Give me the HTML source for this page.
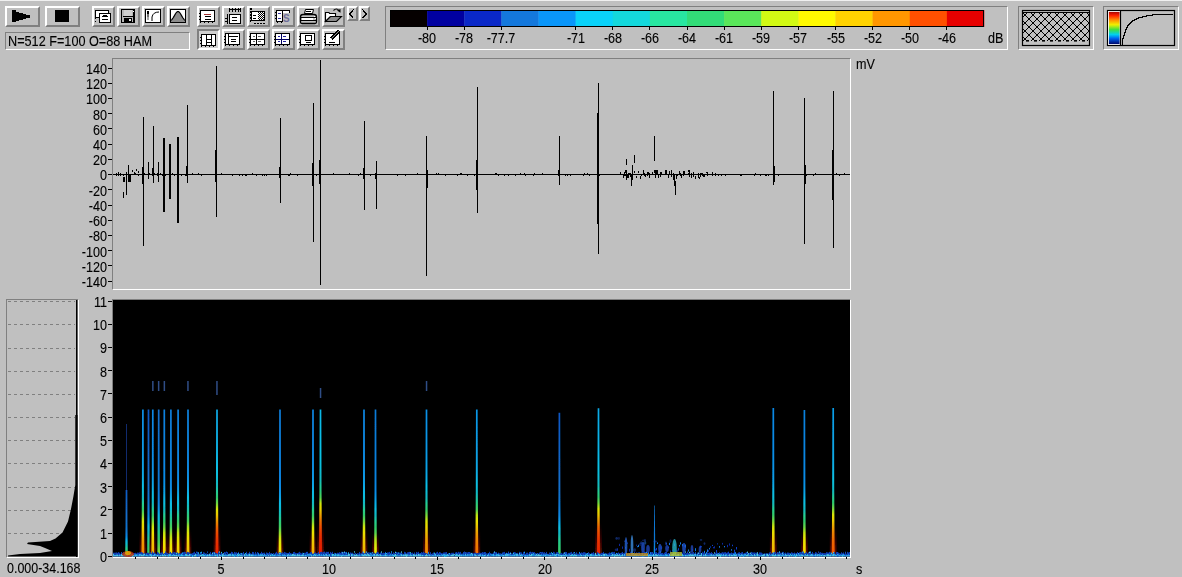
<!DOCTYPE html><html><head><meta charset="utf-8"><style>
*{margin:0;padding:0;box-sizing:border-box}
html,body{width:1182px;height:577px;overflow:hidden;background:#c0c0c0}
body{position:relative;font-family:"Liberation Sans",sans-serif;color:#000}
.a{position:absolute}
.btn{position:absolute;background:#c0c0c0;border-style:solid;border-width:2px;border-color:#fff #808080 #808080 #fff}
.sunk{position:absolute;border-style:solid;border-width:1px;border-color:#808080 #fff #fff #808080}
.t{position:absolute;font-size:14px;line-height:14px;white-space:nowrap;transform-origin:50% 50%;transform:scaleX(0.9);filter:grayscale(1);-webkit-text-stroke:0.12px #000}
svg{position:absolute;left:0;top:0}
</style></head><body>

<div class="a" style="left:0;top:0;width:1182px;height:1px;background:#f0f0f0"></div>
<div class="btn" style="left:5px;top:6px;width:35px;height:21px"></div>
<div class="btn" style="left:45px;top:6px;width:35px;height:21px"></div>
<div class="btn" style="left:92px;top:6px;width:23px;height:21px"></div>
<div class="btn" style="left:117px;top:6px;width:23px;height:21px"></div>
<div class="btn" style="left:142px;top:6px;width:23px;height:21px"></div>
<div class="btn" style="left:167px;top:6px;width:23px;height:21px"></div>
<div class="btn" style="left:197px;top:6px;width:23px;height:21px"></div>
<div class="btn" style="left:222px;top:6px;width:23px;height:21px"></div>
<div class="btn" style="left:247px;top:6px;width:23px;height:21px"></div>
<div class="btn" style="left:272px;top:6px;width:23px;height:21px"></div>
<div class="btn" style="left:297px;top:6px;width:23px;height:21px"></div>
<div class="btn" style="left:322px;top:6px;width:23px;height:21px"></div>
<div class="btn" style="left:347px;top:6px;width:11px;height:15px"></div>
<div class="btn" style="left:359px;top:6px;width:11px;height:15px"></div>
<div class="btn" style="left:197px;top:29px;width:23px;height:21px;border-color:#808080 #fff #fff #808080;background:#d0d0d0"></div>
<div class="btn" style="left:222px;top:29px;width:23px;height:21px"></div>
<div class="btn" style="left:247px;top:29px;width:23px;height:21px"></div>
<div class="btn" style="left:272px;top:29px;width:23px;height:21px"></div>
<div class="btn" style="left:297px;top:29px;width:23px;height:21px"></div>
<div class="btn" style="left:322px;top:29px;width:23px;height:21px"></div>
<svg width="400" height="55" shape-rendering="crispEdges"><polygon points="12,10 12,22 16,22 16,21 19,21 19,20 23,20 23,19 26,19 26,18 30,18 30,15 26,15 26,14 23,14 23,13 19,13 19,12 16,12 16,11 16,10" fill="#000"/><rect x="55" y="10" width="14" height="12" fill="#000"/><rect x="95" y="10" width="14" height="8" fill="#000"/><rect x="96" y="11" width="12" height="6" fill="#fff"/><rect x="99" y="13" width="12" height="10" fill="#000"/><rect x="100" y="14" width="10" height="8" fill="#fff"/><rect x="102" y="16" width="6" height="1" fill="#000"/><rect x="103" y="15" width="4" height="1" fill="#000"/><rect x="102" y="19" width="6" height="1" fill="#000"/><rect x="95" y="12" width="1" height="1" fill="#000"/><rect x="95" y="15" width="1" height="1" fill="#000"/><rect x="95" y="18" width="1" height="1" fill="#000"/><rect x="95" y="21" width="1" height="1" fill="#000"/><rect x="101" y="22" width="1" height="1" fill="#000"/><rect x="104" y="22" width="1" height="1" fill="#000"/><rect x="107" y="22" width="1" height="1" fill="#000"/><rect x="110" y="22" width="1" height="1" fill="#000"/><rect x="121" y="9" width="14" height="14" fill="#000"/><rect x="122" y="10" width="12" height="12" fill="#b8b8b8"/><rect x="124" y="10" width="8" height="6" fill="#d0d0d0"/><rect x="123" y="16" width="10" height="1" fill="#000"/><rect x="133" y="10" width="1" height="12" fill="#000"/><rect x="124" y="18" width="8" height="4" fill="#000"/><rect x="129" y="19" width="2" height="2" fill="#e8e8e8"/><rect x="133" y="11" width="1" height="1" fill="#fff"/><rect x="145" y="9" width="16" height="14" fill="#000"/><rect x="146" y="10" width="14" height="12" fill="#fff"/><rect x="147" y="11" width="2" height="3" fill="#000"/><rect x="147" y="14" width="2" height="3" fill="#707070"/><rect x="147" y="17" width="2" height="3" fill="#a8a8a8"/><path d="M152 21 L152 17 Q153 12 159 12" fill="none" stroke="#000" stroke-width="1" shape-rendering="auto"/><rect x="170" y="9" width="16" height="14" fill="#000"/><rect x="171" y="10" width="14" height="12" fill="#fff"/><polygon points="171.0,20.41 171.5,19.94 172.0,19.38 172.5,18.73 173.0,18.00 173.5,17.19 174.0,16.34 174.5,15.45 175.0,14.58 175.5,13.75 176.0,13.00 176.5,12.37 177.0,11.90 177.5,11.60 178.0,11.50 178.5,11.60 179.0,11.90 179.5,12.37 180.0,13.00 180.5,13.75 181.0,14.58 181.5,15.45 182.0,16.34 182.5,17.19 183.0,18.00 183.5,18.73 184.0,19.38 184.5,19.94 185.0,20.41 185,22 171,22" fill="#8c8c8c"/><polyline points="171.0,20.41 171.5,19.94 172.0,19.38 172.5,18.73 173.0,18.00 173.5,17.19 174.0,16.34 174.5,15.45 175.0,14.58 175.5,13.75 176.0,13.00 176.5,12.37 177.0,11.90 177.5,11.60 178.0,11.50 178.5,11.60 179.0,11.90 179.5,12.37 180.0,13.00 180.5,13.75 181.0,14.58 181.5,15.45 182.0,16.34 182.5,17.19 183.0,18.00 183.5,18.73 184.0,19.38 184.5,19.94 185.0,20.41" fill="none" stroke="#000" stroke-width="1.2" shape-rendering="auto"/><rect x="200" y="10" width="15" height="12" fill="#000"/><rect x="201" y="11" width="13" height="10" fill="#fff"/><path d="M204 14.5 L211 14.5" stroke="#a03030" stroke-width="1"/><rect x="205" y="16" width="6" height="1" fill="#000"/><rect x="205" y="19" width="6" height="1" fill="#000"/><rect x="199" y="13" width="1" height="1" fill="#000"/><rect x="199" y="16" width="1" height="1" fill="#000"/><rect x="199" y="19" width="1" height="1" fill="#000"/><rect x="200" y="22" width="1" height="1" fill="#000"/><rect x="204" y="22" width="1" height="1" fill="#000"/><rect x="208" y="22" width="1" height="1" fill="#000"/><rect x="212" y="22" width="1" height="1" fill="#000"/><rect x="229" y="9" width="11" height="1" fill="#000"/><rect x="229" y="8" width="1" height="4" fill="#000"/><rect x="232" y="8" width="1" height="4" fill="#000"/><rect x="235" y="8" width="1" height="4" fill="#000"/><rect x="238" y="8" width="1" height="4" fill="#000"/><rect x="240" y="8" width="1" height="4" fill="#000"/><rect x="229" y="14" width="12" height="10" fill="#000"/><rect x="230" y="15" width="10" height="8" fill="#fff"/><rect x="227" y="14" width="1" height="10" fill="#000"/><rect x="225" y="18" width="2" height="1" fill="#000"/><rect x="225" y="21" width="2" height="1" fill="#000"/><rect x="232" y="17" width="5" height="1" fill="#000"/><rect x="232" y="20" width="5" height="1" fill="#000"/><rect x="250" y="8" width="2" height="2" fill="#000"/><rect x="250" y="11" width="1" height="2" fill="#000"/><rect x="250" y="14" width="1" height="2" fill="#000"/><rect x="250" y="17" width="1" height="2" fill="#000"/><rect x="250" y="20" width="1" height="2" fill="#000"/><rect x="251" y="11" width="14" height="10" fill="#000"/><rect x="252" y="12" width="12" height="8" fill="#fff"/><rect x="258" y="12" width="1" height="1" fill="#000"/><rect x="260" y="12" width="1" height="1" fill="#000"/><rect x="262" y="12" width="1" height="1" fill="#000"/><rect x="259" y="13" width="1" height="1" fill="#000"/><rect x="261" y="13" width="1" height="1" fill="#000"/><rect x="263" y="13" width="1" height="1" fill="#000"/><rect x="258" y="14" width="1" height="1" fill="#000"/><rect x="260" y="14" width="1" height="1" fill="#000"/><rect x="262" y="14" width="1" height="1" fill="#000"/><rect x="259" y="15" width="1" height="1" fill="#000"/><rect x="261" y="15" width="1" height="1" fill="#000"/><rect x="263" y="15" width="1" height="1" fill="#000"/><rect x="258" y="16" width="1" height="1" fill="#000"/><rect x="260" y="16" width="1" height="1" fill="#000"/><rect x="262" y="16" width="1" height="1" fill="#000"/><rect x="259" y="17" width="1" height="1" fill="#000"/><rect x="261" y="17" width="1" height="1" fill="#000"/><rect x="263" y="17" width="1" height="1" fill="#000"/><rect x="258" y="18" width="1" height="1" fill="#000"/><rect x="260" y="18" width="1" height="1" fill="#000"/><rect x="262" y="18" width="1" height="1" fill="#000"/><rect x="259" y="19" width="1" height="1" fill="#000"/><rect x="261" y="19" width="1" height="1" fill="#000"/><rect x="263" y="19" width="1" height="1" fill="#000"/><rect x="253" y="15" width="3" height="1" fill="#000"/><rect x="253" y="18" width="3" height="1" fill="#000"/><rect x="254" y="23" width="2" height="1" fill="#000"/><rect x="257" y="23" width="2" height="1" fill="#000"/><rect x="260" y="23" width="2" height="1" fill="#000"/><rect x="263" y="23" width="2" height="1" fill="#000"/><rect x="276" y="10" width="14" height="1" fill="#000"/><rect x="276" y="10" width="1" height="12" fill="#000"/><rect x="276" y="21" width="7" height="1" fill="#000"/><rect x="282" y="10" width="1" height="12" fill="#000"/><rect x="289" y="10" width="1" height="3" fill="#000"/><rect x="277" y="11" width="5" height="10" fill="#fff"/><rect x="283" y="11" width="6" height="2" fill="#fff"/><path d="M278 14 L281 13 M278 19 L281 18" stroke="#3030a0" stroke-width="1"/><text x="283" y="21.5" font-family="Liberation Sans" font-size="10" font-weight="bold" fill="#70709a">S</text><rect x="275" y="12" width="1" height="1" fill="#000"/><rect x="275" y="15" width="1" height="1" fill="#000"/><rect x="275" y="18" width="1" height="1" fill="#000"/><rect x="277" y="22" width="1" height="1" fill="#000"/><rect x="281" y="22" width="1" height="1" fill="#000"/><path d="M305.5 9.5 L313.5 9.5 L312.5 13.5 L304.5 13.5 Z" fill="#fff" stroke="#000" stroke-width="1" shape-rendering="auto"/><rect x="306" y="11" width="5" height="1" fill="#000"/><path d="M300.5 17 Q300.5 14.5 303 14.5 L314 14.5 Q316.5 14.5 316.5 17 L316.5 22 Q316.5 23.5 315 23.5 L302 23.5 Q300.5 23.5 300.5 22 Z" fill="#c0c0c0" stroke="#000" stroke-width="1.3" shape-rendering="auto"/><rect x="302" y="18" width="11" height="2" fill="#fff"/><rect x="301" y="17" width="15" height="1" fill="#000"/><rect x="301" y="20" width="15" height="1" fill="#000"/><rect x="314" y="16" width="1" height="1" fill="#fff"/><rect x="315" y="18" width="1" height="1" fill="#fff"/><path d="M325.5 21.5 V12.5 H329 L329.5 13.5 H335.5 V17 H330 Z" fill="#fff" stroke="#000" stroke-width="1.1" shape-rendering="auto"/><path d="M325.5 21.5 L330.5 16.5 H341.5 L336.5 21.5 Z" fill="#8c8c8c" stroke="#000" stroke-width="1.1" shape-rendering="auto"/><path d="M333.5 10.5 Q336.5 7.5 339 10.5" fill="none" stroke="#000" stroke-width="1.1" shape-rendering="auto"/><path d="M337 10.5 L340.5 12.8 L340.5 9 Z" fill="#000" shape-rendering="auto"/><path d="M353.5 9.5 L349.5 14 L353.5 18.5" fill="none" stroke="#000" stroke-width="1.3"/><path d="M362.5 9.5 L366.5 14 L362.5 18.5" fill="none" stroke="#000" stroke-width="1.3"/><g transform="translate(-1,-1)"></g><rect x="201" y="34" width="15" height="12" fill="#000"/><rect x="202" y="35" width="13" height="10" fill="#fff"/><rect x="200" y="37" width="1" height="1" fill="#000"/><rect x="200" y="40" width="1" height="1" fill="#000"/><rect x="200" y="43" width="1" height="1" fill="#000"/><rect x="201" y="46" width="1" height="1" fill="#000"/><rect x="205" y="46" width="1" height="1" fill="#000"/><rect x="209" y="46" width="1" height="1" fill="#000"/><rect x="213" y="46" width="1" height="1" fill="#000"/><rect x="206" y="35" width="1" height="10" fill="#000"/><rect x="211" y="35" width="1" height="10" fill="#000"/><rect x="207" y="39" width="4" height="1" fill="#000"/><rect x="207" y="42" width="4" height="1" fill="#000"/><g transform="translate(-1,-1)"><rect x="226" y="34" width="15" height="12" fill="#000"/><rect x="227" y="35" width="13" height="10" fill="#fff"/><rect x="225" y="37" width="1" height="1" fill="#000"/><rect x="225" y="40" width="1" height="1" fill="#000"/><rect x="225" y="43" width="1" height="1" fill="#000"/><rect x="226" y="46" width="1" height="1" fill="#000"/><rect x="230" y="46" width="1" height="1" fill="#000"/><rect x="234" y="46" width="1" height="1" fill="#000"/><rect x="238" y="46" width="1" height="1" fill="#000"/><rect x="229" y="35" width="1" height="10" fill="#000"/><rect x="230" y="37" width="9" height="1" fill="#000"/><rect x="232" y="40" width="5" height="1" fill="#000"/><rect x="232" y="42" width="5" height="1" fill="#000"/><rect x="251" y="34" width="15" height="12" fill="#000"/><rect x="252" y="35" width="13" height="10" fill="#fff"/><rect x="250" y="37" width="1" height="1" fill="#000"/><rect x="250" y="40" width="1" height="1" fill="#000"/><rect x="250" y="43" width="1" height="1" fill="#000"/><rect x="251" y="46" width="1" height="1" fill="#000"/><rect x="255" y="46" width="1" height="1" fill="#000"/><rect x="259" y="46" width="1" height="1" fill="#000"/><rect x="263" y="46" width="1" height="1" fill="#000"/><rect x="257" y="35" width="1" height="10" fill="#000"/><rect x="252" y="40" width="13" height="1" fill="#000"/><path d="M254 38 L256 37 M259 37 L262 38 M254 43 L256 42 M259 42 L262 43" stroke="#606060" stroke-width="1"/><rect x="276" y="34" width="15" height="12" fill="#000"/><rect x="277" y="35" width="13" height="10" fill="#fff"/><rect x="275" y="37" width="1" height="1" fill="#000"/><rect x="275" y="40" width="1" height="1" fill="#000"/><rect x="275" y="43" width="1" height="1" fill="#000"/><rect x="276" y="46" width="1" height="1" fill="#000"/><rect x="280" y="46" width="1" height="1" fill="#000"/><rect x="284" y="46" width="1" height="1" fill="#000"/><rect x="288" y="46" width="1" height="1" fill="#000"/><rect x="282" y="35" width="1" height="10" fill="#000060"/><rect x="277" y="40" width="13" height="1" fill="#000060"/><path d="M279 38 L281 37 M284 37 L287 38 M279 43 L281 42 M284 42 L287 43" stroke="#2020a0" stroke-width="1"/><rect x="301" y="34" width="15" height="12" fill="#000"/><rect x="302" y="35" width="13" height="10" fill="#fff"/><rect x="300" y="37" width="1" height="1" fill="#000"/><rect x="300" y="40" width="1" height="1" fill="#000"/><rect x="300" y="43" width="1" height="1" fill="#000"/><rect x="301" y="46" width="1" height="1" fill="#000"/><rect x="305" y="46" width="1" height="1" fill="#000"/><rect x="309" y="46" width="1" height="1" fill="#000"/><rect x="313" y="46" width="1" height="1" fill="#000"/><rect x="306" y="36" width="7" height="6" fill="#000"/><rect x="307" y="37" width="5" height="4" fill="#fff"/><rect x="307" y="43" width="5" height="1" fill="#000"/><rect x="326" y="34" width="15" height="12" fill="#000"/><rect x="327" y="35" width="13" height="10" fill="#fff"/><rect x="325" y="37" width="1" height="1" fill="#000"/><rect x="325" y="40" width="1" height="1" fill="#000"/><rect x="325" y="43" width="1" height="1" fill="#000"/><rect x="326" y="46" width="1" height="1" fill="#000"/><rect x="330" y="46" width="1" height="1" fill="#000"/><rect x="334" y="46" width="1" height="1" fill="#000"/><rect x="338" y="46" width="1" height="1" fill="#000"/><path d="M332 40 L340 32" stroke="#000" stroke-width="3"/><path d="M332 40 L340 32" stroke="#909090" stroke-width="1.2"/><rect x="330" y="43" width="6" height="1" fill="#000"/></g></svg>
<div class="sunk" style="left:5px;top:32px;width:185px;height:18px"></div>
<div class="t" style="left:8px;top:34px;transform-origin:0 50%;transform:scaleX(0.905)">N=512 F=100 O=88 HAM</div>
<div class="sunk" style="left:385px;top:6px;width:623px;height:44px"></div>
<svg width="1010" height="50"><rect x="390.00" y="10" width="37.42" height="17" fill="#050000"/><rect x="427.12" y="10" width="37.42" height="17" fill="#0000a0"/><rect x="464.25" y="10" width="37.42" height="17" fill="#0a28c8"/><rect x="501.38" y="10" width="37.42" height="17" fill="#1478dc"/><rect x="538.50" y="10" width="37.42" height="17" fill="#0a96fa"/><rect x="575.62" y="10" width="37.42" height="17" fill="#0ad2fa"/><rect x="612.75" y="10" width="37.42" height="17" fill="#14d8dc"/><rect x="649.88" y="10" width="37.42" height="17" fill="#28e6a0"/><rect x="687.00" y="10" width="37.42" height="17" fill="#32dc78"/><rect x="724.12" y="10" width="37.42" height="17" fill="#5ae65a"/><rect x="761.25" y="10" width="37.42" height="17" fill="#d2fa14"/><rect x="798.38" y="10" width="37.42" height="17" fill="#fffa00"/><rect x="835.50" y="10" width="37.42" height="17" fill="#ffd200"/><rect x="872.62" y="10" width="37.42" height="17" fill="#ff9600"/><rect x="909.75" y="10" width="37.42" height="17" fill="#ff5000"/><rect x="946.88" y="10" width="37.42" height="17" fill="#e60000"/><rect x="390.5" y="10.5" width="593" height="16" fill="none" stroke="#000" stroke-width="1"/></svg>
<div class="a" style="left:426.6px;top:27px;width:1px;height:3px;background:#000"></div>
<div class="t" style="left:387.1px;width:80px;text-align:center;top:31px">-80</div>
<div class="a" style="left:463.8px;top:27px;width:1px;height:3px;background:#000"></div>
<div class="t" style="left:424.2px;width:80px;text-align:center;top:31px">-78</div>
<div class="a" style="left:500.9px;top:27px;width:1px;height:3px;background:#000"></div>
<div class="t" style="left:461.4px;width:80px;text-align:center;top:31px">-77.7</div>
<div class="a" style="left:575.1px;top:27px;width:1px;height:3px;background:#000"></div>
<div class="t" style="left:535.6px;width:80px;text-align:center;top:31px">-71</div>
<div class="a" style="left:612.2px;top:27px;width:1px;height:3px;background:#000"></div>
<div class="t" style="left:572.8px;width:80px;text-align:center;top:31px">-68</div>
<div class="a" style="left:649.4px;top:27px;width:1px;height:3px;background:#000"></div>
<div class="t" style="left:609.9px;width:80px;text-align:center;top:31px">-66</div>
<div class="a" style="left:686.5px;top:27px;width:1px;height:3px;background:#000"></div>
<div class="t" style="left:647.0px;width:80px;text-align:center;top:31px">-64</div>
<div class="a" style="left:723.6px;top:27px;width:1px;height:3px;background:#000"></div>
<div class="t" style="left:684.1px;width:80px;text-align:center;top:31px">-61</div>
<div class="a" style="left:760.8px;top:27px;width:1px;height:3px;background:#000"></div>
<div class="t" style="left:721.2px;width:80px;text-align:center;top:31px">-59</div>
<div class="a" style="left:797.9px;top:27px;width:1px;height:3px;background:#000"></div>
<div class="t" style="left:758.4px;width:80px;text-align:center;top:31px">-57</div>
<div class="a" style="left:835.0px;top:27px;width:1px;height:3px;background:#000"></div>
<div class="t" style="left:795.5px;width:80px;text-align:center;top:31px">-55</div>
<div class="a" style="left:872.1px;top:27px;width:1px;height:3px;background:#000"></div>
<div class="t" style="left:832.6px;width:80px;text-align:center;top:31px">-52</div>
<div class="a" style="left:909.2px;top:27px;width:1px;height:3px;background:#000"></div>
<div class="t" style="left:869.8px;width:80px;text-align:center;top:31px">-50</div>
<div class="a" style="left:946.4px;top:27px;width:1px;height:3px;background:#000"></div>
<div class="t" style="left:906.9px;width:80px;text-align:center;top:31px">-46</div>
<div class="t" style="left:988px;top:31px;transform-origin:0 50%">dB</div>
<div class="sunk" style="left:1018px;top:6px;width:76px;height:44px"></div>
<div class="sunk" style="left:1103px;top:6px;width:76px;height:44px"></div>
<svg width="1182" height="55"><defs><clipPath id="cw"><rect x="1023" y="13" width="66" height="28"/></clipPath></defs><rect x="1022.5" y="10.5" width="67" height="35" fill="none" stroke="#000" stroke-width="1.2"/><line x1="1023" y1="12.5" x2="1089" y2="12.5" stroke="#000" stroke-width="1"/><g clip-path="url(#cw)" stroke="#000" stroke-width="1" fill="none" shape-rendering="crispEdges"><line x1="975" y1="41" x2="1003" y2="13"/><line x1="975" y1="13" x2="1003" y2="41"/><line x1="983" y1="41" x2="1011" y2="13"/><line x1="983" y1="13" x2="1011" y2="41"/><line x1="991" y1="41" x2="1019" y2="13"/><line x1="991" y1="13" x2="1019" y2="41"/><line x1="999" y1="41" x2="1027" y2="13"/><line x1="999" y1="13" x2="1027" y2="41"/><line x1="1007" y1="41" x2="1035" y2="13"/><line x1="1007" y1="13" x2="1035" y2="41"/><line x1="1015" y1="41" x2="1043" y2="13"/><line x1="1015" y1="13" x2="1043" y2="41"/><line x1="1023" y1="41" x2="1051" y2="13"/><line x1="1023" y1="13" x2="1051" y2="41"/><line x1="1031" y1="41" x2="1059" y2="13"/><line x1="1031" y1="13" x2="1059" y2="41"/><line x1="1039" y1="41" x2="1067" y2="13"/><line x1="1039" y1="13" x2="1067" y2="41"/><line x1="1047" y1="41" x2="1075" y2="13"/><line x1="1047" y1="13" x2="1075" y2="41"/><line x1="1055" y1="41" x2="1083" y2="13"/><line x1="1055" y1="13" x2="1083" y2="41"/><line x1="1063" y1="41" x2="1091" y2="13"/><line x1="1063" y1="13" x2="1091" y2="41"/><line x1="1071" y1="41" x2="1099" y2="13"/><line x1="1071" y1="13" x2="1099" y2="41"/><line x1="1079" y1="41" x2="1107" y2="13"/><line x1="1079" y1="13" x2="1107" y2="41"/><line x1="1087" y1="41" x2="1115" y2="13"/><line x1="1087" y1="13" x2="1115" y2="41"/><line x1="1095" y1="41" x2="1123" y2="13"/><line x1="1095" y1="13" x2="1123" y2="41"/><line x1="1103" y1="41" x2="1131" y2="13"/><line x1="1103" y1="13" x2="1131" y2="41"/><line x1="1111" y1="41" x2="1139" y2="13"/><line x1="1111" y1="13" x2="1139" y2="41"/><line x1="1119" y1="41" x2="1147" y2="13"/><line x1="1119" y1="13" x2="1147" y2="41"/><line x1="1127" y1="41" x2="1155" y2="13"/><line x1="1127" y1="13" x2="1155" y2="41"/></g><rect x="1026.0" y="40" width="3" height="1.6" fill="#000"/><rect x="1034.0" y="40" width="3" height="1.6" fill="#000"/><rect x="1042.0" y="40" width="3" height="1.6" fill="#000"/><rect x="1050.0" y="40" width="3" height="1.6" fill="#000"/><rect x="1058.0" y="40" width="3" height="1.6" fill="#000"/><rect x="1066.0" y="40" width="3" height="1.6" fill="#000"/><rect x="1074.0" y="40" width="3" height="1.6" fill="#000"/><rect x="1082.0" y="40" width="3" height="1.6" fill="#000"/><rect x="1107.5" y="10.5" width="67" height="35" fill="none" stroke="#000" stroke-width="1.2"/><defs><linearGradient id="wg" x1="0" y1="0" x2="0" y2="1"><stop offset="0" stop-color="#a00000"/><stop offset="0.12" stop-color="#ff2000"/><stop offset="0.28" stop-color="#ffa000"/><stop offset="0.4" stop-color="#f0f000"/><stop offset="0.55" stop-color="#40e040"/><stop offset="0.7" stop-color="#00d0f0"/><stop offset="0.82" stop-color="#0060f0"/><stop offset="1" stop-color="#000060"/></linearGradient></defs><rect x="1108.5" y="11.5" width="11.5" height="33" fill="url(#wg)" stroke="#fff" stroke-width="0.8"/><line x1="1120.5" y1="11" x2="1120.5" y2="45" stroke="#000" stroke-width="1.2"/><polyline points="1122.5,44.5 1122.5,38.5 1123.5,38.5 1123.5,35.5 1124.5,35.5 1124.5,32.5 1125.5,32.5 1125.5,29.5 1126.5,29.5 1126.5,27.5 1127.5,27.5 1127.5,25.5 1128.5,25.5 1128.5,24.5 1129.5,24.5 1129.5,23.5 1130.5,23.5 1130.5,22.5 1131.5,22.5 1131.5,21.5 1132.5,21.5 1132.5,20.5 1134.5,20.5 1134.5,19.5 1136.5,19.5 1136.5,18.5 1138.5,18.5 1138.5,17.5 1142.5,17.5 1142.5,16.5 1146.5,16.5 1146.5,15.5 1152.5,15.5 1152.5,14.5 1172.5,14.5 1172.5,13.5" fill="none" stroke="#000" stroke-width="1.5" shape-rendering="crispEdges"/></svg>
<div class="a" style="left:112px;top:58px;width:739px;height:232px;border-style:solid;border-width:1px;border-color:#808080 #fff #fff #808080"></div>
<div class="t" style="left:47px;width:60px;text-align:right;top:274.9px;transform-origin:100% 50%">-140</div>
<div class="t" style="left:47px;width:60px;text-align:right;top:259.7px;transform-origin:100% 50%">-120</div>
<div class="t" style="left:47px;width:60px;text-align:right;top:244.5px;transform-origin:100% 50%">-100</div>
<div class="t" style="left:47px;width:60px;text-align:right;top:229.3px;transform-origin:100% 50%">-80</div>
<div class="t" style="left:47px;width:60px;text-align:right;top:214.0px;transform-origin:100% 50%">-60</div>
<div class="t" style="left:47px;width:60px;text-align:right;top:198.8px;transform-origin:100% 50%">-40</div>
<div class="t" style="left:47px;width:60px;text-align:right;top:183.6px;transform-origin:100% 50%">-20</div>
<div class="t" style="left:47px;width:60px;text-align:right;top:168.4px;transform-origin:100% 50%">0</div>
<div class="t" style="left:47px;width:60px;text-align:right;top:153.2px;transform-origin:100% 50%">20</div>
<div class="t" style="left:47px;width:60px;text-align:right;top:138.0px;transform-origin:100% 50%">40</div>
<div class="t" style="left:47px;width:60px;text-align:right;top:122.8px;transform-origin:100% 50%">60</div>
<div class="t" style="left:47px;width:60px;text-align:right;top:107.5px;transform-origin:100% 50%">80</div>
<div class="t" style="left:47px;width:60px;text-align:right;top:92.3px;transform-origin:100% 50%">100</div>
<div class="t" style="left:47px;width:60px;text-align:right;top:77.1px;transform-origin:100% 50%">120</div>
<div class="t" style="left:47px;width:60px;text-align:right;top:61.9px;transform-origin:100% 50%">140</div>
<div class="t" style="left:856px;top:56.5px;transform-origin:0 50%">mV</div>
<svg width="1182" height="300"><rect x="108" y="281" width="4" height="1" fill="#000"/><rect x="108" y="265" width="4" height="1" fill="#000"/><rect x="108" y="250" width="4" height="1" fill="#000"/><rect x="108" y="235" width="4" height="1" fill="#000"/><rect x="108" y="220" width="4" height="1" fill="#000"/><rect x="108" y="205" width="4" height="1" fill="#000"/><rect x="108" y="189" width="4" height="1" fill="#000"/><rect x="108" y="174" width="4" height="1" fill="#000"/><rect x="108" y="159" width="4" height="1" fill="#000"/><rect x="108" y="144" width="4" height="1" fill="#000"/><rect x="108" y="128" width="4" height="1" fill="#000"/><rect x="108" y="113" width="4" height="1" fill="#000"/><rect x="108" y="98" width="4" height="1" fill="#000"/><rect x="108" y="83" width="4" height="1" fill="#000"/><rect x="108" y="68" width="4" height="1" fill="#000"/><rect x="113" y="174" width="737" height="1" fill="#000"/><rect x="123" y="175" width="1" height="1" fill="#000"/><rect x="135" y="173" width="1" height="1" fill="#000"/><rect x="138" y="175" width="1" height="1" fill="#000"/><rect x="144" y="173" width="1" height="1" fill="#000"/><rect x="154" y="173" width="1" height="1" fill="#000"/><rect x="160" y="173" width="1" height="1" fill="#000"/><rect x="162" y="175" width="1" height="1" fill="#000"/><rect x="165" y="175" width="1" height="1" fill="#000"/><rect x="170" y="175" width="1" height="1" fill="#000"/><rect x="172" y="173" width="1" height="1" fill="#000"/><rect x="174" y="175" width="1" height="1" fill="#000"/><rect x="181" y="175" width="1" height="1" fill="#000"/><rect x="185" y="175" width="1" height="1" fill="#000"/><rect x="192" y="173" width="1" height="1" fill="#000"/><rect x="198" y="173" width="1" height="1" fill="#000"/><rect x="201" y="175" width="1" height="1" fill="#000"/><rect x="221" y="173" width="1" height="1" fill="#000"/><rect x="232" y="175" width="1" height="1" fill="#000"/><rect x="239" y="175" width="1" height="1" fill="#000"/><rect x="242" y="175" width="1" height="1" fill="#000"/><rect x="245" y="175" width="1" height="1" fill="#000"/><rect x="246" y="175" width="1" height="1" fill="#000"/><rect x="252" y="173" width="1" height="1" fill="#000"/><rect x="256" y="175" width="1" height="1" fill="#000"/><rect x="262" y="175" width="1" height="1" fill="#000"/><rect x="264" y="175" width="1" height="1" fill="#000"/><rect x="266" y="175" width="1" height="1" fill="#000"/><rect x="279" y="175" width="1" height="1" fill="#000"/><rect x="280" y="175" width="1" height="1" fill="#000"/><rect x="288" y="175" width="1" height="1" fill="#000"/><rect x="289" y="175" width="1" height="1" fill="#000"/><rect x="290" y="173" width="1" height="1" fill="#000"/><rect x="297" y="175" width="1" height="1" fill="#000"/><rect x="316" y="175" width="1" height="1" fill="#000"/><rect x="333" y="173" width="1" height="1" fill="#000"/><rect x="349" y="173" width="1" height="1" fill="#000"/><rect x="358" y="175" width="1" height="1" fill="#000"/><rect x="360" y="173" width="1" height="1" fill="#000"/><rect x="370" y="175" width="1" height="1" fill="#000"/><rect x="375" y="175" width="1" height="1" fill="#000"/><rect x="397" y="175" width="1" height="1" fill="#000"/><rect x="405" y="175" width="1" height="1" fill="#000"/><rect x="417" y="173" width="1" height="1" fill="#000"/><rect x="436" y="173" width="1" height="1" fill="#000"/><rect x="438" y="173" width="1" height="1" fill="#000"/><rect x="445" y="175" width="1" height="1" fill="#000"/><rect x="457" y="175" width="1" height="1" fill="#000"/><rect x="460" y="173" width="1" height="1" fill="#000"/><rect x="461" y="173" width="1" height="1" fill="#000"/><rect x="467" y="175" width="1" height="1" fill="#000"/><rect x="474" y="175" width="1" height="1" fill="#000"/><rect x="495" y="173" width="1" height="1" fill="#000"/><rect x="496" y="173" width="1" height="1" fill="#000"/><rect x="498" y="175" width="1" height="1" fill="#000"/><rect x="504" y="175" width="1" height="1" fill="#000"/><rect x="508" y="175" width="1" height="1" fill="#000"/><rect x="515" y="175" width="1" height="1" fill="#000"/><rect x="520" y="173" width="1" height="1" fill="#000"/><rect x="524" y="173" width="1" height="1" fill="#000"/><rect x="525" y="175" width="1" height="1" fill="#000"/><rect x="533" y="175" width="1" height="1" fill="#000"/><rect x="534" y="173" width="1" height="1" fill="#000"/><rect x="542" y="173" width="1" height="1" fill="#000"/><rect x="565" y="175" width="1" height="1" fill="#000"/><rect x="567" y="175" width="1" height="1" fill="#000"/><rect x="570" y="175" width="1" height="1" fill="#000"/><rect x="583" y="175" width="1" height="1" fill="#000"/><rect x="584" y="173" width="1" height="1" fill="#000"/><rect x="587" y="173" width="1" height="1" fill="#000"/><rect x="589" y="175" width="1" height="1" fill="#000"/><rect x="599" y="175" width="1" height="1" fill="#000"/><rect x="620" y="173" width="1" height="1" fill="#000"/><rect x="625" y="175" width="1" height="1" fill="#000"/><rect x="627" y="175" width="1" height="1" fill="#000"/><rect x="629" y="173" width="1" height="1" fill="#000"/><rect x="641" y="175" width="1" height="1" fill="#000"/><rect x="643" y="173" width="1" height="1" fill="#000"/><rect x="647" y="175" width="1" height="1" fill="#000"/><rect x="658" y="175" width="1" height="1" fill="#000"/><rect x="673" y="173" width="1" height="1" fill="#000"/><rect x="674" y="175" width="1" height="1" fill="#000"/><rect x="677" y="175" width="1" height="1" fill="#000"/><rect x="688" y="173" width="1" height="1" fill="#000"/><rect x="715" y="175" width="1" height="1" fill="#000"/><rect x="718" y="175" width="1" height="1" fill="#000"/><rect x="740" y="175" width="1" height="1" fill="#000"/><rect x="741" y="175" width="1" height="1" fill="#000"/><rect x="754" y="175" width="1" height="1" fill="#000"/><rect x="755" y="173" width="1" height="1" fill="#000"/><rect x="760" y="175" width="1" height="1" fill="#000"/><rect x="765" y="175" width="1" height="1" fill="#000"/><rect x="766" y="175" width="1" height="1" fill="#000"/><rect x="768" y="175" width="1" height="1" fill="#000"/><rect x="778" y="175" width="1" height="1" fill="#000"/><rect x="806" y="175" width="1" height="1" fill="#000"/><rect x="813" y="175" width="1" height="1" fill="#000"/><rect x="815" y="173" width="1" height="1" fill="#000"/><rect x="836" y="173" width="1" height="1" fill="#000"/><rect x="839" y="175" width="1" height="1" fill="#000"/><rect x="844" y="173" width="1" height="1" fill="#000"/><rect x="620" y="172" width="1" height="3" fill="#000"/><rect x="623" y="175" width="1" height="3" fill="#000"/><rect x="624" y="172" width="1" height="4" fill="#000"/><rect x="625" y="170" width="1" height="3" fill="#000"/><rect x="626" y="170" width="1" height="7" fill="#000"/><rect x="627" y="176" width="1" height="2" fill="#000"/><rect x="628" y="173" width="1" height="5" fill="#000"/><rect x="629" y="173" width="1" height="1" fill="#000"/><rect x="630" y="173" width="1" height="4" fill="#000"/><rect x="631" y="175" width="1" height="1" fill="#000"/><rect x="632" y="173" width="1" height="3" fill="#000"/><rect x="634" y="171" width="1" height="2" fill="#000"/><rect x="636" y="176" width="1" height="2" fill="#000"/><rect x="638" y="171" width="1" height="2" fill="#000"/><rect x="640" y="176" width="1" height="3" fill="#000"/><rect x="643" y="170" width="1" height="4" fill="#000"/><rect x="644" y="173" width="1" height="3" fill="#000"/><rect x="645" y="175" width="1" height="2" fill="#000"/><rect x="647" y="172" width="1" height="3" fill="#000"/><rect x="648" y="172" width="1" height="2" fill="#000"/><rect x="649" y="173" width="1" height="5" fill="#000"/><rect x="652" y="172" width="1" height="2" fill="#000"/><rect x="655" y="173" width="1" height="5" fill="#000"/><rect x="656" y="170" width="1" height="4" fill="#000"/><rect x="657" y="170" width="1" height="5" fill="#000"/><rect x="658" y="174" width="1" height="4" fill="#000"/><rect x="660" y="172" width="1" height="5" fill="#000"/><rect x="661" y="172" width="1" height="2" fill="#000"/><rect x="665" y="170" width="1" height="5" fill="#000"/><rect x="666" y="170" width="1" height="4" fill="#000"/><rect x="668" y="174" width="1" height="4" fill="#000"/><rect x="669" y="171" width="1" height="4" fill="#000"/><rect x="671" y="170" width="1" height="7" fill="#000"/><rect x="673" y="173" width="1" height="7" fill="#000"/><rect x="676" y="174" width="1" height="5" fill="#000"/><rect x="679" y="171" width="1" height="3" fill="#000"/><rect x="680" y="173" width="1" height="3" fill="#000"/><rect x="681" y="175" width="1" height="3" fill="#000"/><rect x="683" y="171" width="1" height="5" fill="#000"/><rect x="684" y="171" width="1" height="3" fill="#000"/><rect x="688" y="170" width="1" height="2" fill="#000"/><rect x="689" y="170" width="1" height="7" fill="#000"/><rect x="691" y="173" width="1" height="5" fill="#000"/><rect x="693" y="172" width="1" height="5" fill="#000"/><rect x="695" y="176" width="1" height="3" fill="#000"/><rect x="698" y="173" width="1" height="5" fill="#000"/><rect x="699" y="177" width="1" height="2" fill="#000"/><rect x="700" y="173" width="1" height="4" fill="#000"/><rect x="701" y="173" width="1" height="2" fill="#000"/><rect x="702" y="173" width="1" height="3" fill="#000"/><rect x="703" y="174" width="1" height="3" fill="#000"/><rect x="704" y="175" width="1" height="2" fill="#000"/><rect x="706" y="172" width="1" height="1" fill="#000"/><rect x="707" y="172" width="1" height="4" fill="#000"/><rect x="712" y="172" width="1" height="4" fill="#000"/><rect x="715" y="173" width="1" height="1" fill="#000"/><rect x="717" y="174" width="1" height="1" fill="#000"/><rect x="719" y="174" width="1" height="1" fill="#000"/><rect x="721" y="174" width="1" height="2" fill="#000"/><rect x="722" y="174" width="1" height="1" fill="#000"/><rect x="725" y="174" width="1" height="2" fill="#000"/><rect x="726" y="174" width="1" height="1" fill="#000"/><rect x="729" y="174" width="1" height="1" fill="#000"/><rect x="733" y="174" width="1" height="1" fill="#000"/><rect x="143" y="117" width="1" height="129" fill="#000"/><rect x="142" y="167" width="2" height="17" fill="#000"/><rect x="148" y="162" width="1" height="17" fill="#000"/><rect x="148" y="173" width="2" height="2" fill="#000"/><rect x="153" y="126" width="1" height="57" fill="#000"/><rect x="152" y="168" width="2" height="8" fill="#000"/><rect x="158" y="162" width="1" height="20" fill="#000"/><rect x="157" y="173" width="2" height="3" fill="#000"/><rect x="163" y="138" width="2" height="74" fill="#000"/><rect x="163" y="170" width="2" height="9" fill="#000"/><rect x="169" y="144" width="2" height="55" fill="#000"/><rect x="169" y="171" width="2" height="7" fill="#000"/><rect x="177" y="137" width="2" height="86" fill="#000"/><rect x="177" y="170" width="2" height="11" fill="#000"/><rect x="187" y="105" width="1" height="78" fill="#000"/><rect x="186" y="166" width="2" height="10" fill="#000"/><rect x="216" y="66" width="1" height="151" fill="#000"/><rect x="215" y="150" width="2" height="32" fill="#000"/><rect x="280" y="118" width="1" height="85" fill="#000"/><rect x="279" y="167" width="2" height="11" fill="#000"/><rect x="313" y="103" width="1" height="139" fill="#000"/><rect x="312" y="163" width="2" height="23" fill="#000"/><rect x="320" y="60" width="1" height="225" fill="#000"/><rect x="319" y="160" width="2" height="24" fill="#000"/><rect x="364" y="121" width="1" height="89" fill="#000"/><rect x="363" y="168" width="2" height="11" fill="#000"/><rect x="376" y="161" width="1" height="48" fill="#000"/><rect x="375" y="173" width="2" height="6" fill="#000"/><rect x="426" y="136" width="1" height="140" fill="#000"/><rect x="426" y="170" width="2" height="18" fill="#000"/><rect x="477" y="87" width="1" height="126" fill="#000"/><rect x="476" y="160" width="2" height="30" fill="#000"/><rect x="559" y="136" width="1" height="49" fill="#000"/><rect x="558" y="170" width="2" height="6" fill="#000"/><rect x="598" y="83" width="1" height="171" fill="#000"/><rect x="597" y="113" width="2" height="111" fill="#000"/><rect x="654" y="136" width="1" height="25" fill="#000"/><rect x="654" y="170" width="2" height="3" fill="#000"/><rect x="773" y="91" width="1" height="94" fill="#000"/><rect x="773" y="166" width="2" height="16" fill="#000"/><rect x="804" y="98" width="1" height="146" fill="#000"/><rect x="804" y="165" width="2" height="19" fill="#000"/><rect x="833" y="91" width="1" height="157" fill="#000"/><rect x="832" y="150" width="2" height="50" fill="#000"/><rect x="116" y="173" width="1" height="3" fill="#000"/><rect x="118" y="172" width="1" height="4" fill="#000"/><rect x="120" y="173" width="1" height="3" fill="#000"/><rect x="123" y="177" width="2" height="5" fill="#000"/><rect x="123" y="192" width="1" height="6" fill="#000"/><rect x="126" y="172" width="1" height="23" fill="#000"/><rect x="128" y="165" width="1" height="17" fill="#000"/><rect x="129" y="175" width="2" height="7" fill="#000"/><rect x="132" y="170" width="1" height="2" fill="#000"/><rect x="134" y="172" width="1" height="2" fill="#000"/><rect x="136" y="169" width="1" height="2" fill="#000"/><rect x="138" y="171" width="1" height="2" fill="#000"/><rect x="626" y="159" width="1" height="6" fill="#000"/><rect x="634" y="155" width="1" height="8" fill="#000"/><rect x="631" y="176" width="1" height="10" fill="#000"/><rect x="675" y="181" width="1" height="14" fill="#000"/><rect x="674" y="176" width="1" height="10" fill="#000"/><rect x="626" y="170" width="1" height="10" fill="#000"/><rect x="632" y="165" width="1" height="15" fill="#000"/></svg>
<div class="a" style="left:112px;top:299px;width:739px;height:259px;border-style:solid;border-width:1px;border-color:#808080 #fff #fff #808080"></div>
<svg width="1182" height="577"><rect x="113" y="300" width="737" height="256.5" fill="#000"/><rect x="108" y="556" width="4" height="1" fill="#000"/><rect x="108" y="533" width="4" height="1" fill="#000"/><rect x="108" y="509" width="4" height="1" fill="#000"/><rect x="108" y="486" width="4" height="1" fill="#000"/><rect x="108" y="463" width="4" height="1" fill="#000"/><rect x="108" y="440" width="4" height="1" fill="#000"/><rect x="108" y="417" width="4" height="1" fill="#000"/><rect x="108" y="393" width="4" height="1" fill="#000"/><rect x="108" y="370" width="4" height="1" fill="#000"/><rect x="108" y="347" width="4" height="1" fill="#000"/><rect x="108" y="324" width="4" height="1" fill="#000"/><rect x="108" y="301" width="4" height="1" fill="#000"/><defs><clipPath id="spc"><rect x="113" y="300" width="737" height="257"/></clipPath><filter id="sb" x="-5%" y="-5%" width="110%" height="110%"><feGaussianBlur stdDeviation="0.45"/></filter></defs><g clip-path="url(#spc)"><g filter="url(#sb)"><defs><radialGradient id="halo" cx="0.5" cy="1" r="1"><stop offset="0" stop-color="#a01400" stop-opacity="1"/><stop offset="0.5" stop-color="#640a00" stop-opacity="0.6"/><stop offset="1" stop-color="#3c0000" stop-opacity="0"/></radialGradient><linearGradient id="sg0" x1="0" y1="0" x2="0" y2="1"><stop offset="0.00" stop-color="#1265d7"/><stop offset="0.04" stop-color="#1267d8"/><stop offset="0.08" stop-color="#1269d8"/><stop offset="0.12" stop-color="#126bd9"/><stop offset="0.16" stop-color="#136dd9"/><stop offset="0.20" stop-color="#136eda"/><stop offset="0.24" stop-color="#1370da"/><stop offset="0.28" stop-color="#1372db"/><stop offset="0.32" stop-color="#1474db"/><stop offset="0.36" stop-color="#1477dc"/><stop offset="0.40" stop-color="#1478dc"/><stop offset="0.44" stop-color="#1479dd"/><stop offset="0.48" stop-color="#137bdf"/><stop offset="0.52" stop-color="#137ce0"/><stop offset="0.56" stop-color="#127ee2"/><stop offset="0.60" stop-color="#1181e5"/><stop offset="0.64" stop-color="#0f86ea"/><stop offset="0.68" stop-color="#0d8ef2"/><stop offset="0.72" stop-color="#0a9dfa"/><stop offset="0.76" stop-color="#0abffa"/><stop offset="0.80" stop-color="#0ecee9"/><stop offset="0.84" stop-color="#1acfc3"/><stop offset="0.88" stop-color="#2ae099"/><stop offset="0.92" stop-color="#31dc7b"/><stop offset="0.96" stop-color="#45e16a"/><stop offset="1.00" stop-color="#54e55e"/></linearGradient><linearGradient id="sg1" x1="0" y1="0" x2="0" y2="1"><stop offset="0.00" stop-color="#0a9bfa"/><stop offset="0.04" stop-color="#0a9cfa"/><stop offset="0.08" stop-color="#0a9efa"/><stop offset="0.12" stop-color="#0a9ffa"/><stop offset="0.16" stop-color="#0aa1fa"/><stop offset="0.20" stop-color="#0aa2fa"/><stop offset="0.24" stop-color="#0aa4fa"/><stop offset="0.28" stop-color="#0aa6fa"/><stop offset="0.32" stop-color="#0aa9fa"/><stop offset="0.36" stop-color="#0aacfa"/><stop offset="0.40" stop-color="#0ab0fa"/><stop offset="0.44" stop-color="#0ab6fa"/><stop offset="0.48" stop-color="#0ac1fa"/><stop offset="0.52" stop-color="#0ad1fa"/><stop offset="0.56" stop-color="#0eceea"/><stop offset="0.60" stop-color="#15c9d0"/><stop offset="0.64" stop-color="#27e0a3"/><stop offset="0.68" stop-color="#35dd75"/><stop offset="0.72" stop-color="#82ed42"/><stop offset="0.76" stop-color="#e9fa0a"/><stop offset="0.80" stop-color="#ffe800"/><stop offset="0.84" stop-color="#ffca00"/><stop offset="0.88" stop-color="#ffaf00"/><stop offset="0.92" stop-color="#ff9f00"/><stop offset="0.96" stop-color="#ff9500"/><stop offset="1.00" stop-color="#ff8f00"/></linearGradient><linearGradient id="sg2" x1="0" y1="0" x2="0" y2="1"><stop offset="0.00" stop-color="#115fd6"/><stop offset="0.04" stop-color="#1161d6"/><stop offset="0.08" stop-color="#1163d7"/><stop offset="0.12" stop-color="#1265d7"/><stop offset="0.16" stop-color="#1267d8"/><stop offset="0.20" stop-color="#1269d8"/><stop offset="0.24" stop-color="#126bd9"/><stop offset="0.28" stop-color="#136dd9"/><stop offset="0.32" stop-color="#136fda"/><stop offset="0.36" stop-color="#1371da"/><stop offset="0.40" stop-color="#1373db"/><stop offset="0.44" stop-color="#1476db"/><stop offset="0.48" stop-color="#1478dc"/><stop offset="0.52" stop-color="#137ade"/><stop offset="0.56" stop-color="#137ce0"/><stop offset="0.60" stop-color="#127fe3"/><stop offset="0.64" stop-color="#1083e7"/><stop offset="0.68" stop-color="#0e8aee"/><stop offset="0.72" stop-color="#0b94f8"/><stop offset="0.76" stop-color="#0ab2fa"/><stop offset="0.80" stop-color="#0cd0f4"/><stop offset="0.84" stop-color="#14c8d2"/><stop offset="0.88" stop-color="#25dda7"/><stop offset="0.92" stop-color="#2ede87"/><stop offset="0.96" stop-color="#3ade72"/><stop offset="1.00" stop-color="#4ae266"/></linearGradient><linearGradient id="sg3" x1="0" y1="0" x2="0" y2="1"><stop offset="0.00" stop-color="#0c91f5"/><stop offset="0.04" stop-color="#0b92f6"/><stop offset="0.08" stop-color="#0b93f7"/><stop offset="0.12" stop-color="#0b93f7"/><stop offset="0.16" stop-color="#0b94f8"/><stop offset="0.20" stop-color="#0a95f9"/><stop offset="0.24" stop-color="#0a96fa"/><stop offset="0.28" stop-color="#0a97fa"/><stop offset="0.32" stop-color="#0a99fa"/><stop offset="0.36" stop-color="#0a9cfa"/><stop offset="0.40" stop-color="#0a9ffa"/><stop offset="0.44" stop-color="#0aa4fa"/><stop offset="0.48" stop-color="#0aabfa"/><stop offset="0.52" stop-color="#0ab7fa"/><stop offset="0.56" stop-color="#0ac9fa"/><stop offset="0.60" stop-color="#0dcfed"/><stop offset="0.64" stop-color="#15c9d1"/><stop offset="0.68" stop-color="#27e0a1"/><stop offset="0.72" stop-color="#36dd75"/><stop offset="0.76" stop-color="#7dec46"/><stop offset="0.80" stop-color="#e1fa0d"/><stop offset="0.84" stop-color="#fff500"/><stop offset="0.88" stop-color="#ffdf00"/><stop offset="0.92" stop-color="#ffd000"/><stop offset="0.96" stop-color="#ffc300"/><stop offset="1.00" stop-color="#ffbc00"/></linearGradient><linearGradient id="sg4" x1="0" y1="0" x2="0" y2="1"><stop offset="0.00" stop-color="#1478dc"/><stop offset="0.04" stop-color="#1479dd"/><stop offset="0.08" stop-color="#1479dd"/><stop offset="0.12" stop-color="#137ade"/><stop offset="0.16" stop-color="#137bdf"/><stop offset="0.20" stop-color="#137ce0"/><stop offset="0.24" stop-color="#137ce0"/><stop offset="0.28" stop-color="#127de1"/><stop offset="0.32" stop-color="#127ee2"/><stop offset="0.36" stop-color="#127fe3"/><stop offset="0.40" stop-color="#1180e4"/><stop offset="0.44" stop-color="#1181e5"/><stop offset="0.48" stop-color="#1182e6"/><stop offset="0.52" stop-color="#1084e8"/><stop offset="0.56" stop-color="#0f87eb"/><stop offset="0.60" stop-color="#0e8bef"/><stop offset="0.64" stop-color="#0b92f6"/><stop offset="0.68" stop-color="#0aa4fa"/><stop offset="0.72" stop-color="#0ac4fa"/><stop offset="0.76" stop-color="#0fcde6"/><stop offset="0.80" stop-color="#1cd2bf"/><stop offset="0.84" stop-color="#2bdf92"/><stop offset="0.88" stop-color="#3ade72"/><stop offset="0.92" stop-color="#56e55d"/><stop offset="0.96" stop-color="#86ed40"/><stop offset="1.00" stop-color="#abf42b"/></linearGradient><linearGradient id="sg5" x1="0" y1="0" x2="0" y2="1"><stop offset="0.00" stop-color="#0e8aee"/><stop offset="0.04" stop-color="#0e8bef"/><stop offset="0.08" stop-color="#0e8bef"/><stop offset="0.12" stop-color="#0d8cf0"/><stop offset="0.16" stop-color="#0d8df1"/><stop offset="0.20" stop-color="#0d8ef2"/><stop offset="0.24" stop-color="#0d8ef2"/><stop offset="0.28" stop-color="#0c8ff3"/><stop offset="0.32" stop-color="#0c90f4"/><stop offset="0.36" stop-color="#0c91f5"/><stop offset="0.40" stop-color="#0b93f7"/><stop offset="0.44" stop-color="#0a95f9"/><stop offset="0.48" stop-color="#0a98fa"/><stop offset="0.52" stop-color="#0aa1fa"/><stop offset="0.56" stop-color="#0aaefa"/><stop offset="0.60" stop-color="#0ac2fa"/><stop offset="0.64" stop-color="#0dcff0"/><stop offset="0.68" stop-color="#14c8d2"/><stop offset="0.72" stop-color="#28e1a1"/><stop offset="0.76" stop-color="#36dd75"/><stop offset="0.80" stop-color="#6fe94e"/><stop offset="0.84" stop-color="#d5fa12"/><stop offset="0.88" stop-color="#f3fa05"/><stop offset="0.92" stop-color="#fff300"/><stop offset="0.96" stop-color="#ffe800"/><stop offset="1.00" stop-color="#ffe100"/></linearGradient><linearGradient id="sg6" x1="0" y1="0" x2="0" y2="1"><stop offset="0.00" stop-color="#0f86ea"/><stop offset="0.04" stop-color="#0f87eb"/><stop offset="0.08" stop-color="#0f88ec"/><stop offset="0.12" stop-color="#0e89ed"/><stop offset="0.16" stop-color="#0e89ed"/><stop offset="0.20" stop-color="#0e8aee"/><stop offset="0.24" stop-color="#0e8bef"/><stop offset="0.28" stop-color="#0d8cf0"/><stop offset="0.32" stop-color="#0d8df1"/><stop offset="0.36" stop-color="#0d8ef2"/><stop offset="0.40" stop-color="#0c8ff3"/><stop offset="0.44" stop-color="#0c90f4"/><stop offset="0.48" stop-color="#0b93f7"/><stop offset="0.52" stop-color="#0a97fa"/><stop offset="0.56" stop-color="#0aa2fa"/><stop offset="0.60" stop-color="#0ab3fa"/><stop offset="0.64" stop-color="#0acefa"/><stop offset="0.68" stop-color="#10cce3"/><stop offset="0.72" stop-color="#1dd4bb"/><stop offset="0.76" stop-color="#2dde8b"/><stop offset="0.80" stop-color="#4ae266"/><stop offset="0.84" stop-color="#9af135"/><stop offset="0.88" stop-color="#ddfa0f"/><stop offset="0.92" stop-color="#f4fa05"/><stop offset="0.96" stop-color="#fff800"/><stop offset="1.00" stop-color="#fff000"/></linearGradient><linearGradient id="sg7" x1="0" y1="0" x2="0" y2="1"><stop offset="0.00" stop-color="#0e8aee"/><stop offset="0.04" stop-color="#0e8bef"/><stop offset="0.08" stop-color="#0e8bef"/><stop offset="0.12" stop-color="#0d8cf0"/><stop offset="0.16" stop-color="#0d8df1"/><stop offset="0.20" stop-color="#0d8ef2"/><stop offset="0.24" stop-color="#0d8ef2"/><stop offset="0.28" stop-color="#0c8ff3"/><stop offset="0.32" stop-color="#0c90f4"/><stop offset="0.36" stop-color="#0c91f5"/><stop offset="0.40" stop-color="#0b93f7"/><stop offset="0.44" stop-color="#0a95f9"/><stop offset="0.48" stop-color="#0a98fa"/><stop offset="0.52" stop-color="#0aa1fa"/><stop offset="0.56" stop-color="#0aaefa"/><stop offset="0.60" stop-color="#0ac2fa"/><stop offset="0.64" stop-color="#0dcff0"/><stop offset="0.68" stop-color="#14c8d2"/><stop offset="0.72" stop-color="#28e1a1"/><stop offset="0.76" stop-color="#36dd75"/><stop offset="0.80" stop-color="#6fe94e"/><stop offset="0.84" stop-color="#d5fa12"/><stop offset="0.88" stop-color="#f3fa05"/><stop offset="0.92" stop-color="#fff300"/><stop offset="0.96" stop-color="#ffe800"/><stop offset="1.00" stop-color="#ffe100"/></linearGradient><linearGradient id="sg8" x1="0" y1="0" x2="0" y2="1"><stop offset="0.00" stop-color="#0d8ef2"/><stop offset="0.04" stop-color="#0d8ef2"/><stop offset="0.08" stop-color="#0c8ff3"/><stop offset="0.12" stop-color="#0c90f4"/><stop offset="0.16" stop-color="#0c91f5"/><stop offset="0.20" stop-color="#0c91f5"/><stop offset="0.24" stop-color="#0b92f6"/><stop offset="0.28" stop-color="#0b93f7"/><stop offset="0.32" stop-color="#0b94f8"/><stop offset="0.36" stop-color="#0a95f9"/><stop offset="0.40" stop-color="#0a97fa"/><stop offset="0.44" stop-color="#0a9bfa"/><stop offset="0.48" stop-color="#0aa2fa"/><stop offset="0.52" stop-color="#0aacfa"/><stop offset="0.56" stop-color="#0abbfa"/><stop offset="0.60" stop-color="#0ad2f9"/><stop offset="0.64" stop-color="#10cce1"/><stop offset="0.68" stop-color="#1dd4ba"/><stop offset="0.72" stop-color="#2dde8b"/><stop offset="0.76" stop-color="#4de363"/><stop offset="0.80" stop-color="#b4f525"/><stop offset="0.84" stop-color="#edfa08"/><stop offset="0.88" stop-color="#fff100"/><stop offset="0.92" stop-color="#ffe100"/><stop offset="0.96" stop-color="#ffd800"/><stop offset="1.00" stop-color="#ffd200"/></linearGradient><linearGradient id="sg9" x1="0" y1="0" x2="0" y2="1"><stop offset="0.00" stop-color="#0ab8fa"/><stop offset="0.04" stop-color="#0ab9fa"/><stop offset="0.08" stop-color="#0abbfa"/><stop offset="0.12" stop-color="#0abcfa"/><stop offset="0.16" stop-color="#0abefa"/><stop offset="0.20" stop-color="#0ac0fa"/><stop offset="0.24" stop-color="#0ac2fa"/><stop offset="0.28" stop-color="#0ac4fa"/><stop offset="0.32" stop-color="#0ac8fa"/><stop offset="0.36" stop-color="#0acdfa"/><stop offset="0.40" stop-color="#0bd1f8"/><stop offset="0.44" stop-color="#0dcff0"/><stop offset="0.48" stop-color="#10cce2"/><stop offset="0.52" stop-color="#16cbcd"/><stop offset="0.56" stop-color="#26dea6"/><stop offset="0.60" stop-color="#32dc7a"/><stop offset="0.64" stop-color="#79eb48"/><stop offset="0.68" stop-color="#effa07"/><stop offset="0.72" stop-color="#ffd700"/><stop offset="0.76" stop-color="#ff9e00"/><stop offset="0.80" stop-color="#ff7000"/><stop offset="0.84" stop-color="#ff5200"/><stop offset="0.88" stop-color="#f93d00"/><stop offset="0.92" stop-color="#f53000"/><stop offset="0.96" stop-color="#f32900"/><stop offset="1.00" stop-color="#f12500"/></linearGradient><linearGradient id="sg10" x1="0" y1="0" x2="0" y2="1"><stop offset="0.00" stop-color="#0f86ea"/><stop offset="0.04" stop-color="#0f87eb"/><stop offset="0.08" stop-color="#0f88ec"/><stop offset="0.12" stop-color="#0e89ed"/><stop offset="0.16" stop-color="#0e89ed"/><stop offset="0.20" stop-color="#0e8aee"/><stop offset="0.24" stop-color="#0e8bef"/><stop offset="0.28" stop-color="#0d8cf0"/><stop offset="0.32" stop-color="#0d8df1"/><stop offset="0.36" stop-color="#0d8ef2"/><stop offset="0.40" stop-color="#0c8ff3"/><stop offset="0.44" stop-color="#0c90f4"/><stop offset="0.48" stop-color="#0b93f7"/><stop offset="0.52" stop-color="#0a97fa"/><stop offset="0.56" stop-color="#0aa2fa"/><stop offset="0.60" stop-color="#0ab3fa"/><stop offset="0.64" stop-color="#0acefa"/><stop offset="0.68" stop-color="#10cce3"/><stop offset="0.72" stop-color="#1dd4bb"/><stop offset="0.76" stop-color="#2dde8b"/><stop offset="0.80" stop-color="#4ae266"/><stop offset="0.84" stop-color="#9af135"/><stop offset="0.88" stop-color="#ddfa0f"/><stop offset="0.92" stop-color="#f4fa05"/><stop offset="0.96" stop-color="#fff800"/><stop offset="1.00" stop-color="#fff000"/></linearGradient><linearGradient id="sg11" x1="0" y1="0" x2="0" y2="1"><stop offset="0.00" stop-color="#0c91f5"/><stop offset="0.04" stop-color="#0b92f6"/><stop offset="0.08" stop-color="#0b93f7"/><stop offset="0.12" stop-color="#0b93f7"/><stop offset="0.16" stop-color="#0b94f8"/><stop offset="0.20" stop-color="#0a95f9"/><stop offset="0.24" stop-color="#0a96fa"/><stop offset="0.28" stop-color="#0a97fa"/><stop offset="0.32" stop-color="#0a99fa"/><stop offset="0.36" stop-color="#0a9cfa"/><stop offset="0.40" stop-color="#0a9ffa"/><stop offset="0.44" stop-color="#0aa4fa"/><stop offset="0.48" stop-color="#0aabfa"/><stop offset="0.52" stop-color="#0ab7fa"/><stop offset="0.56" stop-color="#0ac9fa"/><stop offset="0.60" stop-color="#0dcfed"/><stop offset="0.64" stop-color="#15c9d1"/><stop offset="0.68" stop-color="#27e0a1"/><stop offset="0.72" stop-color="#36dd75"/><stop offset="0.76" stop-color="#7dec46"/><stop offset="0.80" stop-color="#e1fa0d"/><stop offset="0.84" stop-color="#fff500"/><stop offset="0.88" stop-color="#ffdf00"/><stop offset="0.92" stop-color="#ffd000"/><stop offset="0.96" stop-color="#ffc300"/><stop offset="1.00" stop-color="#ffbc00"/></linearGradient><linearGradient id="sg12" x1="0" y1="0" x2="0" y2="1"><stop offset="0.00" stop-color="#0ac6fa"/><stop offset="0.04" stop-color="#0ac8fa"/><stop offset="0.08" stop-color="#0ac9fa"/><stop offset="0.12" stop-color="#0acbfa"/><stop offset="0.16" stop-color="#0accfa"/><stop offset="0.20" stop-color="#0acefa"/><stop offset="0.24" stop-color="#0ad1fa"/><stop offset="0.28" stop-color="#0ad2f9"/><stop offset="0.32" stop-color="#0bd1f6"/><stop offset="0.36" stop-color="#0cd0f1"/><stop offset="0.40" stop-color="#0eceea"/><stop offset="0.44" stop-color="#11cbdf"/><stop offset="0.48" stop-color="#16cacd"/><stop offset="0.52" stop-color="#23dbac"/><stop offset="0.56" stop-color="#2fdd84"/><stop offset="0.60" stop-color="#57e55c"/><stop offset="0.64" stop-color="#dffa0e"/><stop offset="0.68" stop-color="#ffe300"/><stop offset="0.72" stop-color="#ffab00"/><stop offset="0.76" stop-color="#ff7800"/><stop offset="0.80" stop-color="#ff5400"/><stop offset="0.84" stop-color="#f93c00"/><stop offset="0.88" stop-color="#f42d00"/><stop offset="0.92" stop-color="#f12400"/><stop offset="0.96" stop-color="#f01f00"/><stop offset="1.00" stop-color="#ef1c00"/></linearGradient><linearGradient id="sg13" x1="0" y1="0" x2="0" y2="1"><stop offset="0.00" stop-color="#0c91f5"/><stop offset="0.04" stop-color="#0b92f6"/><stop offset="0.08" stop-color="#0b93f7"/><stop offset="0.12" stop-color="#0b93f7"/><stop offset="0.16" stop-color="#0b94f8"/><stop offset="0.20" stop-color="#0a95f9"/><stop offset="0.24" stop-color="#0a96fa"/><stop offset="0.28" stop-color="#0a97fa"/><stop offset="0.32" stop-color="#0a99fa"/><stop offset="0.36" stop-color="#0a9cfa"/><stop offset="0.40" stop-color="#0a9ffa"/><stop offset="0.44" stop-color="#0aa4fa"/><stop offset="0.48" stop-color="#0aabfa"/><stop offset="0.52" stop-color="#0ab7fa"/><stop offset="0.56" stop-color="#0ac9fa"/><stop offset="0.60" stop-color="#0dcfed"/><stop offset="0.64" stop-color="#15c9d1"/><stop offset="0.68" stop-color="#27e0a1"/><stop offset="0.72" stop-color="#36dd75"/><stop offset="0.76" stop-color="#7dec46"/><stop offset="0.80" stop-color="#e1fa0d"/><stop offset="0.84" stop-color="#fff500"/><stop offset="0.88" stop-color="#ffdf00"/><stop offset="0.92" stop-color="#ffd000"/><stop offset="0.96" stop-color="#ffc300"/><stop offset="1.00" stop-color="#ffbc00"/></linearGradient><linearGradient id="sg14" x1="0" y1="0" x2="0" y2="1"><stop offset="0.00" stop-color="#1083e7"/><stop offset="0.04" stop-color="#1084e8"/><stop offset="0.08" stop-color="#1084e8"/><stop offset="0.12" stop-color="#1085e9"/><stop offset="0.16" stop-color="#0f86ea"/><stop offset="0.20" stop-color="#0f86ea"/><stop offset="0.24" stop-color="#0f87eb"/><stop offset="0.28" stop-color="#0f88ec"/><stop offset="0.32" stop-color="#0e89ed"/><stop offset="0.36" stop-color="#0e8aee"/><stop offset="0.40" stop-color="#0e8bef"/><stop offset="0.44" stop-color="#0d8cf0"/><stop offset="0.48" stop-color="#0d8ef2"/><stop offset="0.52" stop-color="#0b92f6"/><stop offset="0.56" stop-color="#0a96fa"/><stop offset="0.60" stop-color="#0aa5fa"/><stop offset="0.64" stop-color="#0abcfa"/><stop offset="0.68" stop-color="#0cd0f2"/><stop offset="0.72" stop-color="#14c8d3"/><stop offset="0.76" stop-color="#27e0a2"/><stop offset="0.80" stop-color="#33dc77"/><stop offset="0.84" stop-color="#59e65a"/><stop offset="0.88" stop-color="#b5f525"/><stop offset="0.92" stop-color="#dffa0e"/><stop offset="0.96" stop-color="#effa07"/><stop offset="1.00" stop-color="#f9fa03"/></linearGradient><linearGradient id="sg15" x1="0" y1="0" x2="0" y2="1"><stop offset="0.00" stop-color="#0a9bfa"/><stop offset="0.04" stop-color="#0a9cfa"/><stop offset="0.08" stop-color="#0a9efa"/><stop offset="0.12" stop-color="#0a9ffa"/><stop offset="0.16" stop-color="#0aa1fa"/><stop offset="0.20" stop-color="#0aa2fa"/><stop offset="0.24" stop-color="#0aa4fa"/><stop offset="0.28" stop-color="#0aa6fa"/><stop offset="0.32" stop-color="#0aa9fa"/><stop offset="0.36" stop-color="#0aacfa"/><stop offset="0.40" stop-color="#0ab0fa"/><stop offset="0.44" stop-color="#0ab6fa"/><stop offset="0.48" stop-color="#0ac1fa"/><stop offset="0.52" stop-color="#0ad1fa"/><stop offset="0.56" stop-color="#0eceea"/><stop offset="0.60" stop-color="#15c9d0"/><stop offset="0.64" stop-color="#27e0a3"/><stop offset="0.68" stop-color="#35dd75"/><stop offset="0.72" stop-color="#82ed42"/><stop offset="0.76" stop-color="#e9fa0a"/><stop offset="0.80" stop-color="#ffe800"/><stop offset="0.84" stop-color="#ffca00"/><stop offset="0.88" stop-color="#ffaf00"/><stop offset="0.92" stop-color="#ff9f00"/><stop offset="0.96" stop-color="#ff9500"/><stop offset="1.00" stop-color="#ff8f00"/></linearGradient><linearGradient id="sg16" x1="0" y1="0" x2="0" y2="1"><stop offset="0.00" stop-color="#0aa2fa"/><stop offset="0.04" stop-color="#0aa3fa"/><stop offset="0.08" stop-color="#0aa5fa"/><stop offset="0.12" stop-color="#0aa6fa"/><stop offset="0.16" stop-color="#0aa8fa"/><stop offset="0.20" stop-color="#0aaafa"/><stop offset="0.24" stop-color="#0aacfa"/><stop offset="0.28" stop-color="#0aaefa"/><stop offset="0.32" stop-color="#0ab0fa"/><stop offset="0.36" stop-color="#0ab4fa"/><stop offset="0.40" stop-color="#0ab9fa"/><stop offset="0.44" stop-color="#0ac0fa"/><stop offset="0.48" stop-color="#0accfa"/><stop offset="0.52" stop-color="#0cd0f1"/><stop offset="0.56" stop-color="#11cbdd"/><stop offset="0.60" stop-color="#1dd3bb"/><stop offset="0.64" stop-color="#2ddf8d"/><stop offset="0.68" stop-color="#4ee363"/><stop offset="0.72" stop-color="#cef916"/><stop offset="0.76" stop-color="#fff500"/><stop offset="0.80" stop-color="#ffd200"/><stop offset="0.84" stop-color="#ffad00"/><stop offset="0.88" stop-color="#ff9600"/><stop offset="0.92" stop-color="#ff8500"/><stop offset="0.96" stop-color="#ff7b00"/><stop offset="1.00" stop-color="#ff7500"/></linearGradient><linearGradient id="sg17" x1="0" y1="0" x2="0" y2="1"><stop offset="0.00" stop-color="#115fd6"/><stop offset="0.04" stop-color="#1161d6"/><stop offset="0.08" stop-color="#1163d7"/><stop offset="0.12" stop-color="#1265d7"/><stop offset="0.16" stop-color="#1267d8"/><stop offset="0.20" stop-color="#1269d8"/><stop offset="0.24" stop-color="#126bd9"/><stop offset="0.28" stop-color="#136dd9"/><stop offset="0.32" stop-color="#136fda"/><stop offset="0.36" stop-color="#1371da"/><stop offset="0.40" stop-color="#1373db"/><stop offset="0.44" stop-color="#1476db"/><stop offset="0.48" stop-color="#1478dc"/><stop offset="0.52" stop-color="#137ade"/><stop offset="0.56" stop-color="#137ce0"/><stop offset="0.60" stop-color="#127fe3"/><stop offset="0.64" stop-color="#1083e7"/><stop offset="0.68" stop-color="#0e8aee"/><stop offset="0.72" stop-color="#0b94f8"/><stop offset="0.76" stop-color="#0ab2fa"/><stop offset="0.80" stop-color="#0cd0f4"/><stop offset="0.84" stop-color="#14c8d2"/><stop offset="0.88" stop-color="#25dda7"/><stop offset="0.92" stop-color="#2ede87"/><stop offset="0.96" stop-color="#3ade72"/><stop offset="1.00" stop-color="#4ae266"/></linearGradient><linearGradient id="sg18" x1="0" y1="0" x2="0" y2="1"><stop offset="0.00" stop-color="#0ab8fa"/><stop offset="0.04" stop-color="#0ab9fa"/><stop offset="0.08" stop-color="#0abbfa"/><stop offset="0.12" stop-color="#0abcfa"/><stop offset="0.16" stop-color="#0abefa"/><stop offset="0.20" stop-color="#0ac0fa"/><stop offset="0.24" stop-color="#0ac2fa"/><stop offset="0.28" stop-color="#0ac4fa"/><stop offset="0.32" stop-color="#0ac8fa"/><stop offset="0.36" stop-color="#0acdfa"/><stop offset="0.40" stop-color="#0bd1f8"/><stop offset="0.44" stop-color="#0dcff0"/><stop offset="0.48" stop-color="#10cce2"/><stop offset="0.52" stop-color="#16cbcd"/><stop offset="0.56" stop-color="#26dea6"/><stop offset="0.60" stop-color="#32dc7a"/><stop offset="0.64" stop-color="#79eb48"/><stop offset="0.68" stop-color="#effa07"/><stop offset="0.72" stop-color="#ffd700"/><stop offset="0.76" stop-color="#ff9e00"/><stop offset="0.80" stop-color="#ff7000"/><stop offset="0.84" stop-color="#ff5200"/><stop offset="0.88" stop-color="#f93d00"/><stop offset="0.92" stop-color="#f53000"/><stop offset="0.96" stop-color="#f32900"/><stop offset="1.00" stop-color="#f12500"/></linearGradient><linearGradient id="sg19" x1="0" y1="0" x2="0" y2="1"><stop offset="0.00" stop-color="#1181e5"/><stop offset="0.04" stop-color="#1181e5"/><stop offset="0.08" stop-color="#1181e5"/><stop offset="0.12" stop-color="#1181e5"/><stop offset="0.16" stop-color="#1181e5"/><stop offset="0.20" stop-color="#1181e5"/><stop offset="0.24" stop-color="#1181e5"/><stop offset="0.28" stop-color="#1181e5"/><stop offset="0.32" stop-color="#1181e5"/><stop offset="0.36" stop-color="#1181e5"/><stop offset="0.40" stop-color="#1181e5"/><stop offset="0.44" stop-color="#1181e5"/><stop offset="0.48" stop-color="#1181e5"/><stop offset="0.52" stop-color="#1181e5"/><stop offset="0.56" stop-color="#1182e6"/><stop offset="0.60" stop-color="#1182e6"/><stop offset="0.64" stop-color="#1083e7"/><stop offset="0.68" stop-color="#1084e8"/><stop offset="0.72" stop-color="#0f86ea"/><stop offset="0.76" stop-color="#0e89ed"/><stop offset="0.80" stop-color="#0d8df1"/><stop offset="0.84" stop-color="#0b93f7"/><stop offset="0.88" stop-color="#0a9cfa"/><stop offset="0.92" stop-color="#0aa8fa"/><stop offset="0.96" stop-color="#0ab3fa"/><stop offset="1.00" stop-color="#0abafa"/></linearGradient><linearGradient id="sg20" x1="0" y1="0" x2="0" y2="1"><stop offset="0.00" stop-color="#0c91f5"/><stop offset="0.04" stop-color="#0b92f6"/><stop offset="0.08" stop-color="#0b93f7"/><stop offset="0.12" stop-color="#0b93f7"/><stop offset="0.16" stop-color="#0b94f8"/><stop offset="0.20" stop-color="#0a95f9"/><stop offset="0.24" stop-color="#0a96fa"/><stop offset="0.28" stop-color="#0a97fa"/><stop offset="0.32" stop-color="#0a99fa"/><stop offset="0.36" stop-color="#0a9cfa"/><stop offset="0.40" stop-color="#0a9ffa"/><stop offset="0.44" stop-color="#0aa4fa"/><stop offset="0.48" stop-color="#0aabfa"/><stop offset="0.52" stop-color="#0ab7fa"/><stop offset="0.56" stop-color="#0ac9fa"/><stop offset="0.60" stop-color="#0dcfed"/><stop offset="0.64" stop-color="#15c9d1"/><stop offset="0.68" stop-color="#27e0a1"/><stop offset="0.72" stop-color="#36dd75"/><stop offset="0.76" stop-color="#7dec46"/><stop offset="0.80" stop-color="#e1fa0d"/><stop offset="0.84" stop-color="#fff500"/><stop offset="0.88" stop-color="#ffdf00"/><stop offset="0.92" stop-color="#ffd000"/><stop offset="0.96" stop-color="#ffc300"/><stop offset="1.00" stop-color="#ffbc00"/></linearGradient><linearGradient id="sg21" x1="0" y1="0" x2="0" y2="1"><stop offset="0.00" stop-color="#0e8aee"/><stop offset="0.04" stop-color="#0e8bef"/><stop offset="0.08" stop-color="#0e8bef"/><stop offset="0.12" stop-color="#0d8cf0"/><stop offset="0.16" stop-color="#0d8df1"/><stop offset="0.20" stop-color="#0d8ef2"/><stop offset="0.24" stop-color="#0d8ef2"/><stop offset="0.28" stop-color="#0c8ff3"/><stop offset="0.32" stop-color="#0c90f4"/><stop offset="0.36" stop-color="#0c91f5"/><stop offset="0.40" stop-color="#0b93f7"/><stop offset="0.44" stop-color="#0a95f9"/><stop offset="0.48" stop-color="#0a98fa"/><stop offset="0.52" stop-color="#0aa1fa"/><stop offset="0.56" stop-color="#0aaefa"/><stop offset="0.60" stop-color="#0ac2fa"/><stop offset="0.64" stop-color="#0dcff0"/><stop offset="0.68" stop-color="#14c8d2"/><stop offset="0.72" stop-color="#28e1a1"/><stop offset="0.76" stop-color="#36dd75"/><stop offset="0.80" stop-color="#6fe94e"/><stop offset="0.84" stop-color="#d5fa12"/><stop offset="0.88" stop-color="#f3fa05"/><stop offset="0.92" stop-color="#fff300"/><stop offset="0.96" stop-color="#ffe800"/><stop offset="1.00" stop-color="#ffe100"/></linearGradient><linearGradient id="sg22" x1="0" y1="0" x2="0" y2="1"><stop offset="0.00" stop-color="#0aa9fa"/><stop offset="0.04" stop-color="#0aabfa"/><stop offset="0.08" stop-color="#0aacfa"/><stop offset="0.12" stop-color="#0aaefa"/><stop offset="0.16" stop-color="#0aaffa"/><stop offset="0.20" stop-color="#0ab1fa"/><stop offset="0.24" stop-color="#0ab3fa"/><stop offset="0.28" stop-color="#0ab5fa"/><stop offset="0.32" stop-color="#0ab8fa"/><stop offset="0.36" stop-color="#0abcfa"/><stop offset="0.40" stop-color="#0ac2fa"/><stop offset="0.44" stop-color="#0acbfa"/><stop offset="0.48" stop-color="#0bd1f5"/><stop offset="0.52" stop-color="#0fcde6"/><stop offset="0.56" stop-color="#15cacf"/><stop offset="0.60" stop-color="#26dfa4"/><stop offset="0.64" stop-color="#33dc77"/><stop offset="0.68" stop-color="#81ec43"/><stop offset="0.72" stop-color="#eefa08"/><stop offset="0.76" stop-color="#ffde00"/><stop offset="0.80" stop-color="#ffb200"/><stop offset="0.84" stop-color="#ff9000"/><stop offset="0.88" stop-color="#ff7800"/><stop offset="0.92" stop-color="#ff6900"/><stop offset="0.96" stop-color="#ff6100"/><stop offset="1.00" stop-color="#ff5c00"/></linearGradient></defs><polygon points="125.65,490 127.35,490 127.47,526.5 127.83,556.3 125.17,556.3 125.53,526.5" fill="url(#sg0)" opacity="0.92"/><rect x="139.4" y="524.3" width="7" height="32.0" fill="url(#halo)"/><polygon points="142.05,409.5 143.75,409.5 143.92,490.2 144.34,556.3 141.46,556.3 141.88,490.2" fill="url(#sg1)" opacity="0.92"/><polygon points="147.65,409.5 149.35,409.5 149.46,490.2 149.82,556.3 147.18,556.3 147.54,490.2" fill="url(#sg2)" opacity="0.92"/><rect x="149.3" y="526.3" width="7" height="30.0" fill="url(#halo)"/><polygon points="151.95,409.5 153.65,409.5 153.81,490.2 154.22,556.3 151.38,556.3 151.79,490.2" fill="url(#sg3)" opacity="0.92"/><rect x="152.1" y="381" width="1.5" height="10" fill="#5080e0" opacity="0.6"/><polygon points="157.85,409.5 159.55,409.5 159.67,490.2 160.05,556.3 157.35,556.3 157.72,490.2" fill="url(#sg4)" opacity="0.92"/><rect x="157.9" y="381" width="1.5" height="10" fill="#5080e0" opacity="0.6"/><rect x="160.8" y="528.3" width="7" height="28.0" fill="url(#halo)"/><polygon points="163.45,409.5 165.15,409.5 165.30,490.2 165.70,556.3 162.90,556.3 163.30,490.2" fill="url(#sg5)" opacity="0.92"/><rect x="163.6" y="381" width="1.5" height="10" fill="#5080e0" opacity="0.6"/><rect x="167.4" y="529.3" width="7" height="27.0" fill="url(#halo)"/><polygon points="170.05,409.5 171.75,409.5 171.90,490.2 172.29,556.3 169.51,556.3 169.91,490.2" fill="url(#sg6)" opacity="0.92"/><rect x="174.6" y="528.3" width="7" height="28.0" fill="url(#halo)"/><polygon points="177.25,409.5 178.95,409.5 179.10,490.2 179.50,556.3 176.70,556.3 177.10,490.2" fill="url(#sg7)" opacity="0.92"/><rect x="184.5" y="527.3" width="7" height="29.0" fill="url(#halo)"/><polygon points="187.15,409.5 188.85,409.5 189.00,490.2 189.41,556.3 186.59,556.3 187.00,490.2" fill="url(#sg8)" opacity="0.92"/><rect x="187.2" y="381" width="1.5" height="10" fill="#5080e0" opacity="0.6"/><rect x="213.5" y="520.3" width="7" height="36.0" fill="url(#halo)"/><polygon points="216.15,409.5 217.85,409.5 218.04,490.2 218.48,556.3 215.52,556.3 215.96,490.2" fill="url(#sg9)" opacity="0.92"/><rect x="216.2" y="381" width="1.5" height="14" fill="#5080e0" opacity="0.6"/><rect x="276.5" y="529.3" width="7" height="27.0" fill="url(#halo)"/><polygon points="279.15,409.5 280.85,409.5 281.00,490.2 281.39,556.3 278.61,556.3 279.00,490.2" fill="url(#sg10)" opacity="0.92"/><rect x="309.5" y="526.3" width="7" height="30.0" fill="url(#halo)"/><polygon points="312.15,409.5 313.85,409.5 314.01,490.2 314.42,556.3 311.58,556.3 311.99,490.2" fill="url(#sg11)" opacity="0.92"/><rect x="317.0" y="518.3" width="7" height="38.0" fill="url(#halo)"/><polygon points="319.65,409.5 321.35,409.5 321.55,490.2 322.00,556.3 319.00,556.3 319.45,490.2" fill="url(#sg12)" opacity="0.92"/><rect x="319.8" y="388" width="1.5" height="10" fill="#5080e0" opacity="0.6"/><rect x="360.5" y="526.3" width="7" height="30.0" fill="url(#halo)"/><polygon points="363.15,409.6 364.85,409.6 365.01,490.3 365.42,556.3 362.58,556.3 362.99,490.3" fill="url(#sg13)" opacity="0.92"/><rect x="372.0" y="530.3" width="7" height="26.0" fill="url(#halo)"/><polygon points="374.65,409.6 376.35,409.6 376.49,490.3 376.88,556.3 374.12,556.3 374.51,490.3" fill="url(#sg14)" opacity="0.92"/><rect x="423.0" y="524.3" width="7" height="32.0" fill="url(#halo)"/><polygon points="425.65,409.6 427.35,409.6 427.52,490.3 427.94,556.3 425.06,556.3 425.48,490.3" fill="url(#sg15)" opacity="0.92"/><rect x="425.8" y="381" width="1.5" height="10" fill="#5080e0" opacity="0.6"/><rect x="473.3" y="523.3" width="7" height="33.0" fill="url(#halo)"/><polygon points="475.95,409.6 477.65,409.6 477.82,490.3 478.25,556.3 475.35,556.3 475.78,490.3" fill="url(#sg16)" opacity="0.92"/><polygon points="558.55,412.8 560.25,412.8 560.36,491.7 560.72,556.3 558.08,556.3 558.44,491.7" fill="url(#sg17)" opacity="0.92"/><rect x="595.0" y="520.3" width="7" height="36.0" fill="url(#halo)"/><polygon points="597.65,408.3 599.35,408.3 599.54,489.7 599.98,556.3 597.02,556.3 597.46,489.7" fill="url(#sg18)" opacity="0.92"/><polygon points="654.20,505.5 654.80,505.5 655.10,533.4 655.30,556.3 653.70,556.3 653.90,533.4" fill="url(#sg19)" opacity="0.92"/><rect x="769.8" y="526.3" width="7" height="30.0" fill="url(#halo)"/><polygon points="772.45,408 774.15,408 774.31,489.6 774.72,556.3 771.88,556.3 772.29,489.6" fill="url(#sg20)" opacity="0.92"/><rect x="800.9" y="528.3" width="7" height="28.0" fill="url(#halo)"/><polygon points="803.55,410 805.25,410 805.40,490.5 805.80,556.3 803.00,556.3 803.40,490.5" fill="url(#sg21)" opacity="0.92"/><rect x="829.7" y="522.3" width="7" height="34.0" fill="url(#halo)"/><polygon points="832.35,408 834.05,408 834.23,489.6 834.66,556.3 831.74,556.3 832.17,489.6" fill="url(#sg22)" opacity="0.92"/><rect x="126" y="424" width="1" height="67" fill="#1e50c8" opacity="0.55"/><rect x="113" y="552.7" width="1" height="3.6" fill="#0a3cb4"/><rect x="113" y="554.4" width="1" height="1.9" fill="#3cb4e6"/><rect x="113" y="553.8" width="1" height="1.3" fill="#50c8dc"/><rect x="114" y="552.7" width="1" height="3.6" fill="#0a3cb4"/><rect x="114" y="554.9" width="1" height="1.4" fill="#3cb4e6"/><rect x="114" y="553.4" width="1" height="1.3" fill="#1e46b4"/><rect x="115" y="552.6" width="1" height="3.7" fill="#0a3cb4"/><rect x="115" y="554.9" width="1" height="1.4" fill="#3cb4e6"/><rect x="116" y="552.4" width="1" height="3.9" fill="#0a3cb4"/><rect x="116" y="554.4" width="1" height="1.9" fill="#3cb4e6"/><rect x="116" y="553.1" width="1" height="1.3" fill="#1e46b4"/><rect x="117" y="552.8" width="1" height="3.5" fill="#0a3cb4"/><rect x="117" y="554.6" width="1" height="1.7" fill="#50c8dc"/><rect x="118" y="552.1" width="1" height="4.2" fill="#0a3cb4"/><rect x="118" y="555.3" width="1" height="1.0" fill="#28a0e6"/><rect x="119" y="552.7" width="1" height="3.6" fill="#0a3cb4"/><rect x="119" y="554.5" width="1" height="1.8" fill="#3cb4e6"/><rect x="120" y="553.7" width="1" height="2.6" fill="#0a3cb4"/><rect x="120" y="554.7" width="1" height="1.6" fill="#1e8cdc"/><rect x="121" y="552.3" width="1" height="4.0" fill="#0a3cb4"/><rect x="121" y="554.1" width="1" height="2.2" fill="#50c8dc"/><rect x="121" y="552.1" width="1" height="1.3" fill="#0a50c8"/><rect x="122" y="553.0" width="1" height="3.3" fill="#0a3cb4"/><rect x="122" y="554.9" width="1" height="1.4" fill="#50c8dc"/><rect x="123" y="552.1" width="1" height="4.2" fill="#0a3cb4"/><rect x="123" y="554.1" width="1" height="2.2" fill="#28a0e6"/><rect x="123" y="553.7" width="1" height="1.3" fill="#0a50c8"/><rect x="124" y="552.4" width="1" height="3.9" fill="#0a3cb4"/><rect x="124" y="553.9" width="1" height="2.4" fill="#3cb4e6"/><rect x="125" y="552.3" width="1" height="4.0" fill="#0a3cb4"/><rect x="125" y="553.8" width="1" height="2.5" fill="#3cb4e6"/><rect x="126" y="552.8" width="1" height="3.5" fill="#0a3cb4"/><rect x="126" y="553.8" width="1" height="2.5" fill="#28a0e6"/><rect x="126" y="551.8" width="1" height="1.3" fill="#0a50c8"/><rect x="127" y="553.6" width="1" height="2.7" fill="#0a3cb4"/><rect x="127" y="554.5" width="1" height="1.8" fill="#50c8dc"/><rect x="128" y="553.6" width="1" height="2.7" fill="#0a3cb4"/><rect x="128" y="555.2" width="1" height="1.1" fill="#3cb4e6"/><rect x="128" y="555.3" width="1" height="1.3" fill="#0a50c8"/><rect x="129" y="553.0" width="1" height="3.3" fill="#0a3cb4"/><rect x="129" y="555.2" width="1" height="1.1" fill="#3cb4e6"/><rect x="129" y="554.3" width="1" height="1.3" fill="#1e46b4"/><rect x="130" y="553.4" width="1" height="2.9" fill="#0a3cb4"/><rect x="130" y="555.1" width="1" height="1.2" fill="#28a0e6"/><rect x="131" y="552.7" width="1" height="3.6" fill="#0a3cb4"/><rect x="131" y="553.9" width="1" height="2.4" fill="#3cb4e6"/><rect x="132" y="553.0" width="1" height="3.3" fill="#0a3cb4"/><rect x="132" y="554.0" width="1" height="2.3" fill="#50c8dc"/><rect x="132" y="555.6" width="1" height="1.3" fill="#50c8dc"/><rect x="133" y="553.1" width="1" height="3.2" fill="#0a3cb4"/><rect x="133" y="555.0" width="1" height="1.3" fill="#3cb4e6"/><rect x="134" y="553.0" width="1" height="3.3" fill="#0a3cb4"/><rect x="134" y="554.4" width="1" height="1.9" fill="#1e8cdc"/><rect x="135" y="552.8" width="1" height="3.5" fill="#0a3cb4"/><rect x="135" y="554.4" width="1" height="1.9" fill="#3cb4e6"/><rect x="136" y="553.4" width="1" height="2.9" fill="#0a3cb4"/><rect x="136" y="554.7" width="1" height="1.6" fill="#28a0e6"/><rect x="136" y="554.6" width="1" height="1.3" fill="#28c8e6"/><rect x="137" y="552.6" width="1" height="3.7" fill="#0a3cb4"/><rect x="137" y="554.5" width="1" height="1.8" fill="#1e8cdc"/><rect x="138" y="552.7" width="1" height="3.6" fill="#0a3cb4"/><rect x="138" y="554.3" width="1" height="2.0" fill="#3cb4e6"/><rect x="138" y="554.2" width="1" height="1.3" fill="#0a50c8"/><rect x="139" y="552.3" width="1" height="4.0" fill="#0a3cb4"/><rect x="139" y="554.1" width="1" height="2.2" fill="#3cb4e6"/><rect x="140" y="552.4" width="1" height="3.9" fill="#0a3cb4"/><rect x="140" y="553.9" width="1" height="2.4" fill="#28a0e6"/><rect x="141" y="552.1" width="1" height="4.2" fill="#0a3cb4"/><rect x="141" y="554.6" width="1" height="1.7" fill="#50c8dc"/><rect x="141" y="552.3" width="1" height="1.3" fill="#1e46b4"/><rect x="142" y="552.5" width="1" height="3.8" fill="#0a3cb4"/><rect x="142" y="554.8" width="1" height="1.5" fill="#3cb4e6"/><rect x="143" y="553.4" width="1" height="2.9" fill="#0a3cb4"/><rect x="143" y="554.5" width="1" height="1.8" fill="#3cb4e6"/><rect x="143" y="554.4" width="1" height="1.3" fill="#50c8dc"/><rect x="144" y="552.8" width="1" height="3.5" fill="#0a3cb4"/><rect x="144" y="554.3" width="1" height="2.0" fill="#1e8cdc"/><rect x="144" y="553.8" width="1" height="1.3" fill="#50c8dc"/><rect x="145" y="553.5" width="1" height="2.8" fill="#0a3cb4"/><rect x="145" y="555.0" width="1" height="1.3" fill="#1e8cdc"/><rect x="146" y="552.9" width="1" height="3.4" fill="#0a3cb4"/><rect x="146" y="555.1" width="1" height="1.2" fill="#1e8cdc"/><rect x="146" y="554.5" width="1" height="1.3" fill="#28c8e6"/><rect x="147" y="552.6" width="1" height="3.7" fill="#0a3cb4"/><rect x="147" y="555.1" width="1" height="1.2" fill="#28a0e6"/><rect x="148" y="552.8" width="1" height="3.5" fill="#0a3cb4"/><rect x="148" y="555.3" width="1" height="1.0" fill="#1e8cdc"/><rect x="149" y="553.7" width="1" height="2.6" fill="#0a3cb4"/><rect x="149" y="554.0" width="1" height="2.3" fill="#1e8cdc"/><rect x="150" y="551.9" width="1" height="4.4" fill="#0a3cb4"/><rect x="150" y="554.0" width="1" height="2.3" fill="#3cb4e6"/><rect x="151" y="553.3" width="1" height="3.0" fill="#0a3cb4"/><rect x="151" y="554.1" width="1" height="2.2" fill="#28a0e6"/><rect x="151" y="555.5" width="1" height="1.3" fill="#50c8dc"/><rect x="152" y="551.9" width="1" height="4.4" fill="#0a3cb4"/><rect x="152" y="554.9" width="1" height="1.4" fill="#1e8cdc"/><rect x="152" y="551.6" width="1" height="1.3" fill="#0a50c8"/><rect x="153" y="552.8" width="1" height="3.5" fill="#0a3cb4"/><rect x="153" y="555.0" width="1" height="1.3" fill="#3cb4e6"/><rect x="154" y="552.3" width="1" height="4.0" fill="#0a3cb4"/><rect x="154" y="553.9" width="1" height="2.4" fill="#3cb4e6"/><rect x="155" y="553.3" width="1" height="3.0" fill="#0a3cb4"/><rect x="155" y="554.0" width="1" height="2.3" fill="#1e8cdc"/><rect x="156" y="553.8" width="1" height="2.5" fill="#0a3cb4"/><rect x="156" y="554.7" width="1" height="1.6" fill="#1e8cdc"/><rect x="157" y="552.0" width="1" height="4.3" fill="#0a3cb4"/><rect x="157" y="554.9" width="1" height="1.4" fill="#50c8dc"/><rect x="158" y="552.6" width="1" height="3.7" fill="#0a3cb4"/><rect x="158" y="554.6" width="1" height="1.7" fill="#1e8cdc"/><rect x="159" y="553.7" width="1" height="2.6" fill="#0a3cb4"/><rect x="159" y="555.2" width="1" height="1.1" fill="#1e8cdc"/><rect x="160" y="552.7" width="1" height="3.6" fill="#0a3cb4"/><rect x="160" y="554.9" width="1" height="1.4" fill="#3cb4e6"/><rect x="161" y="553.0" width="1" height="3.3" fill="#0a3cb4"/><rect x="161" y="554.8" width="1" height="1.5" fill="#1e8cdc"/><rect x="161" y="552.6" width="1" height="1.3" fill="#0a50c8"/><rect x="162" y="552.3" width="1" height="4.0" fill="#0a3cb4"/><rect x="162" y="554.4" width="1" height="1.9" fill="#50c8dc"/><rect x="163" y="553.7" width="1" height="2.6" fill="#0a3cb4"/><rect x="163" y="555.2" width="1" height="1.1" fill="#50c8dc"/><rect x="164" y="553.0" width="1" height="3.3" fill="#0a3cb4"/><rect x="164" y="553.9" width="1" height="2.4" fill="#28a0e6"/><rect x="165" y="552.4" width="1" height="3.9" fill="#0a3cb4"/><rect x="165" y="554.9" width="1" height="1.4" fill="#50c8dc"/><rect x="165" y="551.4" width="1" height="1.3" fill="#0a50c8"/><rect x="166" y="552.6" width="1" height="3.7" fill="#0a3cb4"/><rect x="166" y="554.9" width="1" height="1.4" fill="#1e8cdc"/><rect x="167" y="553.3" width="1" height="3.0" fill="#0a3cb4"/><rect x="167" y="555.3" width="1" height="1.0" fill="#50c8dc"/><rect x="167" y="553.3" width="1" height="1.3" fill="#1e46b4"/><rect x="168" y="553.6" width="1" height="2.7" fill="#0a3cb4"/><rect x="168" y="554.1" width="1" height="2.2" fill="#1e8cdc"/><rect x="168" y="555.3" width="1" height="1.3" fill="#14a0f0"/><rect x="169" y="553.2" width="1" height="3.1" fill="#0a3cb4"/><rect x="169" y="554.2" width="1" height="2.1" fill="#50c8dc"/><rect x="170" y="551.9" width="1" height="4.4" fill="#0a3cb4"/><rect x="170" y="554.1" width="1" height="2.2" fill="#3cb4e6"/><rect x="170" y="552.7" width="1" height="1.3" fill="#1e46b4"/><rect x="171" y="553.2" width="1" height="3.1" fill="#0a3cb4"/><rect x="171" y="554.7" width="1" height="1.6" fill="#1e8cdc"/><rect x="172" y="552.7" width="1" height="3.6" fill="#0a3cb4"/><rect x="172" y="554.9" width="1" height="1.4" fill="#3cb4e6"/><rect x="172" y="552.6" width="1" height="1.3" fill="#1e46b4"/><rect x="173" y="552.3" width="1" height="4.0" fill="#0a3cb4"/><rect x="173" y="554.0" width="1" height="2.3" fill="#28a0e6"/><rect x="174" y="552.0" width="1" height="4.3" fill="#0a3cb4"/><rect x="174" y="554.8" width="1" height="1.5" fill="#50c8dc"/><rect x="175" y="552.4" width="1" height="3.9" fill="#0a3cb4"/><rect x="175" y="555.2" width="1" height="1.1" fill="#50c8dc"/><rect x="176" y="553.7" width="1" height="2.6" fill="#0a3cb4"/><rect x="176" y="554.9" width="1" height="1.4" fill="#50c8dc"/><rect x="176" y="552.9" width="1" height="1.3" fill="#28c8e6"/><rect x="177" y="552.4" width="1" height="3.9" fill="#0a3cb4"/><rect x="177" y="554.8" width="1" height="1.5" fill="#1e8cdc"/><rect x="178" y="553.4" width="1" height="2.9" fill="#0a3cb4"/><rect x="178" y="554.5" width="1" height="1.8" fill="#3cb4e6"/><rect x="179" y="553.0" width="1" height="3.3" fill="#0a3cb4"/><rect x="179" y="554.2" width="1" height="2.1" fill="#1e8cdc"/><rect x="180" y="553.5" width="1" height="2.8" fill="#0a3cb4"/><rect x="180" y="554.7" width="1" height="1.6" fill="#1e8cdc"/><rect x="180" y="555.0" width="1" height="1.3" fill="#14a0f0"/><rect x="181" y="552.9" width="1" height="3.4" fill="#0a3cb4"/><rect x="181" y="554.3" width="1" height="2.0" fill="#3cb4e6"/><rect x="181" y="554.6" width="1" height="1.3" fill="#28c8e6"/><rect x="182" y="552.5" width="1" height="3.8" fill="#0a3cb4"/><rect x="182" y="554.7" width="1" height="1.6" fill="#3cb4e6"/><rect x="182" y="552.6" width="1" height="1.3" fill="#14a0f0"/><rect x="183" y="552.1" width="1" height="4.2" fill="#0a3cb4"/><rect x="183" y="555.0" width="1" height="1.3" fill="#1e8cdc"/><rect x="184" y="551.8" width="1" height="4.5" fill="#0a3cb4"/><rect x="184" y="555.1" width="1" height="1.2" fill="#1e8cdc"/><rect x="185" y="552.1" width="1" height="4.2" fill="#0a3cb4"/><rect x="185" y="554.0" width="1" height="2.3" fill="#3cb4e6"/><rect x="185" y="554.4" width="1" height="1.3" fill="#28c8e6"/><rect x="186" y="553.4" width="1" height="2.9" fill="#0a3cb4"/><rect x="186" y="554.2" width="1" height="2.1" fill="#50c8dc"/><rect x="187" y="551.8" width="1" height="4.5" fill="#0a3cb4"/><rect x="187" y="554.7" width="1" height="1.6" fill="#3cb4e6"/><rect x="188" y="552.2" width="1" height="4.1" fill="#0a3cb4"/><rect x="188" y="555.1" width="1" height="1.2" fill="#3cb4e6"/><rect x="189" y="552.7" width="1" height="3.6" fill="#0a3cb4"/><rect x="189" y="554.0" width="1" height="2.3" fill="#50c8dc"/><rect x="190" y="553.5" width="1" height="2.8" fill="#0a3cb4"/><rect x="190" y="554.0" width="1" height="2.3" fill="#1e8cdc"/><rect x="191" y="553.5" width="1" height="2.8" fill="#0a3cb4"/><rect x="191" y="554.4" width="1" height="1.9" fill="#1e8cdc"/><rect x="191" y="555.4" width="1" height="1.3" fill="#0a50c8"/><rect x="192" y="553.1" width="1" height="3.2" fill="#0a3cb4"/><rect x="192" y="554.9" width="1" height="1.4" fill="#28a0e6"/><rect x="192" y="555.8" width="1" height="1.3" fill="#28c8e6"/><rect x="193" y="552.5" width="1" height="3.8" fill="#0a3cb4"/><rect x="193" y="555.3" width="1" height="1.0" fill="#1e8cdc"/><rect x="194" y="551.8" width="1" height="4.5" fill="#0a3cb4"/><rect x="194" y="555.0" width="1" height="1.3" fill="#50c8dc"/><rect x="195" y="553.0" width="1" height="3.3" fill="#0a3cb4"/><rect x="195" y="554.1" width="1" height="2.2" fill="#50c8dc"/><rect x="196" y="553.4" width="1" height="2.9" fill="#0a3cb4"/><rect x="196" y="554.4" width="1" height="1.9" fill="#1e8cdc"/><rect x="196" y="551.6" width="1" height="1.3" fill="#0a50c8"/><rect x="197" y="551.8" width="1" height="4.5" fill="#0a3cb4"/><rect x="197" y="554.6" width="1" height="1.7" fill="#28a0e6"/><rect x="197" y="555.7" width="1" height="1.3" fill="#0a50c8"/><rect x="198" y="552.7" width="1" height="3.6" fill="#0a3cb4"/><rect x="198" y="554.3" width="1" height="2.0" fill="#1e8cdc"/><rect x="198" y="552.4" width="1" height="1.3" fill="#28c8e6"/><rect x="199" y="553.7" width="1" height="2.6" fill="#0a3cb4"/><rect x="199" y="554.6" width="1" height="1.7" fill="#3cb4e6"/><rect x="199" y="554.2" width="1" height="1.3" fill="#1e46b4"/><rect x="200" y="553.3" width="1" height="3.0" fill="#0a3cb4"/><rect x="200" y="554.9" width="1" height="1.4" fill="#50c8dc"/><rect x="200" y="552.2" width="1" height="1.3" fill="#14a0f0"/><rect x="201" y="551.9" width="1" height="4.4" fill="#0a3cb4"/><rect x="201" y="554.6" width="1" height="1.7" fill="#50c8dc"/><rect x="201" y="551.7" width="1" height="1.3" fill="#14a0f0"/><rect x="202" y="553.8" width="1" height="2.5" fill="#0a3cb4"/><rect x="202" y="555.1" width="1" height="1.2" fill="#1e8cdc"/><rect x="202" y="554.1" width="1" height="1.3" fill="#28c8e6"/><rect x="203" y="552.2" width="1" height="4.1" fill="#0a3cb4"/><rect x="203" y="554.8" width="1" height="1.5" fill="#50c8dc"/><rect x="203" y="554.5" width="1" height="1.3" fill="#28c8e6"/><rect x="204" y="552.6" width="1" height="3.7" fill="#0a3cb4"/><rect x="204" y="554.9" width="1" height="1.4" fill="#3cb4e6"/><rect x="205" y="553.4" width="1" height="2.9" fill="#0a3cb4"/><rect x="205" y="554.2" width="1" height="2.1" fill="#1e8cdc"/><rect x="206" y="553.4" width="1" height="2.9" fill="#0a3cb4"/><rect x="206" y="555.1" width="1" height="1.2" fill="#3cb4e6"/><rect x="206" y="555.0" width="1" height="1.3" fill="#14a0f0"/><rect x="207" y="553.8" width="1" height="2.5" fill="#0a3cb4"/><rect x="207" y="554.5" width="1" height="1.8" fill="#50c8dc"/><rect x="207" y="551.5" width="1" height="1.3" fill="#0a50c8"/><rect x="208" y="553.8" width="1" height="2.5" fill="#0a3cb4"/><rect x="208" y="555.0" width="1" height="1.3" fill="#28a0e6"/><rect x="209" y="553.6" width="1" height="2.7" fill="#0a3cb4"/><rect x="209" y="553.8" width="1" height="2.5" fill="#50c8dc"/><rect x="210" y="551.9" width="1" height="4.4" fill="#0a3cb4"/><rect x="210" y="554.6" width="1" height="1.7" fill="#3cb4e6"/><rect x="211" y="553.7" width="1" height="2.6" fill="#0a3cb4"/><rect x="211" y="554.7" width="1" height="1.6" fill="#1e8cdc"/><rect x="212" y="552.2" width="1" height="4.1" fill="#0a3cb4"/><rect x="212" y="554.5" width="1" height="1.8" fill="#28a0e6"/><rect x="212" y="552.9" width="1" height="1.3" fill="#50c8dc"/><rect x="213" y="552.0" width="1" height="4.3" fill="#0a3cb4"/><rect x="213" y="555.2" width="1" height="1.1" fill="#1e8cdc"/><rect x="214" y="552.1" width="1" height="4.2" fill="#0a3cb4"/><rect x="214" y="554.4" width="1" height="1.9" fill="#28a0e6"/><rect x="214" y="552.5" width="1" height="1.3" fill="#50c8dc"/><rect x="215" y="552.9" width="1" height="3.4" fill="#0a3cb4"/><rect x="215" y="554.6" width="1" height="1.7" fill="#50c8dc"/><rect x="216" y="553.0" width="1" height="3.3" fill="#0a3cb4"/><rect x="216" y="554.5" width="1" height="1.8" fill="#28a0e6"/><rect x="217" y="553.7" width="1" height="2.6" fill="#0a3cb4"/><rect x="217" y="554.4" width="1" height="1.9" fill="#50c8dc"/><rect x="217" y="555.6" width="1" height="1.3" fill="#14a0f0"/><rect x="218" y="551.9" width="1" height="4.4" fill="#0a3cb4"/><rect x="218" y="555.1" width="1" height="1.2" fill="#50c8dc"/><rect x="218" y="554.6" width="1" height="1.3" fill="#1e46b4"/><rect x="219" y="553.2" width="1" height="3.1" fill="#0a3cb4"/><rect x="219" y="554.2" width="1" height="2.1" fill="#50c8dc"/><rect x="219" y="551.4" width="1" height="1.3" fill="#50c8dc"/><rect x="220" y="553.6" width="1" height="2.7" fill="#0a3cb4"/><rect x="220" y="555.0" width="1" height="1.3" fill="#3cb4e6"/><rect x="221" y="552.2" width="1" height="4.1" fill="#0a3cb4"/><rect x="221" y="554.5" width="1" height="1.8" fill="#1e8cdc"/><rect x="221" y="551.9" width="1" height="1.3" fill="#28c8e6"/><rect x="222" y="553.3" width="1" height="3.0" fill="#0a3cb4"/><rect x="222" y="554.1" width="1" height="2.2" fill="#50c8dc"/><rect x="222" y="555.7" width="1" height="1.3" fill="#50c8dc"/><rect x="223" y="553.4" width="1" height="2.9" fill="#0a3cb4"/><rect x="223" y="554.9" width="1" height="1.4" fill="#3cb4e6"/><rect x="223" y="553.3" width="1" height="1.3" fill="#50c8dc"/><rect x="224" y="552.0" width="1" height="4.3" fill="#0a3cb4"/><rect x="224" y="555.2" width="1" height="1.1" fill="#50c8dc"/><rect x="225" y="552.3" width="1" height="4.0" fill="#0a3cb4"/><rect x="225" y="554.5" width="1" height="1.8" fill="#28a0e6"/><rect x="226" y="553.5" width="1" height="2.8" fill="#0a3cb4"/><rect x="226" y="554.8" width="1" height="1.5" fill="#28a0e6"/><rect x="226" y="551.6" width="1" height="1.3" fill="#0a50c8"/><rect x="227" y="552.1" width="1" height="4.2" fill="#0a3cb4"/><rect x="227" y="555.1" width="1" height="1.2" fill="#3cb4e6"/><rect x="228" y="553.7" width="1" height="2.6" fill="#0a3cb4"/><rect x="228" y="554.3" width="1" height="2.0" fill="#50c8dc"/><rect x="229" y="553.7" width="1" height="2.6" fill="#0a3cb4"/><rect x="229" y="553.8" width="1" height="2.5" fill="#3cb4e6"/><rect x="230" y="553.2" width="1" height="3.1" fill="#0a3cb4"/><rect x="230" y="553.9" width="1" height="2.4" fill="#3cb4e6"/><rect x="231" y="551.8" width="1" height="4.5" fill="#0a3cb4"/><rect x="231" y="554.7" width="1" height="1.6" fill="#1e8cdc"/><rect x="232" y="552.1" width="1" height="4.2" fill="#0a3cb4"/><rect x="232" y="553.9" width="1" height="2.4" fill="#3cb4e6"/><rect x="233" y="553.4" width="1" height="2.9" fill="#0a3cb4"/><rect x="233" y="555.1" width="1" height="1.2" fill="#50c8dc"/><rect x="233" y="554.5" width="1" height="1.3" fill="#28c8e6"/><rect x="234" y="551.9" width="1" height="4.4" fill="#0a3cb4"/><rect x="234" y="554.4" width="1" height="1.9" fill="#1e8cdc"/><rect x="234" y="555.8" width="1" height="1.3" fill="#14a0f0"/><rect x="235" y="552.4" width="1" height="3.9" fill="#0a3cb4"/><rect x="235" y="554.2" width="1" height="2.1" fill="#1e8cdc"/><rect x="236" y="552.3" width="1" height="4.0" fill="#0a3cb4"/><rect x="236" y="555.0" width="1" height="1.3" fill="#28a0e6"/><rect x="237" y="553.0" width="1" height="3.3" fill="#0a3cb4"/><rect x="237" y="554.1" width="1" height="2.2" fill="#50c8dc"/><rect x="237" y="555.2" width="1" height="1.3" fill="#14a0f0"/><rect x="238" y="551.9" width="1" height="4.4" fill="#0a3cb4"/><rect x="238" y="554.8" width="1" height="1.5" fill="#50c8dc"/><rect x="238" y="553.2" width="1" height="1.3" fill="#28c8e6"/><rect x="239" y="553.6" width="1" height="2.7" fill="#0a3cb4"/><rect x="239" y="554.0" width="1" height="2.3" fill="#28a0e6"/><rect x="240" y="552.9" width="1" height="3.4" fill="#0a3cb4"/><rect x="240" y="553.9" width="1" height="2.4" fill="#50c8dc"/><rect x="240" y="553.9" width="1" height="1.3" fill="#0a50c8"/><rect x="241" y="552.9" width="1" height="3.4" fill="#0a3cb4"/><rect x="241" y="555.2" width="1" height="1.1" fill="#50c8dc"/><rect x="241" y="553.2" width="1" height="1.3" fill="#28c8e6"/><rect x="242" y="553.2" width="1" height="3.1" fill="#0a3cb4"/><rect x="242" y="554.3" width="1" height="2.0" fill="#3cb4e6"/><rect x="242" y="554.1" width="1" height="1.3" fill="#1e46b4"/><rect x="243" y="552.0" width="1" height="4.3" fill="#0a3cb4"/><rect x="243" y="554.9" width="1" height="1.4" fill="#50c8dc"/><rect x="243" y="555.3" width="1" height="1.3" fill="#1e46b4"/><rect x="244" y="553.6" width="1" height="2.7" fill="#0a3cb4"/><rect x="244" y="554.3" width="1" height="2.0" fill="#50c8dc"/><rect x="245" y="553.6" width="1" height="2.7" fill="#0a3cb4"/><rect x="245" y="554.8" width="1" height="1.5" fill="#1e8cdc"/><rect x="245" y="553.1" width="1" height="1.3" fill="#28c8e6"/><rect x="246" y="551.8" width="1" height="4.5" fill="#0a3cb4"/><rect x="246" y="554.1" width="1" height="2.2" fill="#28a0e6"/><rect x="247" y="553.5" width="1" height="2.8" fill="#0a3cb4"/><rect x="247" y="555.2" width="1" height="1.1" fill="#3cb4e6"/><rect x="248" y="553.2" width="1" height="3.1" fill="#0a3cb4"/><rect x="248" y="554.3" width="1" height="2.0" fill="#28a0e6"/><rect x="249" y="551.8" width="1" height="4.5" fill="#0a3cb4"/><rect x="249" y="553.8" width="1" height="2.5" fill="#50c8dc"/><rect x="250" y="553.3" width="1" height="3.0" fill="#0a3cb4"/><rect x="250" y="554.5" width="1" height="1.8" fill="#28a0e6"/><rect x="251" y="553.7" width="1" height="2.6" fill="#0a3cb4"/><rect x="251" y="554.6" width="1" height="1.7" fill="#50c8dc"/><rect x="252" y="551.9" width="1" height="4.4" fill="#0a3cb4"/><rect x="252" y="554.5" width="1" height="1.8" fill="#3cb4e6"/><rect x="253" y="552.1" width="1" height="4.2" fill="#0a3cb4"/><rect x="253" y="554.5" width="1" height="1.8" fill="#28a0e6"/><rect x="254" y="553.6" width="1" height="2.7" fill="#0a3cb4"/><rect x="254" y="555.0" width="1" height="1.3" fill="#1e8cdc"/><rect x="255" y="551.9" width="1" height="4.4" fill="#0a3cb4"/><rect x="255" y="554.6" width="1" height="1.7" fill="#28a0e6"/><rect x="256" y="553.5" width="1" height="2.8" fill="#0a3cb4"/><rect x="256" y="554.7" width="1" height="1.6" fill="#1e8cdc"/><rect x="257" y="552.0" width="1" height="4.3" fill="#0a3cb4"/><rect x="257" y="555.3" width="1" height="1.0" fill="#1e8cdc"/><rect x="258" y="552.7" width="1" height="3.6" fill="#0a3cb4"/><rect x="258" y="553.8" width="1" height="2.5" fill="#28a0e6"/><rect x="258" y="553.5" width="1" height="1.3" fill="#14a0f0"/><rect x="259" y="553.7" width="1" height="2.6" fill="#0a3cb4"/><rect x="259" y="554.9" width="1" height="1.4" fill="#28a0e6"/><rect x="260" y="553.2" width="1" height="3.1" fill="#0a3cb4"/><rect x="260" y="554.8" width="1" height="1.5" fill="#3cb4e6"/><rect x="260" y="553.9" width="1" height="1.3" fill="#14a0f0"/><rect x="261" y="551.8" width="1" height="4.5" fill="#0a3cb4"/><rect x="261" y="554.4" width="1" height="1.9" fill="#3cb4e6"/><rect x="262" y="552.9" width="1" height="3.4" fill="#0a3cb4"/><rect x="262" y="554.0" width="1" height="2.3" fill="#28a0e6"/><rect x="263" y="552.8" width="1" height="3.5" fill="#0a3cb4"/><rect x="263" y="555.1" width="1" height="1.2" fill="#3cb4e6"/><rect x="264" y="552.6" width="1" height="3.7" fill="#0a3cb4"/><rect x="264" y="554.0" width="1" height="2.3" fill="#28a0e6"/><rect x="265" y="553.8" width="1" height="2.5" fill="#0a3cb4"/><rect x="265" y="555.1" width="1" height="1.2" fill="#28a0e6"/><rect x="266" y="552.4" width="1" height="3.9" fill="#0a3cb4"/><rect x="266" y="555.1" width="1" height="1.2" fill="#28a0e6"/><rect x="267" y="552.8" width="1" height="3.5" fill="#0a3cb4"/><rect x="267" y="553.9" width="1" height="2.4" fill="#28a0e6"/><rect x="267" y="554.5" width="1" height="1.3" fill="#0a50c8"/><rect x="268" y="553.3" width="1" height="3.0" fill="#0a3cb4"/><rect x="268" y="555.1" width="1" height="1.2" fill="#50c8dc"/><rect x="268" y="553.6" width="1" height="1.3" fill="#1e46b4"/><rect x="269" y="551.9" width="1" height="4.4" fill="#0a3cb4"/><rect x="269" y="554.4" width="1" height="1.9" fill="#28a0e6"/><rect x="269" y="554.5" width="1" height="1.3" fill="#1e46b4"/><rect x="270" y="553.3" width="1" height="3.0" fill="#0a3cb4"/><rect x="270" y="554.7" width="1" height="1.6" fill="#50c8dc"/><rect x="271" y="553.0" width="1" height="3.3" fill="#0a3cb4"/><rect x="271" y="554.3" width="1" height="2.0" fill="#1e8cdc"/><rect x="272" y="553.7" width="1" height="2.6" fill="#0a3cb4"/><rect x="272" y="554.0" width="1" height="2.3" fill="#28a0e6"/><rect x="272" y="554.1" width="1" height="1.3" fill="#28c8e6"/><rect x="273" y="553.0" width="1" height="3.3" fill="#0a3cb4"/><rect x="273" y="555.0" width="1" height="1.3" fill="#28a0e6"/><rect x="274" y="553.7" width="1" height="2.6" fill="#0a3cb4"/><rect x="274" y="554.8" width="1" height="1.5" fill="#3cb4e6"/><rect x="275" y="552.7" width="1" height="3.6" fill="#0a3cb4"/><rect x="275" y="554.2" width="1" height="2.1" fill="#1e8cdc"/><rect x="276" y="551.9" width="1" height="4.4" fill="#0a3cb4"/><rect x="276" y="555.3" width="1" height="1.0" fill="#1e8cdc"/><rect x="277" y="553.1" width="1" height="3.2" fill="#0a3cb4"/><rect x="277" y="554.4" width="1" height="1.9" fill="#1e8cdc"/><rect x="278" y="553.4" width="1" height="2.9" fill="#0a3cb4"/><rect x="278" y="554.2" width="1" height="2.1" fill="#28a0e6"/><rect x="278" y="553.6" width="1" height="1.3" fill="#1e46b4"/><rect x="279" y="552.3" width="1" height="4.0" fill="#0a3cb4"/><rect x="279" y="554.8" width="1" height="1.5" fill="#28a0e6"/><rect x="279" y="553.1" width="1" height="1.3" fill="#50c8dc"/><rect x="280" y="552.5" width="1" height="3.8" fill="#0a3cb4"/><rect x="280" y="554.7" width="1" height="1.6" fill="#28a0e6"/><rect x="280" y="552.7" width="1" height="1.3" fill="#14a0f0"/><rect x="281" y="553.0" width="1" height="3.3" fill="#0a3cb4"/><rect x="281" y="555.0" width="1" height="1.3" fill="#1e8cdc"/><rect x="281" y="554.4" width="1" height="1.3" fill="#0a50c8"/><rect x="282" y="552.2" width="1" height="4.1" fill="#0a3cb4"/><rect x="282" y="554.3" width="1" height="2.0" fill="#28a0e6"/><rect x="283" y="552.8" width="1" height="3.5" fill="#0a3cb4"/><rect x="283" y="554.7" width="1" height="1.6" fill="#28a0e6"/><rect x="284" y="551.9" width="1" height="4.4" fill="#0a3cb4"/><rect x="284" y="554.3" width="1" height="2.0" fill="#28a0e6"/><rect x="285" y="552.4" width="1" height="3.9" fill="#0a3cb4"/><rect x="285" y="555.0" width="1" height="1.3" fill="#28a0e6"/><rect x="286" y="552.8" width="1" height="3.5" fill="#0a3cb4"/><rect x="286" y="554.8" width="1" height="1.5" fill="#28a0e6"/><rect x="286" y="555.4" width="1" height="1.3" fill="#0a50c8"/><rect x="287" y="553.0" width="1" height="3.3" fill="#0a3cb4"/><rect x="287" y="554.6" width="1" height="1.7" fill="#50c8dc"/><rect x="288" y="552.9" width="1" height="3.4" fill="#0a3cb4"/><rect x="288" y="554.0" width="1" height="2.3" fill="#28a0e6"/><rect x="289" y="551.9" width="1" height="4.4" fill="#0a3cb4"/><rect x="289" y="554.8" width="1" height="1.5" fill="#28a0e6"/><rect x="290" y="553.0" width="1" height="3.3" fill="#0a3cb4"/><rect x="290" y="554.3" width="1" height="2.0" fill="#28a0e6"/><rect x="291" y="553.4" width="1" height="2.9" fill="#0a3cb4"/><rect x="291" y="554.7" width="1" height="1.6" fill="#3cb4e6"/><rect x="292" y="553.6" width="1" height="2.7" fill="#0a3cb4"/><rect x="292" y="554.0" width="1" height="2.3" fill="#50c8dc"/><rect x="293" y="552.0" width="1" height="4.3" fill="#0a3cb4"/><rect x="293" y="553.9" width="1" height="2.4" fill="#3cb4e6"/><rect x="294" y="551.9" width="1" height="4.4" fill="#0a3cb4"/><rect x="294" y="554.6" width="1" height="1.7" fill="#50c8dc"/><rect x="295" y="552.8" width="1" height="3.5" fill="#0a3cb4"/><rect x="295" y="554.5" width="1" height="1.8" fill="#3cb4e6"/><rect x="296" y="553.2" width="1" height="3.1" fill="#0a3cb4"/><rect x="296" y="555.3" width="1" height="1.0" fill="#3cb4e6"/><rect x="297" y="553.0" width="1" height="3.3" fill="#0a3cb4"/><rect x="297" y="554.1" width="1" height="2.2" fill="#50c8dc"/><rect x="298" y="552.6" width="1" height="3.7" fill="#0a3cb4"/><rect x="298" y="554.6" width="1" height="1.7" fill="#3cb4e6"/><rect x="299" y="551.8" width="1" height="4.5" fill="#0a3cb4"/><rect x="299" y="554.8" width="1" height="1.5" fill="#50c8dc"/><rect x="299" y="554.6" width="1" height="1.3" fill="#50c8dc"/><rect x="300" y="552.7" width="1" height="3.6" fill="#0a3cb4"/><rect x="300" y="554.9" width="1" height="1.4" fill="#28a0e6"/><rect x="301" y="553.3" width="1" height="3.0" fill="#0a3cb4"/><rect x="301" y="554.9" width="1" height="1.4" fill="#3cb4e6"/><rect x="302" y="552.6" width="1" height="3.7" fill="#0a3cb4"/><rect x="302" y="554.5" width="1" height="1.8" fill="#50c8dc"/><rect x="303" y="552.9" width="1" height="3.4" fill="#0a3cb4"/><rect x="303" y="554.6" width="1" height="1.7" fill="#3cb4e6"/><rect x="303" y="553.0" width="1" height="1.3" fill="#28c8e6"/><rect x="304" y="552.8" width="1" height="3.5" fill="#0a3cb4"/><rect x="304" y="555.1" width="1" height="1.2" fill="#1e8cdc"/><rect x="305" y="552.7" width="1" height="3.6" fill="#0a3cb4"/><rect x="305" y="554.8" width="1" height="1.5" fill="#3cb4e6"/><rect x="306" y="551.9" width="1" height="4.4" fill="#0a3cb4"/><rect x="306" y="554.8" width="1" height="1.5" fill="#1e8cdc"/><rect x="306" y="552.3" width="1" height="1.3" fill="#0a50c8"/><rect x="307" y="551.8" width="1" height="4.5" fill="#0a3cb4"/><rect x="307" y="554.0" width="1" height="2.3" fill="#1e8cdc"/><rect x="307" y="552.4" width="1" height="1.3" fill="#1e46b4"/><rect x="308" y="553.5" width="1" height="2.8" fill="#0a3cb4"/><rect x="308" y="553.8" width="1" height="2.5" fill="#1e8cdc"/><rect x="309" y="553.1" width="1" height="3.2" fill="#0a3cb4"/><rect x="309" y="553.9" width="1" height="2.4" fill="#1e8cdc"/><rect x="310" y="552.1" width="1" height="4.2" fill="#0a3cb4"/><rect x="310" y="553.8" width="1" height="2.5" fill="#28a0e6"/><rect x="310" y="555.7" width="1" height="1.3" fill="#1e46b4"/><rect x="311" y="552.0" width="1" height="4.3" fill="#0a3cb4"/><rect x="311" y="554.3" width="1" height="2.0" fill="#1e8cdc"/><rect x="311" y="555.2" width="1" height="1.3" fill="#50c8dc"/><rect x="312" y="553.6" width="1" height="2.7" fill="#0a3cb4"/><rect x="312" y="555.3" width="1" height="1.0" fill="#1e8cdc"/><rect x="313" y="553.5" width="1" height="2.8" fill="#0a3cb4"/><rect x="313" y="554.7" width="1" height="1.6" fill="#3cb4e6"/><rect x="314" y="552.7" width="1" height="3.6" fill="#0a3cb4"/><rect x="314" y="554.2" width="1" height="2.1" fill="#1e8cdc"/><rect x="314" y="553.9" width="1" height="1.3" fill="#28c8e6"/><rect x="315" y="552.5" width="1" height="3.8" fill="#0a3cb4"/><rect x="315" y="554.5" width="1" height="1.8" fill="#50c8dc"/><rect x="316" y="553.1" width="1" height="3.2" fill="#0a3cb4"/><rect x="316" y="554.2" width="1" height="2.1" fill="#1e8cdc"/><rect x="317" y="553.1" width="1" height="3.2" fill="#0a3cb4"/><rect x="317" y="555.0" width="1" height="1.3" fill="#28a0e6"/><rect x="318" y="551.9" width="1" height="4.4" fill="#0a3cb4"/><rect x="318" y="554.2" width="1" height="2.1" fill="#1e8cdc"/><rect x="319" y="553.6" width="1" height="2.7" fill="#0a3cb4"/><rect x="319" y="554.5" width="1" height="1.8" fill="#28a0e6"/><rect x="319" y="554.1" width="1" height="1.3" fill="#28c8e6"/><rect x="320" y="552.1" width="1" height="4.2" fill="#0a3cb4"/><rect x="320" y="555.2" width="1" height="1.1" fill="#28a0e6"/><rect x="320" y="553.9" width="1" height="1.3" fill="#0a50c8"/><rect x="321" y="551.8" width="1" height="4.5" fill="#0a3cb4"/><rect x="321" y="554.3" width="1" height="2.0" fill="#28a0e6"/><rect x="322" y="552.4" width="1" height="3.9" fill="#0a3cb4"/><rect x="322" y="555.2" width="1" height="1.1" fill="#1e8cdc"/><rect x="323" y="551.9" width="1" height="4.4" fill="#0a3cb4"/><rect x="323" y="554.0" width="1" height="2.3" fill="#28a0e6"/><rect x="324" y="552.8" width="1" height="3.5" fill="#0a3cb4"/><rect x="324" y="555.2" width="1" height="1.1" fill="#50c8dc"/><rect x="324" y="551.6" width="1" height="1.3" fill="#1e46b4"/><rect x="325" y="553.6" width="1" height="2.7" fill="#0a3cb4"/><rect x="325" y="554.0" width="1" height="2.3" fill="#1e8cdc"/><rect x="325" y="552.6" width="1" height="1.3" fill="#0a50c8"/><rect x="326" y="551.8" width="1" height="4.5" fill="#0a3cb4"/><rect x="326" y="553.9" width="1" height="2.4" fill="#3cb4e6"/><rect x="327" y="551.9" width="1" height="4.4" fill="#0a3cb4"/><rect x="327" y="555.3" width="1" height="1.0" fill="#50c8dc"/><rect x="328" y="551.8" width="1" height="4.5" fill="#0a3cb4"/><rect x="328" y="554.4" width="1" height="1.9" fill="#1e8cdc"/><rect x="329" y="553.6" width="1" height="2.7" fill="#0a3cb4"/><rect x="329" y="554.5" width="1" height="1.8" fill="#28a0e6"/><rect x="329" y="554.5" width="1" height="1.3" fill="#28c8e6"/><rect x="330" y="551.9" width="1" height="4.4" fill="#0a3cb4"/><rect x="330" y="555.3" width="1" height="1.0" fill="#28a0e6"/><rect x="330" y="555.0" width="1" height="1.3" fill="#1e46b4"/><rect x="331" y="552.8" width="1" height="3.5" fill="#0a3cb4"/><rect x="331" y="554.4" width="1" height="1.9" fill="#28a0e6"/><rect x="331" y="555.5" width="1" height="1.3" fill="#0a50c8"/><rect x="332" y="551.8" width="1" height="4.5" fill="#0a3cb4"/><rect x="332" y="554.0" width="1" height="2.3" fill="#50c8dc"/><rect x="332" y="554.8" width="1" height="1.3" fill="#50c8dc"/><rect x="333" y="553.8" width="1" height="2.5" fill="#0a3cb4"/><rect x="333" y="554.1" width="1" height="2.2" fill="#1e8cdc"/><rect x="333" y="554.1" width="1" height="1.3" fill="#28c8e6"/><rect x="334" y="552.8" width="1" height="3.5" fill="#0a3cb4"/><rect x="334" y="554.8" width="1" height="1.5" fill="#3cb4e6"/><rect x="335" y="553.0" width="1" height="3.3" fill="#0a3cb4"/><rect x="335" y="555.0" width="1" height="1.3" fill="#3cb4e6"/><rect x="335" y="553.6" width="1" height="1.3" fill="#28c8e6"/><rect x="336" y="553.4" width="1" height="2.9" fill="#0a3cb4"/><rect x="336" y="554.3" width="1" height="2.0" fill="#1e8cdc"/><rect x="337" y="552.7" width="1" height="3.6" fill="#0a3cb4"/><rect x="337" y="554.4" width="1" height="1.9" fill="#28a0e6"/><rect x="337" y="554.8" width="1" height="1.3" fill="#28c8e6"/><rect x="338" y="552.8" width="1" height="3.5" fill="#0a3cb4"/><rect x="338" y="554.2" width="1" height="2.1" fill="#3cb4e6"/><rect x="339" y="552.2" width="1" height="4.1" fill="#0a3cb4"/><rect x="339" y="554.5" width="1" height="1.8" fill="#28a0e6"/><rect x="340" y="552.8" width="1" height="3.5" fill="#0a3cb4"/><rect x="340" y="554.6" width="1" height="1.7" fill="#28a0e6"/><rect x="341" y="551.8" width="1" height="4.5" fill="#0a3cb4"/><rect x="341" y="554.7" width="1" height="1.6" fill="#1e8cdc"/><rect x="341" y="555.5" width="1" height="1.3" fill="#50c8dc"/><rect x="342" y="551.8" width="1" height="4.5" fill="#0a3cb4"/><rect x="342" y="554.7" width="1" height="1.6" fill="#3cb4e6"/><rect x="342" y="552.2" width="1" height="1.3" fill="#50c8dc"/><rect x="343" y="552.0" width="1" height="4.3" fill="#0a3cb4"/><rect x="343" y="554.5" width="1" height="1.8" fill="#28a0e6"/><rect x="344" y="552.2" width="1" height="4.1" fill="#0a3cb4"/><rect x="344" y="555.3" width="1" height="1.0" fill="#50c8dc"/><rect x="344" y="551.5" width="1" height="1.3" fill="#50c8dc"/><rect x="345" y="552.0" width="1" height="4.3" fill="#0a3cb4"/><rect x="345" y="555.1" width="1" height="1.2" fill="#3cb4e6"/><rect x="345" y="553.6" width="1" height="1.3" fill="#0a50c8"/><rect x="346" y="551.9" width="1" height="4.4" fill="#0a3cb4"/><rect x="346" y="554.8" width="1" height="1.5" fill="#3cb4e6"/><rect x="346" y="552.6" width="1" height="1.3" fill="#14a0f0"/><rect x="347" y="553.4" width="1" height="2.9" fill="#0a3cb4"/><rect x="347" y="555.1" width="1" height="1.2" fill="#3cb4e6"/><rect x="348" y="552.3" width="1" height="4.0" fill="#0a3cb4"/><rect x="348" y="553.9" width="1" height="2.4" fill="#50c8dc"/><rect x="348" y="552.5" width="1" height="1.3" fill="#28c8e6"/><rect x="349" y="553.5" width="1" height="2.8" fill="#0a3cb4"/><rect x="349" y="554.0" width="1" height="2.3" fill="#3cb4e6"/><rect x="350" y="552.4" width="1" height="3.9" fill="#0a3cb4"/><rect x="350" y="555.1" width="1" height="1.2" fill="#1e8cdc"/><rect x="350" y="555.2" width="1" height="1.3" fill="#1e46b4"/><rect x="351" y="552.8" width="1" height="3.5" fill="#0a3cb4"/><rect x="351" y="554.1" width="1" height="2.2" fill="#50c8dc"/><rect x="352" y="552.7" width="1" height="3.6" fill="#0a3cb4"/><rect x="352" y="553.9" width="1" height="2.4" fill="#28a0e6"/><rect x="353" y="553.8" width="1" height="2.5" fill="#0a3cb4"/><rect x="353" y="553.9" width="1" height="2.4" fill="#3cb4e6"/><rect x="353" y="554.3" width="1" height="1.3" fill="#1e46b4"/><rect x="354" y="553.6" width="1" height="2.7" fill="#0a3cb4"/><rect x="354" y="554.6" width="1" height="1.7" fill="#50c8dc"/><rect x="354" y="551.3" width="1" height="1.3" fill="#50c8dc"/><rect x="355" y="552.9" width="1" height="3.4" fill="#0a3cb4"/><rect x="355" y="555.0" width="1" height="1.3" fill="#50c8dc"/><rect x="356" y="553.8" width="1" height="2.5" fill="#0a3cb4"/><rect x="356" y="554.2" width="1" height="2.1" fill="#50c8dc"/><rect x="357" y="553.2" width="1" height="3.1" fill="#0a3cb4"/><rect x="357" y="555.2" width="1" height="1.1" fill="#50c8dc"/><rect x="358" y="553.4" width="1" height="2.9" fill="#0a3cb4"/><rect x="358" y="555.3" width="1" height="1.0" fill="#3cb4e6"/><rect x="359" y="551.9" width="1" height="4.4" fill="#0a3cb4"/><rect x="359" y="554.4" width="1" height="1.9" fill="#28a0e6"/><rect x="360" y="553.4" width="1" height="2.9" fill="#0a3cb4"/><rect x="360" y="555.3" width="1" height="1.0" fill="#1e8cdc"/><rect x="361" y="553.1" width="1" height="3.2" fill="#0a3cb4"/><rect x="361" y="554.0" width="1" height="2.3" fill="#1e8cdc"/><rect x="362" y="553.3" width="1" height="3.0" fill="#0a3cb4"/><rect x="362" y="554.2" width="1" height="2.1" fill="#3cb4e6"/><rect x="362" y="551.8" width="1" height="1.3" fill="#1e46b4"/><rect x="363" y="552.6" width="1" height="3.7" fill="#0a3cb4"/><rect x="363" y="554.7" width="1" height="1.6" fill="#50c8dc"/><rect x="363" y="551.5" width="1" height="1.3" fill="#50c8dc"/><rect x="364" y="553.3" width="1" height="3.0" fill="#0a3cb4"/><rect x="364" y="553.9" width="1" height="2.4" fill="#3cb4e6"/><rect x="365" y="552.7" width="1" height="3.6" fill="#0a3cb4"/><rect x="365" y="553.9" width="1" height="2.4" fill="#3cb4e6"/><rect x="366" y="553.2" width="1" height="3.1" fill="#0a3cb4"/><rect x="366" y="554.5" width="1" height="1.8" fill="#50c8dc"/><rect x="366" y="551.5" width="1" height="1.3" fill="#28c8e6"/><rect x="367" y="552.5" width="1" height="3.8" fill="#0a3cb4"/><rect x="367" y="554.3" width="1" height="2.0" fill="#28a0e6"/><rect x="367" y="553.3" width="1" height="1.3" fill="#50c8dc"/><rect x="368" y="552.3" width="1" height="4.0" fill="#0a3cb4"/><rect x="368" y="554.1" width="1" height="2.2" fill="#50c8dc"/><rect x="369" y="552.5" width="1" height="3.8" fill="#0a3cb4"/><rect x="369" y="554.7" width="1" height="1.6" fill="#50c8dc"/><rect x="370" y="552.5" width="1" height="3.8" fill="#0a3cb4"/><rect x="370" y="554.6" width="1" height="1.7" fill="#28a0e6"/><rect x="370" y="552.9" width="1" height="1.3" fill="#14a0f0"/><rect x="371" y="552.5" width="1" height="3.8" fill="#0a3cb4"/><rect x="371" y="553.8" width="1" height="2.5" fill="#1e8cdc"/><rect x="372" y="553.7" width="1" height="2.6" fill="#0a3cb4"/><rect x="372" y="554.9" width="1" height="1.4" fill="#28a0e6"/><rect x="372" y="552.1" width="1" height="1.3" fill="#14a0f0"/><rect x="373" y="553.3" width="1" height="3.0" fill="#0a3cb4"/><rect x="373" y="553.9" width="1" height="2.4" fill="#28a0e6"/><rect x="374" y="552.7" width="1" height="3.6" fill="#0a3cb4"/><rect x="374" y="553.9" width="1" height="2.4" fill="#50c8dc"/><rect x="375" y="553.5" width="1" height="2.8" fill="#0a3cb4"/><rect x="375" y="554.8" width="1" height="1.5" fill="#1e8cdc"/><rect x="376" y="552.5" width="1" height="3.8" fill="#0a3cb4"/><rect x="376" y="554.3" width="1" height="2.0" fill="#50c8dc"/><rect x="377" y="551.8" width="1" height="4.5" fill="#0a3cb4"/><rect x="377" y="553.9" width="1" height="2.4" fill="#3cb4e6"/><rect x="378" y="552.4" width="1" height="3.9" fill="#0a3cb4"/><rect x="378" y="554.1" width="1" height="2.2" fill="#3cb4e6"/><rect x="378" y="553.7" width="1" height="1.3" fill="#0a50c8"/><rect x="379" y="553.7" width="1" height="2.6" fill="#0a3cb4"/><rect x="379" y="554.1" width="1" height="2.2" fill="#1e8cdc"/><rect x="380" y="552.5" width="1" height="3.8" fill="#0a3cb4"/><rect x="380" y="554.3" width="1" height="2.0" fill="#50c8dc"/><rect x="381" y="552.5" width="1" height="3.8" fill="#0a3cb4"/><rect x="381" y="555.2" width="1" height="1.1" fill="#3cb4e6"/><rect x="381" y="551.4" width="1" height="1.3" fill="#50c8dc"/><rect x="382" y="553.2" width="1" height="3.1" fill="#0a3cb4"/><rect x="382" y="555.0" width="1" height="1.3" fill="#1e8cdc"/><rect x="383" y="552.6" width="1" height="3.7" fill="#0a3cb4"/><rect x="383" y="555.1" width="1" height="1.2" fill="#28a0e6"/><rect x="384" y="553.0" width="1" height="3.3" fill="#0a3cb4"/><rect x="384" y="554.7" width="1" height="1.6" fill="#28a0e6"/><rect x="385" y="551.9" width="1" height="4.4" fill="#0a3cb4"/><rect x="385" y="554.3" width="1" height="2.0" fill="#50c8dc"/><rect x="385" y="552.6" width="1" height="1.3" fill="#14a0f0"/><rect x="386" y="553.8" width="1" height="2.5" fill="#0a3cb4"/><rect x="386" y="555.1" width="1" height="1.2" fill="#3cb4e6"/><rect x="386" y="553.0" width="1" height="1.3" fill="#14a0f0"/><rect x="387" y="552.4" width="1" height="3.9" fill="#0a3cb4"/><rect x="387" y="554.5" width="1" height="1.8" fill="#1e8cdc"/><rect x="388" y="552.4" width="1" height="3.9" fill="#0a3cb4"/><rect x="388" y="555.3" width="1" height="1.0" fill="#1e8cdc"/><rect x="389" y="551.9" width="1" height="4.4" fill="#0a3cb4"/><rect x="389" y="554.8" width="1" height="1.5" fill="#28a0e6"/><rect x="390" y="553.2" width="1" height="3.1" fill="#0a3cb4"/><rect x="390" y="553.9" width="1" height="2.4" fill="#1e8cdc"/><rect x="391" y="552.3" width="1" height="4.0" fill="#0a3cb4"/><rect x="391" y="554.8" width="1" height="1.5" fill="#1e8cdc"/><rect x="391" y="551.3" width="1" height="1.3" fill="#14a0f0"/><rect x="392" y="553.7" width="1" height="2.6" fill="#0a3cb4"/><rect x="392" y="554.0" width="1" height="2.3" fill="#28a0e6"/><rect x="393" y="552.3" width="1" height="4.0" fill="#0a3cb4"/><rect x="393" y="554.9" width="1" height="1.4" fill="#3cb4e6"/><rect x="394" y="553.1" width="1" height="3.2" fill="#0a3cb4"/><rect x="394" y="554.6" width="1" height="1.7" fill="#50c8dc"/><rect x="394" y="555.6" width="1" height="1.3" fill="#28c8e6"/><rect x="395" y="553.2" width="1" height="3.1" fill="#0a3cb4"/><rect x="395" y="554.0" width="1" height="2.3" fill="#50c8dc"/><rect x="395" y="551.7" width="1" height="1.3" fill="#50c8dc"/><rect x="396" y="552.0" width="1" height="4.3" fill="#0a3cb4"/><rect x="396" y="555.2" width="1" height="1.1" fill="#50c8dc"/><rect x="397" y="552.4" width="1" height="3.9" fill="#0a3cb4"/><rect x="397" y="554.2" width="1" height="2.1" fill="#1e8cdc"/><rect x="398" y="553.0" width="1" height="3.3" fill="#0a3cb4"/><rect x="398" y="555.3" width="1" height="1.0" fill="#28a0e6"/><rect x="398" y="552.4" width="1" height="1.3" fill="#14a0f0"/><rect x="399" y="552.6" width="1" height="3.7" fill="#0a3cb4"/><rect x="399" y="555.0" width="1" height="1.3" fill="#1e8cdc"/><rect x="400" y="552.6" width="1" height="3.7" fill="#0a3cb4"/><rect x="400" y="553.9" width="1" height="2.4" fill="#1e8cdc"/><rect x="401" y="552.5" width="1" height="3.8" fill="#0a3cb4"/><rect x="401" y="554.2" width="1" height="2.1" fill="#50c8dc"/><rect x="401" y="551.4" width="1" height="1.3" fill="#50c8dc"/><rect x="402" y="553.4" width="1" height="2.9" fill="#0a3cb4"/><rect x="402" y="554.9" width="1" height="1.4" fill="#28a0e6"/><rect x="403" y="553.8" width="1" height="2.5" fill="#0a3cb4"/><rect x="403" y="554.6" width="1" height="1.7" fill="#50c8dc"/><rect x="404" y="551.8" width="1" height="4.5" fill="#0a3cb4"/><rect x="404" y="554.6" width="1" height="1.7" fill="#3cb4e6"/><rect x="405" y="552.5" width="1" height="3.8" fill="#0a3cb4"/><rect x="405" y="554.3" width="1" height="2.0" fill="#50c8dc"/><rect x="405" y="552.6" width="1" height="1.3" fill="#0a50c8"/><rect x="406" y="553.3" width="1" height="3.0" fill="#0a3cb4"/><rect x="406" y="554.4" width="1" height="1.9" fill="#50c8dc"/><rect x="406" y="555.5" width="1" height="1.3" fill="#50c8dc"/><rect x="407" y="552.3" width="1" height="4.0" fill="#0a3cb4"/><rect x="407" y="554.4" width="1" height="1.9" fill="#3cb4e6"/><rect x="408" y="552.1" width="1" height="4.2" fill="#0a3cb4"/><rect x="408" y="554.6" width="1" height="1.7" fill="#1e8cdc"/><rect x="409" y="552.5" width="1" height="3.8" fill="#0a3cb4"/><rect x="409" y="554.8" width="1" height="1.5" fill="#28a0e6"/><rect x="409" y="551.9" width="1" height="1.3" fill="#1e46b4"/><rect x="410" y="552.6" width="1" height="3.7" fill="#0a3cb4"/><rect x="410" y="554.2" width="1" height="2.1" fill="#3cb4e6"/><rect x="410" y="552.2" width="1" height="1.3" fill="#28c8e6"/><rect x="411" y="552.9" width="1" height="3.4" fill="#0a3cb4"/><rect x="411" y="554.8" width="1" height="1.5" fill="#50c8dc"/><rect x="411" y="553.8" width="1" height="1.3" fill="#0a50c8"/><rect x="412" y="552.6" width="1" height="3.7" fill="#0a3cb4"/><rect x="412" y="554.7" width="1" height="1.6" fill="#1e8cdc"/><rect x="413" y="553.6" width="1" height="2.7" fill="#0a3cb4"/><rect x="413" y="554.2" width="1" height="2.1" fill="#50c8dc"/><rect x="414" y="552.4" width="1" height="3.9" fill="#0a3cb4"/><rect x="414" y="554.5" width="1" height="1.8" fill="#50c8dc"/><rect x="415" y="553.7" width="1" height="2.6" fill="#0a3cb4"/><rect x="415" y="555.0" width="1" height="1.3" fill="#3cb4e6"/><rect x="416" y="551.9" width="1" height="4.4" fill="#0a3cb4"/><rect x="416" y="554.3" width="1" height="2.0" fill="#50c8dc"/><rect x="417" y="552.5" width="1" height="3.8" fill="#0a3cb4"/><rect x="417" y="555.0" width="1" height="1.3" fill="#28a0e6"/><rect x="418" y="551.8" width="1" height="4.5" fill="#0a3cb4"/><rect x="418" y="554.8" width="1" height="1.5" fill="#50c8dc"/><rect x="418" y="553.9" width="1" height="1.3" fill="#50c8dc"/><rect x="419" y="553.3" width="1" height="3.0" fill="#0a3cb4"/><rect x="419" y="554.4" width="1" height="1.9" fill="#3cb4e6"/><rect x="420" y="553.2" width="1" height="3.1" fill="#0a3cb4"/><rect x="420" y="553.9" width="1" height="2.4" fill="#50c8dc"/><rect x="420" y="553.2" width="1" height="1.3" fill="#0a50c8"/><rect x="421" y="552.1" width="1" height="4.2" fill="#0a3cb4"/><rect x="421" y="554.7" width="1" height="1.6" fill="#1e8cdc"/><rect x="422" y="552.6" width="1" height="3.7" fill="#0a3cb4"/><rect x="422" y="554.9" width="1" height="1.4" fill="#50c8dc"/><rect x="423" y="551.8" width="1" height="4.5" fill="#0a3cb4"/><rect x="423" y="555.1" width="1" height="1.2" fill="#1e8cdc"/><rect x="424" y="552.8" width="1" height="3.5" fill="#0a3cb4"/><rect x="424" y="555.3" width="1" height="1.0" fill="#1e8cdc"/><rect x="425" y="552.8" width="1" height="3.5" fill="#0a3cb4"/><rect x="425" y="555.0" width="1" height="1.3" fill="#50c8dc"/><rect x="426" y="553.2" width="1" height="3.1" fill="#0a3cb4"/><rect x="426" y="554.1" width="1" height="2.2" fill="#50c8dc"/><rect x="427" y="553.6" width="1" height="2.7" fill="#0a3cb4"/><rect x="427" y="555.2" width="1" height="1.1" fill="#50c8dc"/><rect x="428" y="551.8" width="1" height="4.5" fill="#0a3cb4"/><rect x="428" y="554.4" width="1" height="1.9" fill="#1e8cdc"/><rect x="428" y="552.4" width="1" height="1.3" fill="#14a0f0"/><rect x="429" y="553.8" width="1" height="2.5" fill="#0a3cb4"/><rect x="429" y="554.5" width="1" height="1.8" fill="#3cb4e6"/><rect x="430" y="552.1" width="1" height="4.2" fill="#0a3cb4"/><rect x="430" y="554.7" width="1" height="1.6" fill="#1e8cdc"/><rect x="430" y="553.2" width="1" height="1.3" fill="#1e46b4"/><rect x="431" y="553.8" width="1" height="2.5" fill="#0a3cb4"/><rect x="431" y="554.7" width="1" height="1.6" fill="#50c8dc"/><rect x="431" y="554.4" width="1" height="1.3" fill="#1e46b4"/><rect x="432" y="553.3" width="1" height="3.0" fill="#0a3cb4"/><rect x="432" y="555.0" width="1" height="1.3" fill="#28a0e6"/><rect x="433" y="552.5" width="1" height="3.8" fill="#0a3cb4"/><rect x="433" y="555.3" width="1" height="1.0" fill="#3cb4e6"/><rect x="433" y="553.6" width="1" height="1.3" fill="#1e46b4"/><rect x="434" y="553.7" width="1" height="2.6" fill="#0a3cb4"/><rect x="434" y="554.1" width="1" height="2.2" fill="#1e8cdc"/><rect x="434" y="552.6" width="1" height="1.3" fill="#28c8e6"/><rect x="435" y="553.1" width="1" height="3.2" fill="#0a3cb4"/><rect x="435" y="554.0" width="1" height="2.3" fill="#3cb4e6"/><rect x="436" y="552.4" width="1" height="3.9" fill="#0a3cb4"/><rect x="436" y="555.3" width="1" height="1.0" fill="#1e8cdc"/><rect x="437" y="551.8" width="1" height="4.5" fill="#0a3cb4"/><rect x="437" y="555.0" width="1" height="1.3" fill="#3cb4e6"/><rect x="438" y="553.2" width="1" height="3.1" fill="#0a3cb4"/><rect x="438" y="554.3" width="1" height="2.0" fill="#1e8cdc"/><rect x="439" y="552.0" width="1" height="4.3" fill="#0a3cb4"/><rect x="439" y="555.0" width="1" height="1.3" fill="#3cb4e6"/><rect x="440" y="552.4" width="1" height="3.9" fill="#0a3cb4"/><rect x="440" y="555.0" width="1" height="1.3" fill="#1e8cdc"/><rect x="441" y="553.1" width="1" height="3.2" fill="#0a3cb4"/><rect x="441" y="554.1" width="1" height="2.2" fill="#1e8cdc"/><rect x="442" y="553.3" width="1" height="3.0" fill="#0a3cb4"/><rect x="442" y="554.8" width="1" height="1.5" fill="#3cb4e6"/><rect x="443" y="552.5" width="1" height="3.8" fill="#0a3cb4"/><rect x="443" y="554.0" width="1" height="2.3" fill="#28a0e6"/><rect x="444" y="552.4" width="1" height="3.9" fill="#0a3cb4"/><rect x="444" y="553.9" width="1" height="2.4" fill="#28a0e6"/><rect x="444" y="555.6" width="1" height="1.3" fill="#28c8e6"/><rect x="445" y="552.3" width="1" height="4.0" fill="#0a3cb4"/><rect x="445" y="554.6" width="1" height="1.7" fill="#50c8dc"/><rect x="445" y="555.3" width="1" height="1.3" fill="#14a0f0"/><rect x="446" y="552.0" width="1" height="4.3" fill="#0a3cb4"/><rect x="446" y="554.4" width="1" height="1.9" fill="#1e8cdc"/><rect x="446" y="555.1" width="1" height="1.3" fill="#28c8e6"/><rect x="447" y="553.7" width="1" height="2.6" fill="#0a3cb4"/><rect x="447" y="554.1" width="1" height="2.2" fill="#3cb4e6"/><rect x="448" y="553.1" width="1" height="3.2" fill="#0a3cb4"/><rect x="448" y="554.8" width="1" height="1.5" fill="#3cb4e6"/><rect x="449" y="553.2" width="1" height="3.1" fill="#0a3cb4"/><rect x="449" y="555.3" width="1" height="1.0" fill="#1e8cdc"/><rect x="449" y="553.1" width="1" height="1.3" fill="#28c8e6"/><rect x="450" y="553.5" width="1" height="2.8" fill="#0a3cb4"/><rect x="450" y="555.1" width="1" height="1.2" fill="#28a0e6"/><rect x="451" y="552.8" width="1" height="3.5" fill="#0a3cb4"/><rect x="451" y="554.8" width="1" height="1.5" fill="#50c8dc"/><rect x="452" y="552.8" width="1" height="3.5" fill="#0a3cb4"/><rect x="452" y="554.7" width="1" height="1.6" fill="#50c8dc"/><rect x="452" y="554.6" width="1" height="1.3" fill="#50c8dc"/><rect x="453" y="552.7" width="1" height="3.6" fill="#0a3cb4"/><rect x="453" y="554.5" width="1" height="1.8" fill="#3cb4e6"/><rect x="453" y="554.5" width="1" height="1.3" fill="#50c8dc"/><rect x="454" y="553.7" width="1" height="2.6" fill="#0a3cb4"/><rect x="454" y="554.1" width="1" height="2.2" fill="#50c8dc"/><rect x="454" y="554.9" width="1" height="1.3" fill="#1e46b4"/><rect x="455" y="552.4" width="1" height="3.9" fill="#0a3cb4"/><rect x="455" y="554.3" width="1" height="2.0" fill="#50c8dc"/><rect x="455" y="553.5" width="1" height="1.3" fill="#0a50c8"/><rect x="456" y="552.0" width="1" height="4.3" fill="#0a3cb4"/><rect x="456" y="553.8" width="1" height="2.5" fill="#3cb4e6"/><rect x="456" y="554.7" width="1" height="1.3" fill="#28c8e6"/><rect x="457" y="552.7" width="1" height="3.6" fill="#0a3cb4"/><rect x="457" y="554.5" width="1" height="1.8" fill="#1e8cdc"/><rect x="457" y="554.5" width="1" height="1.3" fill="#28c8e6"/><rect x="458" y="551.8" width="1" height="4.5" fill="#0a3cb4"/><rect x="458" y="555.2" width="1" height="1.1" fill="#28a0e6"/><rect x="458" y="555.1" width="1" height="1.3" fill="#50c8dc"/><rect x="459" y="552.4" width="1" height="3.9" fill="#0a3cb4"/><rect x="459" y="554.2" width="1" height="2.1" fill="#50c8dc"/><rect x="460" y="551.9" width="1" height="4.4" fill="#0a3cb4"/><rect x="460" y="554.6" width="1" height="1.7" fill="#28a0e6"/><rect x="461" y="553.5" width="1" height="2.8" fill="#0a3cb4"/><rect x="461" y="554.6" width="1" height="1.7" fill="#3cb4e6"/><rect x="462" y="553.4" width="1" height="2.9" fill="#0a3cb4"/><rect x="462" y="554.6" width="1" height="1.7" fill="#1e8cdc"/><rect x="463" y="552.0" width="1" height="4.3" fill="#0a3cb4"/><rect x="463" y="554.4" width="1" height="1.9" fill="#28a0e6"/><rect x="463" y="552.8" width="1" height="1.3" fill="#0a50c8"/><rect x="464" y="552.6" width="1" height="3.7" fill="#0a3cb4"/><rect x="464" y="554.9" width="1" height="1.4" fill="#1e8cdc"/><rect x="464" y="551.5" width="1" height="1.3" fill="#1e46b4"/><rect x="465" y="552.8" width="1" height="3.5" fill="#0a3cb4"/><rect x="465" y="553.8" width="1" height="2.5" fill="#3cb4e6"/><rect x="465" y="552.1" width="1" height="1.3" fill="#0a50c8"/><rect x="466" y="552.3" width="1" height="4.0" fill="#0a3cb4"/><rect x="466" y="555.2" width="1" height="1.1" fill="#28a0e6"/><rect x="467" y="552.4" width="1" height="3.9" fill="#0a3cb4"/><rect x="467" y="554.1" width="1" height="2.2" fill="#28a0e6"/><rect x="468" y="552.0" width="1" height="4.3" fill="#0a3cb4"/><rect x="468" y="554.3" width="1" height="2.0" fill="#1e8cdc"/><rect x="469" y="552.0" width="1" height="4.3" fill="#0a3cb4"/><rect x="469" y="554.2" width="1" height="2.1" fill="#1e8cdc"/><rect x="470" y="552.6" width="1" height="3.7" fill="#0a3cb4"/><rect x="470" y="553.9" width="1" height="2.4" fill="#28a0e6"/><rect x="471" y="553.2" width="1" height="3.1" fill="#0a3cb4"/><rect x="471" y="554.0" width="1" height="2.3" fill="#1e8cdc"/><rect x="471" y="552.9" width="1" height="1.3" fill="#50c8dc"/><rect x="472" y="552.8" width="1" height="3.5" fill="#0a3cb4"/><rect x="472" y="553.8" width="1" height="2.5" fill="#3cb4e6"/><rect x="473" y="553.3" width="1" height="3.0" fill="#0a3cb4"/><rect x="473" y="555.0" width="1" height="1.3" fill="#28a0e6"/><rect x="473" y="555.0" width="1" height="1.3" fill="#0a50c8"/><rect x="474" y="553.0" width="1" height="3.3" fill="#0a3cb4"/><rect x="474" y="553.9" width="1" height="2.4" fill="#28a0e6"/><rect x="475" y="552.5" width="1" height="3.8" fill="#0a3cb4"/><rect x="475" y="554.4" width="1" height="1.9" fill="#50c8dc"/><rect x="476" y="553.2" width="1" height="3.1" fill="#0a3cb4"/><rect x="476" y="555.3" width="1" height="1.0" fill="#50c8dc"/><rect x="477" y="553.0" width="1" height="3.3" fill="#0a3cb4"/><rect x="477" y="554.5" width="1" height="1.8" fill="#28a0e6"/><rect x="477" y="554.2" width="1" height="1.3" fill="#1e46b4"/><rect x="478" y="553.1" width="1" height="3.2" fill="#0a3cb4"/><rect x="478" y="554.8" width="1" height="1.5" fill="#3cb4e6"/><rect x="479" y="552.5" width="1" height="3.8" fill="#0a3cb4"/><rect x="479" y="554.4" width="1" height="1.9" fill="#3cb4e6"/><rect x="480" y="552.8" width="1" height="3.5" fill="#0a3cb4"/><rect x="480" y="554.2" width="1" height="2.1" fill="#3cb4e6"/><rect x="481" y="552.8" width="1" height="3.5" fill="#0a3cb4"/><rect x="481" y="555.2" width="1" height="1.1" fill="#28a0e6"/><rect x="481" y="554.1" width="1" height="1.3" fill="#0a50c8"/><rect x="482" y="552.1" width="1" height="4.2" fill="#0a3cb4"/><rect x="482" y="554.4" width="1" height="1.9" fill="#3cb4e6"/><rect x="483" y="552.4" width="1" height="3.9" fill="#0a3cb4"/><rect x="483" y="555.2" width="1" height="1.1" fill="#28a0e6"/><rect x="483" y="555.1" width="1" height="1.3" fill="#14a0f0"/><rect x="484" y="552.0" width="1" height="4.3" fill="#0a3cb4"/><rect x="484" y="554.9" width="1" height="1.4" fill="#50c8dc"/><rect x="484" y="552.6" width="1" height="1.3" fill="#0a50c8"/><rect x="485" y="552.1" width="1" height="4.2" fill="#0a3cb4"/><rect x="485" y="554.4" width="1" height="1.9" fill="#28a0e6"/><rect x="486" y="553.3" width="1" height="3.0" fill="#0a3cb4"/><rect x="486" y="555.0" width="1" height="1.3" fill="#50c8dc"/><rect x="486" y="554.9" width="1" height="1.3" fill="#1e46b4"/><rect x="487" y="553.5" width="1" height="2.8" fill="#0a3cb4"/><rect x="487" y="555.0" width="1" height="1.3" fill="#50c8dc"/><rect x="488" y="553.0" width="1" height="3.3" fill="#0a3cb4"/><rect x="488" y="554.2" width="1" height="2.1" fill="#28a0e6"/><rect x="488" y="553.7" width="1" height="1.3" fill="#14a0f0"/><rect x="489" y="551.8" width="1" height="4.5" fill="#0a3cb4"/><rect x="489" y="555.3" width="1" height="1.0" fill="#1e8cdc"/><rect x="490" y="553.0" width="1" height="3.3" fill="#0a3cb4"/><rect x="490" y="554.1" width="1" height="2.2" fill="#50c8dc"/><rect x="490" y="554.5" width="1" height="1.3" fill="#0a50c8"/><rect x="491" y="553.5" width="1" height="2.8" fill="#0a3cb4"/><rect x="491" y="554.1" width="1" height="2.2" fill="#1e8cdc"/><rect x="492" y="553.6" width="1" height="2.7" fill="#0a3cb4"/><rect x="492" y="554.3" width="1" height="2.0" fill="#1e8cdc"/><rect x="492" y="554.5" width="1" height="1.3" fill="#14a0f0"/><rect x="493" y="552.4" width="1" height="3.9" fill="#0a3cb4"/><rect x="493" y="553.9" width="1" height="2.4" fill="#3cb4e6"/><rect x="494" y="552.1" width="1" height="4.2" fill="#0a3cb4"/><rect x="494" y="554.8" width="1" height="1.5" fill="#1e8cdc"/><rect x="494" y="551.4" width="1" height="1.3" fill="#50c8dc"/><rect x="495" y="552.1" width="1" height="4.2" fill="#0a3cb4"/><rect x="495" y="554.8" width="1" height="1.5" fill="#1e8cdc"/><rect x="496" y="552.1" width="1" height="4.2" fill="#0a3cb4"/><rect x="496" y="554.3" width="1" height="2.0" fill="#3cb4e6"/><rect x="496" y="553.6" width="1" height="1.3" fill="#14a0f0"/><rect x="497" y="553.5" width="1" height="2.8" fill="#0a3cb4"/><rect x="497" y="554.1" width="1" height="2.2" fill="#28a0e6"/><rect x="498" y="552.6" width="1" height="3.7" fill="#0a3cb4"/><rect x="498" y="555.0" width="1" height="1.3" fill="#50c8dc"/><rect x="498" y="553.8" width="1" height="1.3" fill="#14a0f0"/><rect x="499" y="553.3" width="1" height="3.0" fill="#0a3cb4"/><rect x="499" y="554.8" width="1" height="1.5" fill="#3cb4e6"/><rect x="500" y="553.3" width="1" height="3.0" fill="#0a3cb4"/><rect x="500" y="554.7" width="1" height="1.6" fill="#1e8cdc"/><rect x="501" y="553.6" width="1" height="2.7" fill="#0a3cb4"/><rect x="501" y="554.3" width="1" height="2.0" fill="#1e8cdc"/><rect x="502" y="552.9" width="1" height="3.4" fill="#0a3cb4"/><rect x="502" y="554.5" width="1" height="1.8" fill="#28a0e6"/><rect x="502" y="552.6" width="1" height="1.3" fill="#0a50c8"/><rect x="503" y="552.2" width="1" height="4.1" fill="#0a3cb4"/><rect x="503" y="555.0" width="1" height="1.3" fill="#50c8dc"/><rect x="504" y="551.9" width="1" height="4.4" fill="#0a3cb4"/><rect x="504" y="554.7" width="1" height="1.6" fill="#1e8cdc"/><rect x="505" y="553.3" width="1" height="3.0" fill="#0a3cb4"/><rect x="505" y="554.2" width="1" height="2.1" fill="#50c8dc"/><rect x="506" y="552.6" width="1" height="3.7" fill="#0a3cb4"/><rect x="506" y="553.9" width="1" height="2.4" fill="#3cb4e6"/><rect x="506" y="553.1" width="1" height="1.3" fill="#14a0f0"/><rect x="507" y="553.0" width="1" height="3.3" fill="#0a3cb4"/><rect x="507" y="554.0" width="1" height="2.3" fill="#3cb4e6"/><rect x="508" y="552.5" width="1" height="3.8" fill="#0a3cb4"/><rect x="508" y="553.8" width="1" height="2.5" fill="#28a0e6"/><rect x="508" y="551.6" width="1" height="1.3" fill="#0a50c8"/><rect x="509" y="552.9" width="1" height="3.4" fill="#0a3cb4"/><rect x="509" y="554.1" width="1" height="2.2" fill="#1e8cdc"/><rect x="510" y="552.1" width="1" height="4.2" fill="#0a3cb4"/><rect x="510" y="554.7" width="1" height="1.6" fill="#28a0e6"/><rect x="510" y="552.9" width="1" height="1.3" fill="#50c8dc"/><rect x="511" y="553.3" width="1" height="3.0" fill="#0a3cb4"/><rect x="511" y="555.3" width="1" height="1.0" fill="#3cb4e6"/><rect x="512" y="553.5" width="1" height="2.8" fill="#0a3cb4"/><rect x="512" y="554.8" width="1" height="1.5" fill="#28a0e6"/><rect x="513" y="552.2" width="1" height="4.1" fill="#0a3cb4"/><rect x="513" y="554.8" width="1" height="1.5" fill="#28a0e6"/><rect x="513" y="552.9" width="1" height="1.3" fill="#28c8e6"/><rect x="514" y="552.0" width="1" height="4.3" fill="#0a3cb4"/><rect x="514" y="554.5" width="1" height="1.8" fill="#3cb4e6"/><rect x="515" y="552.4" width="1" height="3.9" fill="#0a3cb4"/><rect x="515" y="553.8" width="1" height="2.5" fill="#1e8cdc"/><rect x="516" y="553.2" width="1" height="3.1" fill="#0a3cb4"/><rect x="516" y="554.7" width="1" height="1.6" fill="#3cb4e6"/><rect x="516" y="553.7" width="1" height="1.3" fill="#28c8e6"/><rect x="517" y="552.8" width="1" height="3.5" fill="#0a3cb4"/><rect x="517" y="553.9" width="1" height="2.4" fill="#3cb4e6"/><rect x="518" y="553.7" width="1" height="2.6" fill="#0a3cb4"/><rect x="518" y="555.1" width="1" height="1.2" fill="#1e8cdc"/><rect x="519" y="551.8" width="1" height="4.5" fill="#0a3cb4"/><rect x="519" y="554.1" width="1" height="2.2" fill="#1e8cdc"/><rect x="519" y="553.1" width="1" height="1.3" fill="#50c8dc"/><rect x="520" y="552.2" width="1" height="4.1" fill="#0a3cb4"/><rect x="520" y="554.7" width="1" height="1.6" fill="#50c8dc"/><rect x="521" y="552.4" width="1" height="3.9" fill="#0a3cb4"/><rect x="521" y="554.0" width="1" height="2.3" fill="#28a0e6"/><rect x="522" y="553.7" width="1" height="2.6" fill="#0a3cb4"/><rect x="522" y="554.7" width="1" height="1.6" fill="#28a0e6"/><rect x="523" y="551.9" width="1" height="4.4" fill="#0a3cb4"/><rect x="523" y="554.6" width="1" height="1.7" fill="#50c8dc"/><rect x="523" y="554.8" width="1" height="1.3" fill="#0a50c8"/><rect x="524" y="552.9" width="1" height="3.4" fill="#0a3cb4"/><rect x="524" y="554.9" width="1" height="1.4" fill="#1e8cdc"/><rect x="524" y="551.7" width="1" height="1.3" fill="#14a0f0"/><rect x="525" y="553.8" width="1" height="2.5" fill="#0a3cb4"/><rect x="525" y="555.0" width="1" height="1.3" fill="#3cb4e6"/><rect x="525" y="555.2" width="1" height="1.3" fill="#14a0f0"/><rect x="526" y="552.7" width="1" height="3.6" fill="#0a3cb4"/><rect x="526" y="555.1" width="1" height="1.2" fill="#1e8cdc"/><rect x="527" y="552.6" width="1" height="3.7" fill="#0a3cb4"/><rect x="527" y="555.2" width="1" height="1.1" fill="#28a0e6"/><rect x="527" y="555.2" width="1" height="1.3" fill="#14a0f0"/><rect x="528" y="553.6" width="1" height="2.7" fill="#0a3cb4"/><rect x="528" y="555.2" width="1" height="1.1" fill="#1e8cdc"/><rect x="529" y="552.0" width="1" height="4.3" fill="#0a3cb4"/><rect x="529" y="554.1" width="1" height="2.2" fill="#3cb4e6"/><rect x="530" y="552.0" width="1" height="4.3" fill="#0a3cb4"/><rect x="530" y="555.0" width="1" height="1.3" fill="#50c8dc"/><rect x="530" y="551.7" width="1" height="1.3" fill="#0a50c8"/><rect x="531" y="552.3" width="1" height="4.0" fill="#0a3cb4"/><rect x="531" y="553.9" width="1" height="2.4" fill="#50c8dc"/><rect x="532" y="551.9" width="1" height="4.4" fill="#0a3cb4"/><rect x="532" y="554.4" width="1" height="1.9" fill="#1e8cdc"/><rect x="532" y="553.9" width="1" height="1.3" fill="#14a0f0"/><rect x="533" y="552.2" width="1" height="4.1" fill="#0a3cb4"/><rect x="533" y="554.9" width="1" height="1.4" fill="#1e8cdc"/><rect x="533" y="553.3" width="1" height="1.3" fill="#28c8e6"/><rect x="534" y="552.1" width="1" height="4.2" fill="#0a3cb4"/><rect x="534" y="554.4" width="1" height="1.9" fill="#1e8cdc"/><rect x="535" y="553.1" width="1" height="3.2" fill="#0a3cb4"/><rect x="535" y="554.7" width="1" height="1.6" fill="#3cb4e6"/><rect x="536" y="553.6" width="1" height="2.7" fill="#0a3cb4"/><rect x="536" y="555.2" width="1" height="1.1" fill="#3cb4e6"/><rect x="536" y="553.9" width="1" height="1.3" fill="#50c8dc"/><rect x="537" y="553.1" width="1" height="3.2" fill="#0a3cb4"/><rect x="537" y="554.7" width="1" height="1.6" fill="#3cb4e6"/><rect x="537" y="553.1" width="1" height="1.3" fill="#0a50c8"/><rect x="538" y="553.5" width="1" height="2.8" fill="#0a3cb4"/><rect x="538" y="554.2" width="1" height="2.1" fill="#50c8dc"/><rect x="539" y="552.5" width="1" height="3.8" fill="#0a3cb4"/><rect x="539" y="554.7" width="1" height="1.6" fill="#50c8dc"/><rect x="540" y="553.6" width="1" height="2.7" fill="#0a3cb4"/><rect x="540" y="554.9" width="1" height="1.4" fill="#50c8dc"/><rect x="540" y="552.0" width="1" height="1.3" fill="#0a50c8"/><rect x="541" y="552.1" width="1" height="4.2" fill="#0a3cb4"/><rect x="541" y="554.7" width="1" height="1.6" fill="#28a0e6"/><rect x="541" y="554.4" width="1" height="1.3" fill="#14a0f0"/><rect x="542" y="551.9" width="1" height="4.4" fill="#0a3cb4"/><rect x="542" y="555.0" width="1" height="1.3" fill="#1e8cdc"/><rect x="543" y="552.5" width="1" height="3.8" fill="#0a3cb4"/><rect x="543" y="554.3" width="1" height="2.0" fill="#28a0e6"/><rect x="544" y="552.2" width="1" height="4.1" fill="#0a3cb4"/><rect x="544" y="554.6" width="1" height="1.7" fill="#28a0e6"/><rect x="545" y="553.1" width="1" height="3.2" fill="#0a3cb4"/><rect x="545" y="554.6" width="1" height="1.7" fill="#3cb4e6"/><rect x="546" y="551.9" width="1" height="4.4" fill="#0a3cb4"/><rect x="546" y="554.1" width="1" height="2.2" fill="#1e8cdc"/><rect x="547" y="553.7" width="1" height="2.6" fill="#0a3cb4"/><rect x="547" y="554.3" width="1" height="2.0" fill="#1e8cdc"/><rect x="548" y="553.8" width="1" height="2.5" fill="#0a3cb4"/><rect x="548" y="554.7" width="1" height="1.6" fill="#28a0e6"/><rect x="549" y="552.6" width="1" height="3.7" fill="#0a3cb4"/><rect x="549" y="555.3" width="1" height="1.0" fill="#50c8dc"/><rect x="550" y="552.8" width="1" height="3.5" fill="#0a3cb4"/><rect x="550" y="554.8" width="1" height="1.5" fill="#50c8dc"/><rect x="551" y="553.3" width="1" height="3.0" fill="#0a3cb4"/><rect x="551" y="555.1" width="1" height="1.2" fill="#28a0e6"/><rect x="551" y="552.2" width="1" height="1.3" fill="#14a0f0"/><rect x="552" y="553.4" width="1" height="2.9" fill="#0a3cb4"/><rect x="552" y="554.3" width="1" height="2.0" fill="#28a0e6"/><rect x="552" y="553.0" width="1" height="1.3" fill="#28c8e6"/><rect x="553" y="551.8" width="1" height="4.5" fill="#0a3cb4"/><rect x="553" y="554.4" width="1" height="1.9" fill="#1e8cdc"/><rect x="554" y="552.3" width="1" height="4.0" fill="#0a3cb4"/><rect x="554" y="554.3" width="1" height="2.0" fill="#50c8dc"/><rect x="554" y="554.4" width="1" height="1.3" fill="#14a0f0"/><rect x="555" y="553.5" width="1" height="2.8" fill="#0a3cb4"/><rect x="555" y="554.5" width="1" height="1.8" fill="#50c8dc"/><rect x="556" y="552.3" width="1" height="4.0" fill="#0a3cb4"/><rect x="556" y="554.0" width="1" height="2.3" fill="#50c8dc"/><rect x="556" y="555.1" width="1" height="1.3" fill="#14a0f0"/><rect x="557" y="552.1" width="1" height="4.2" fill="#0a3cb4"/><rect x="557" y="553.9" width="1" height="2.4" fill="#1e8cdc"/><rect x="557" y="555.2" width="1" height="1.3" fill="#0a50c8"/><rect x="558" y="552.7" width="1" height="3.6" fill="#0a3cb4"/><rect x="558" y="554.9" width="1" height="1.4" fill="#1e8cdc"/><rect x="558" y="554.3" width="1" height="1.3" fill="#50c8dc"/><rect x="559" y="553.8" width="1" height="2.5" fill="#0a3cb4"/><rect x="559" y="554.5" width="1" height="1.8" fill="#28a0e6"/><rect x="560" y="553.4" width="1" height="2.9" fill="#0a3cb4"/><rect x="560" y="554.8" width="1" height="1.5" fill="#3cb4e6"/><rect x="561" y="552.8" width="1" height="3.5" fill="#0a3cb4"/><rect x="561" y="555.0" width="1" height="1.3" fill="#50c8dc"/><rect x="561" y="555.5" width="1" height="1.3" fill="#50c8dc"/><rect x="562" y="553.6" width="1" height="2.7" fill="#0a3cb4"/><rect x="562" y="555.1" width="1" height="1.2" fill="#3cb4e6"/><rect x="563" y="552.7" width="1" height="3.6" fill="#0a3cb4"/><rect x="563" y="554.6" width="1" height="1.7" fill="#3cb4e6"/><rect x="564" y="553.0" width="1" height="3.3" fill="#0a3cb4"/><rect x="564" y="555.1" width="1" height="1.2" fill="#50c8dc"/><rect x="564" y="552.4" width="1" height="1.3" fill="#50c8dc"/><rect x="565" y="551.9" width="1" height="4.4" fill="#0a3cb4"/><rect x="565" y="555.0" width="1" height="1.3" fill="#28a0e6"/><rect x="565" y="553.9" width="1" height="1.3" fill="#14a0f0"/><rect x="566" y="552.0" width="1" height="4.3" fill="#0a3cb4"/><rect x="566" y="554.6" width="1" height="1.7" fill="#3cb4e6"/><rect x="567" y="553.6" width="1" height="2.7" fill="#0a3cb4"/><rect x="567" y="554.9" width="1" height="1.4" fill="#1e8cdc"/><rect x="568" y="552.9" width="1" height="3.4" fill="#0a3cb4"/><rect x="568" y="554.6" width="1" height="1.7" fill="#1e8cdc"/><rect x="569" y="552.8" width="1" height="3.5" fill="#0a3cb4"/><rect x="569" y="553.9" width="1" height="2.4" fill="#1e8cdc"/><rect x="570" y="552.4" width="1" height="3.9" fill="#0a3cb4"/><rect x="570" y="555.1" width="1" height="1.2" fill="#50c8dc"/><rect x="571" y="551.9" width="1" height="4.4" fill="#0a3cb4"/><rect x="571" y="554.5" width="1" height="1.8" fill="#50c8dc"/><rect x="572" y="553.4" width="1" height="2.9" fill="#0a3cb4"/><rect x="572" y="554.8" width="1" height="1.5" fill="#28a0e6"/><rect x="572" y="554.1" width="1" height="1.3" fill="#28c8e6"/><rect x="573" y="552.2" width="1" height="4.1" fill="#0a3cb4"/><rect x="573" y="555.2" width="1" height="1.1" fill="#50c8dc"/><rect x="573" y="555.0" width="1" height="1.3" fill="#28c8e6"/><rect x="574" y="553.8" width="1" height="2.5" fill="#0a3cb4"/><rect x="574" y="554.2" width="1" height="2.1" fill="#3cb4e6"/><rect x="574" y="552.1" width="1" height="1.3" fill="#14a0f0"/><rect x="575" y="553.4" width="1" height="2.9" fill="#0a3cb4"/><rect x="575" y="554.7" width="1" height="1.6" fill="#50c8dc"/><rect x="576" y="552.3" width="1" height="4.0" fill="#0a3cb4"/><rect x="576" y="554.8" width="1" height="1.5" fill="#50c8dc"/><rect x="577" y="553.6" width="1" height="2.7" fill="#0a3cb4"/><rect x="577" y="555.1" width="1" height="1.2" fill="#1e8cdc"/><rect x="578" y="553.7" width="1" height="2.6" fill="#0a3cb4"/><rect x="578" y="554.9" width="1" height="1.4" fill="#1e8cdc"/><rect x="579" y="551.9" width="1" height="4.4" fill="#0a3cb4"/><rect x="579" y="555.0" width="1" height="1.3" fill="#1e8cdc"/><rect x="579" y="552.2" width="1" height="1.3" fill="#14a0f0"/><rect x="580" y="552.9" width="1" height="3.4" fill="#0a3cb4"/><rect x="580" y="553.9" width="1" height="2.4" fill="#28a0e6"/><rect x="581" y="552.4" width="1" height="3.9" fill="#0a3cb4"/><rect x="581" y="555.0" width="1" height="1.3" fill="#50c8dc"/><rect x="582" y="552.8" width="1" height="3.5" fill="#0a3cb4"/><rect x="582" y="555.2" width="1" height="1.1" fill="#1e8cdc"/><rect x="583" y="552.2" width="1" height="4.1" fill="#0a3cb4"/><rect x="583" y="554.7" width="1" height="1.6" fill="#28a0e6"/><rect x="584" y="552.2" width="1" height="4.1" fill="#0a3cb4"/><rect x="584" y="555.2" width="1" height="1.1" fill="#3cb4e6"/><rect x="585" y="552.6" width="1" height="3.7" fill="#0a3cb4"/><rect x="585" y="554.6" width="1" height="1.7" fill="#50c8dc"/><rect x="585" y="555.6" width="1" height="1.3" fill="#50c8dc"/><rect x="586" y="553.3" width="1" height="3.0" fill="#0a3cb4"/><rect x="586" y="554.9" width="1" height="1.4" fill="#1e8cdc"/><rect x="586" y="553.7" width="1" height="1.3" fill="#14a0f0"/><rect x="587" y="553.1" width="1" height="3.2" fill="#0a3cb4"/><rect x="587" y="554.6" width="1" height="1.7" fill="#50c8dc"/><rect x="587" y="553.0" width="1" height="1.3" fill="#14a0f0"/><rect x="588" y="553.2" width="1" height="3.1" fill="#0a3cb4"/><rect x="588" y="554.9" width="1" height="1.4" fill="#28a0e6"/><rect x="588" y="552.2" width="1" height="1.3" fill="#1e46b4"/><rect x="589" y="553.8" width="1" height="2.5" fill="#0a3cb4"/><rect x="589" y="554.0" width="1" height="2.3" fill="#1e8cdc"/><rect x="589" y="553.4" width="1" height="1.3" fill="#0a50c8"/><rect x="590" y="553.8" width="1" height="2.5" fill="#0a3cb4"/><rect x="590" y="555.1" width="1" height="1.2" fill="#50c8dc"/><rect x="590" y="554.1" width="1" height="1.3" fill="#28c8e6"/><rect x="591" y="552.8" width="1" height="3.5" fill="#0a3cb4"/><rect x="591" y="554.1" width="1" height="2.2" fill="#3cb4e6"/><rect x="592" y="552.9" width="1" height="3.4" fill="#0a3cb4"/><rect x="592" y="554.5" width="1" height="1.8" fill="#28a0e6"/><rect x="593" y="552.1" width="1" height="4.2" fill="#0a3cb4"/><rect x="593" y="554.5" width="1" height="1.8" fill="#28a0e6"/><rect x="594" y="553.5" width="1" height="2.8" fill="#0a3cb4"/><rect x="594" y="555.3" width="1" height="1.0" fill="#3cb4e6"/><rect x="595" y="553.3" width="1" height="3.0" fill="#0a3cb4"/><rect x="595" y="554.0" width="1" height="2.3" fill="#50c8dc"/><rect x="595" y="552.9" width="1" height="1.3" fill="#50c8dc"/><rect x="596" y="553.8" width="1" height="2.5" fill="#0a3cb4"/><rect x="596" y="555.0" width="1" height="1.3" fill="#50c8dc"/><rect x="597" y="552.2" width="1" height="4.1" fill="#0a3cb4"/><rect x="597" y="554.9" width="1" height="1.4" fill="#28a0e6"/><rect x="598" y="552.9" width="1" height="3.4" fill="#0a3cb4"/><rect x="598" y="553.9" width="1" height="2.4" fill="#28a0e6"/><rect x="598" y="553.6" width="1" height="1.3" fill="#28c8e6"/><rect x="599" y="553.5" width="1" height="2.8" fill="#0a3cb4"/><rect x="599" y="554.4" width="1" height="1.9" fill="#50c8dc"/><rect x="600" y="553.6" width="1" height="2.7" fill="#0a3cb4"/><rect x="600" y="554.6" width="1" height="1.7" fill="#1e8cdc"/><rect x="601" y="552.8" width="1" height="3.5" fill="#0a3cb4"/><rect x="601" y="555.0" width="1" height="1.3" fill="#50c8dc"/><rect x="602" y="552.9" width="1" height="3.4" fill="#0a3cb4"/><rect x="602" y="554.6" width="1" height="1.7" fill="#1e8cdc"/><rect x="603" y="551.9" width="1" height="4.4" fill="#0a3cb4"/><rect x="603" y="553.9" width="1" height="2.4" fill="#3cb4e6"/><rect x="604" y="553.4" width="1" height="2.9" fill="#0a3cb4"/><rect x="604" y="553.9" width="1" height="2.4" fill="#50c8dc"/><rect x="605" y="553.1" width="1" height="3.2" fill="#0a3cb4"/><rect x="605" y="553.8" width="1" height="2.5" fill="#1e8cdc"/><rect x="606" y="553.5" width="1" height="2.8" fill="#0a3cb4"/><rect x="606" y="553.9" width="1" height="2.4" fill="#28a0e6"/><rect x="607" y="553.6" width="1" height="2.7" fill="#0a3cb4"/><rect x="607" y="555.1" width="1" height="1.2" fill="#28a0e6"/><rect x="608" y="553.3" width="1" height="3.0" fill="#0a3cb4"/><rect x="608" y="555.1" width="1" height="1.2" fill="#1e8cdc"/><rect x="609" y="552.4" width="1" height="3.9" fill="#0a3cb4"/><rect x="609" y="554.6" width="1" height="1.7" fill="#1e8cdc"/><rect x="610" y="552.8" width="1" height="3.5" fill="#0a3cb4"/><rect x="610" y="554.9" width="1" height="1.4" fill="#1e8cdc"/><rect x="611" y="553.5" width="1" height="2.8" fill="#0a3cb4"/><rect x="611" y="554.9" width="1" height="1.4" fill="#3cb4e6"/><rect x="611" y="552.5" width="1" height="1.3" fill="#14a0f0"/><rect x="612" y="551.9" width="1" height="4.4" fill="#0a3cb4"/><rect x="612" y="553.9" width="1" height="2.4" fill="#50c8dc"/><rect x="613" y="552.2" width="1" height="4.1" fill="#0a3cb4"/><rect x="613" y="554.4" width="1" height="1.9" fill="#28a0e6"/><rect x="614" y="551.9" width="1" height="4.4" fill="#0a3cb4"/><rect x="614" y="554.2" width="1" height="2.1" fill="#28a0e6"/><rect x="614" y="555.5" width="1" height="1.3" fill="#50c8dc"/><rect x="615" y="553.7" width="1" height="2.6" fill="#0a3cb4"/><rect x="615" y="554.4" width="1" height="1.9" fill="#50c8dc"/><rect x="616" y="553.4" width="1" height="2.9" fill="#0a3cb4"/><rect x="616" y="554.8" width="1" height="1.5" fill="#50c8dc"/><rect x="616" y="552.9" width="1" height="1.3" fill="#14a0f0"/><rect x="617" y="553.0" width="1" height="3.3" fill="#0a3cb4"/><rect x="617" y="554.2" width="1" height="2.1" fill="#50c8dc"/><rect x="617" y="548.3" width="1" height="2.4" fill="#0a28a0"/><rect x="618" y="552.4" width="1" height="3.9" fill="#0a3cb4"/><rect x="618" y="555.1" width="1" height="1.2" fill="#50c8dc"/><rect x="619" y="553.5" width="1" height="2.8" fill="#0a3cb4"/><rect x="619" y="553.8" width="1" height="2.5" fill="#3cb4e6"/><rect x="619" y="543.8" width="1" height="2.2" fill="#0a28a0"/><rect x="620" y="553.2" width="1" height="3.1" fill="#0a3cb4"/><rect x="620" y="555.0" width="1" height="1.3" fill="#28a0e6"/><rect x="620" y="555.5" width="1" height="1.3" fill="#14a0f0"/><rect x="621" y="552.7" width="1" height="3.6" fill="#0a3cb4"/><rect x="621" y="555.2" width="1" height="1.1" fill="#50c8dc"/><rect x="622" y="551.9" width="1" height="4.4" fill="#0a3cb4"/><rect x="622" y="554.1" width="1" height="2.2" fill="#50c8dc"/><rect x="622" y="546.5" width="1" height="2.3" fill="#0a28a0"/><rect x="623" y="553.1" width="1" height="3.2" fill="#0a3cb4"/><rect x="623" y="555.2" width="1" height="1.1" fill="#1e8cdc"/><rect x="624" y="552.6" width="1" height="3.7" fill="#0a3cb4"/><rect x="624" y="554.0" width="1" height="2.3" fill="#3cb4e6"/><rect x="625" y="553.0" width="1" height="3.3" fill="#0a3cb4"/><rect x="625" y="555.3" width="1" height="1.0" fill="#1e8cdc"/><rect x="625" y="547.0" width="1" height="1.6" fill="#0a3cc8"/><rect x="626" y="552.4" width="1" height="3.9" fill="#0a3cb4"/><rect x="626" y="555.2" width="1" height="1.1" fill="#1e8cdc"/><rect x="627" y="553.6" width="1" height="2.7" fill="#0a3cb4"/><rect x="627" y="554.5" width="1" height="1.8" fill="#1e8cdc"/><rect x="627" y="542.5" width="1" height="1.4" fill="#0a28a0"/><rect x="628" y="553.2" width="1" height="3.1" fill="#0a3cb4"/><rect x="628" y="554.8" width="1" height="1.5" fill="#1e8cdc"/><rect x="629" y="553.1" width="1" height="3.2" fill="#0a3cb4"/><rect x="629" y="554.0" width="1" height="2.3" fill="#1e8cdc"/><rect x="629" y="548.8" width="1" height="2.8" fill="#0a28a0"/><rect x="630" y="551.8" width="1" height="4.5" fill="#0a3cb4"/><rect x="630" y="555.1" width="1" height="1.2" fill="#1e8cdc"/><rect x="630" y="551.9" width="1" height="2.5" fill="#0a28a0"/><rect x="631" y="552.2" width="1" height="4.1" fill="#0a3cb4"/><rect x="631" y="555.1" width="1" height="1.2" fill="#28a0e6"/><rect x="632" y="553.5" width="1" height="2.8" fill="#0a3cb4"/><rect x="632" y="553.8" width="1" height="2.5" fill="#1e8cdc"/><rect x="632" y="553.8" width="1" height="1.3" fill="#14a0f0"/><rect x="633" y="553.8" width="1" height="2.5" fill="#0a3cb4"/><rect x="633" y="555.2" width="1" height="1.1" fill="#3cb4e6"/><rect x="633" y="553.1" width="1" height="1.3" fill="#28c8e6"/><rect x="634" y="551.8" width="1" height="4.5" fill="#0a3cb4"/><rect x="634" y="554.5" width="1" height="1.8" fill="#3cb4e6"/><rect x="635" y="553.3" width="1" height="3.0" fill="#0a3cb4"/><rect x="635" y="554.1" width="1" height="2.2" fill="#28a0e6"/><rect x="636" y="552.8" width="1" height="3.5" fill="#0a3cb4"/><rect x="636" y="554.5" width="1" height="1.8" fill="#3cb4e6"/><rect x="636" y="552.6" width="1" height="1.3" fill="#1e46b4"/><rect x="636" y="544.6" width="1" height="1.1" fill="#0a28a0"/><rect x="637" y="552.8" width="1" height="3.5" fill="#0a3cb4"/><rect x="637" y="554.6" width="1" height="1.7" fill="#28a0e6"/><rect x="637" y="546.2" width="1" height="1.0" fill="#1478dc"/><rect x="638" y="552.4" width="1" height="3.9" fill="#0a3cb4"/><rect x="638" y="555.1" width="1" height="1.2" fill="#3cb4e6"/><rect x="638" y="544.8" width="1" height="2.2" fill="#1478dc"/><rect x="639" y="552.8" width="1" height="3.5" fill="#0a3cb4"/><rect x="639" y="554.0" width="1" height="2.3" fill="#1e8cdc"/><rect x="639" y="552.4" width="1" height="1.8" fill="#0a3cc8"/><rect x="640" y="553.4" width="1" height="2.9" fill="#0a3cb4"/><rect x="640" y="555.3" width="1" height="1.0" fill="#28a0e6"/><rect x="641" y="552.6" width="1" height="3.7" fill="#0a3cb4"/><rect x="641" y="555.2" width="1" height="1.1" fill="#3cb4e6"/><rect x="642" y="553.1" width="1" height="3.2" fill="#0a3cb4"/><rect x="642" y="554.7" width="1" height="1.6" fill="#1e8cdc"/><rect x="642" y="555.4" width="1" height="1.3" fill="#14a0f0"/><rect x="642" y="553.0" width="1" height="2.0" fill="#1478dc"/><rect x="643" y="553.0" width="1" height="3.3" fill="#0a3cb4"/><rect x="643" y="554.5" width="1" height="1.8" fill="#1e8cdc"/><rect x="643" y="555.0" width="1" height="1.3" fill="#50c8dc"/><rect x="643" y="553.0" width="1" height="2.2" fill="#0a28a0"/><rect x="644" y="553.7" width="1" height="2.6" fill="#0a3cb4"/><rect x="644" y="554.2" width="1" height="2.1" fill="#3cb4e6"/><rect x="644" y="552.0" width="1" height="1.3" fill="#0a50c8"/><rect x="644" y="551.6" width="1" height="2.9" fill="#0a3cc8"/><rect x="645" y="552.0" width="1" height="4.3" fill="#0a3cb4"/><rect x="645" y="554.5" width="1" height="1.8" fill="#28a0e6"/><rect x="646" y="553.4" width="1" height="2.9" fill="#0a3cb4"/><rect x="646" y="555.0" width="1" height="1.3" fill="#28a0e6"/><rect x="646" y="551.7" width="1" height="1.3" fill="#14a0f0"/><rect x="647" y="553.7" width="1" height="2.6" fill="#0a3cb4"/><rect x="647" y="553.9" width="1" height="2.4" fill="#3cb4e6"/><rect x="648" y="553.6" width="1" height="2.7" fill="#0a3cb4"/><rect x="648" y="554.5" width="1" height="1.8" fill="#28a0e6"/><rect x="648" y="555.4" width="1" height="1.3" fill="#28c8e6"/><rect x="648" y="551.9" width="1" height="2.2" fill="#1478dc"/><rect x="649" y="553.8" width="1" height="2.5" fill="#0a3cb4"/><rect x="649" y="554.5" width="1" height="1.8" fill="#3cb4e6"/><rect x="650" y="552.4" width="1" height="3.9" fill="#0a3cb4"/><rect x="650" y="555.0" width="1" height="1.3" fill="#3cb4e6"/><rect x="650" y="552.0" width="1" height="1.3" fill="#0a50c8"/><rect x="650" y="552.3" width="1" height="2.4" fill="#1478dc"/><rect x="651" y="552.1" width="1" height="4.2" fill="#0a3cb4"/><rect x="651" y="554.5" width="1" height="1.8" fill="#28a0e6"/><rect x="652" y="552.0" width="1" height="4.3" fill="#0a3cb4"/><rect x="652" y="554.7" width="1" height="1.6" fill="#3cb4e6"/><rect x="652" y="552.5" width="1" height="1.3" fill="#1e46b4"/><rect x="652" y="553.3" width="1" height="1.3" fill="#0a3cc8"/><rect x="653" y="553.1" width="1" height="3.2" fill="#0a3cb4"/><rect x="653" y="554.0" width="1" height="2.3" fill="#50c8dc"/><rect x="654" y="553.8" width="1" height="2.5" fill="#0a3cb4"/><rect x="654" y="554.9" width="1" height="1.4" fill="#28a0e6"/><rect x="655" y="552.2" width="1" height="4.1" fill="#0a3cb4"/><rect x="655" y="554.1" width="1" height="2.2" fill="#3cb4e6"/><rect x="655" y="548.9" width="1" height="2.0" fill="#0a28a0"/><rect x="656" y="552.1" width="1" height="4.2" fill="#0a3cb4"/><rect x="656" y="554.3" width="1" height="2.0" fill="#50c8dc"/><rect x="656" y="547.9" width="1" height="2.5" fill="#0a3cc8"/><rect x="657" y="553.2" width="1" height="3.1" fill="#0a3cb4"/><rect x="657" y="555.0" width="1" height="1.3" fill="#50c8dc"/><rect x="657" y="542.4" width="1" height="1.6" fill="#1478dc"/><rect x="658" y="552.3" width="1" height="4.0" fill="#0a3cb4"/><rect x="658" y="553.9" width="1" height="2.4" fill="#1e8cdc"/><rect x="659" y="552.0" width="1" height="4.3" fill="#0a3cb4"/><rect x="659" y="554.9" width="1" height="1.4" fill="#28a0e6"/><rect x="660" y="552.7" width="1" height="3.6" fill="#0a3cb4"/><rect x="660" y="554.4" width="1" height="1.9" fill="#28a0e6"/><rect x="660" y="551.3" width="1" height="1.3" fill="#50c8dc"/><rect x="660" y="551.0" width="1" height="1.2" fill="#1478dc"/><rect x="661" y="552.9" width="1" height="3.4" fill="#0a3cb4"/><rect x="661" y="554.6" width="1" height="1.7" fill="#28a0e6"/><rect x="661" y="546.5" width="1" height="2.6" fill="#0a28a0"/><rect x="662" y="552.9" width="1" height="3.4" fill="#0a3cb4"/><rect x="662" y="555.2" width="1" height="1.1" fill="#28a0e6"/><rect x="663" y="553.6" width="1" height="2.7" fill="#0a3cb4"/><rect x="663" y="555.1" width="1" height="1.2" fill="#28a0e6"/><rect x="664" y="552.7" width="1" height="3.6" fill="#0a3cb4"/><rect x="664" y="555.1" width="1" height="1.2" fill="#1e8cdc"/><rect x="665" y="551.9" width="1" height="4.4" fill="#0a3cb4"/><rect x="665" y="554.4" width="1" height="1.9" fill="#28a0e6"/><rect x="665" y="554.2" width="1" height="1.3" fill="#14a0f0"/><rect x="666" y="551.9" width="1" height="4.4" fill="#0a3cb4"/><rect x="666" y="554.4" width="1" height="1.9" fill="#1e8cdc"/><rect x="666" y="554.8" width="1" height="1.3" fill="#28c8e6"/><rect x="666" y="543.1" width="1" height="1.4" fill="#0a3cc8"/><rect x="667" y="553.4" width="1" height="2.9" fill="#0a3cb4"/><rect x="667" y="554.7" width="1" height="1.6" fill="#28a0e6"/><rect x="668" y="553.5" width="1" height="2.8" fill="#0a3cb4"/><rect x="668" y="555.3" width="1" height="1.0" fill="#1e8cdc"/><rect x="668" y="553.0" width="1" height="1.3" fill="#1e46b4"/><rect x="668" y="546.6" width="1" height="1.6" fill="#0a3cc8"/><rect x="669" y="553.3" width="1" height="3.0" fill="#0a3cb4"/><rect x="669" y="554.0" width="1" height="2.3" fill="#3cb4e6"/><rect x="669" y="542.8" width="1" height="2.2" fill="#1478dc"/><rect x="670" y="552.2" width="1" height="4.1" fill="#0a3cb4"/><rect x="670" y="555.2" width="1" height="1.1" fill="#28a0e6"/><rect x="670" y="550.6" width="1" height="1.1" fill="#0a3cc8"/><rect x="671" y="552.2" width="1" height="4.1" fill="#0a3cb4"/><rect x="671" y="555.1" width="1" height="1.2" fill="#50c8dc"/><rect x="671" y="554.2" width="1" height="1.3" fill="#14a0f0"/><rect x="672" y="552.1" width="1" height="4.2" fill="#0a3cb4"/><rect x="672" y="553.8" width="1" height="2.5" fill="#3cb4e6"/><rect x="672" y="549.7" width="1" height="1.8" fill="#0a28a0"/><rect x="673" y="553.2" width="1" height="3.1" fill="#0a3cb4"/><rect x="673" y="553.8" width="1" height="2.5" fill="#50c8dc"/><rect x="674" y="553.3" width="1" height="3.0" fill="#0a3cb4"/><rect x="674" y="555.3" width="1" height="1.0" fill="#1e8cdc"/><rect x="674" y="555.2" width="1" height="1.3" fill="#1e46b4"/><rect x="674" y="543.5" width="1" height="2.6" fill="#0a3cc8"/><rect x="675" y="552.4" width="1" height="3.9" fill="#0a3cb4"/><rect x="675" y="554.5" width="1" height="1.8" fill="#3cb4e6"/><rect x="675" y="553.2" width="1" height="1.3" fill="#28c8e6"/><rect x="676" y="551.9" width="1" height="4.4" fill="#0a3cb4"/><rect x="676" y="554.9" width="1" height="1.4" fill="#50c8dc"/><rect x="676" y="551.3" width="1" height="2.6" fill="#0a3cc8"/><rect x="677" y="552.4" width="1" height="3.9" fill="#0a3cb4"/><rect x="677" y="554.3" width="1" height="2.0" fill="#3cb4e6"/><rect x="677" y="552.8" width="1" height="1.3" fill="#0a50c8"/><rect x="677" y="551.4" width="1" height="2.3" fill="#0a28a0"/><rect x="678" y="552.2" width="1" height="4.1" fill="#0a3cb4"/><rect x="678" y="554.1" width="1" height="2.2" fill="#50c8dc"/><rect x="678" y="548.2" width="1" height="2.4" fill="#0a3cc8"/><rect x="679" y="553.2" width="1" height="3.1" fill="#0a3cb4"/><rect x="679" y="555.1" width="1" height="1.2" fill="#1e8cdc"/><rect x="679" y="544.9" width="1" height="1.6" fill="#1478dc"/><rect x="680" y="552.3" width="1" height="4.0" fill="#0a3cb4"/><rect x="680" y="554.6" width="1" height="1.7" fill="#3cb4e6"/><rect x="680" y="555.1" width="1" height="1.3" fill="#1e46b4"/><rect x="680" y="542.3" width="1" height="2.2" fill="#1478dc"/><rect x="681" y="552.9" width="1" height="3.4" fill="#0a3cb4"/><rect x="681" y="555.1" width="1" height="1.2" fill="#1e8cdc"/><rect x="682" y="552.6" width="1" height="3.7" fill="#0a3cb4"/><rect x="682" y="554.1" width="1" height="2.2" fill="#50c8dc"/><rect x="682" y="544.1" width="1" height="2.3" fill="#1478dc"/><rect x="683" y="552.5" width="1" height="3.8" fill="#0a3cb4"/><rect x="683" y="554.5" width="1" height="1.8" fill="#28a0e6"/><rect x="683" y="552.8" width="1" height="2.0" fill="#0a28a0"/><rect x="684" y="552.8" width="1" height="3.5" fill="#0a3cb4"/><rect x="684" y="555.1" width="1" height="1.2" fill="#1e8cdc"/><rect x="684" y="555.7" width="1" height="1.3" fill="#0a50c8"/><rect x="684" y="545.5" width="1" height="1.3" fill="#0a28a0"/><rect x="685" y="553.4" width="1" height="2.9" fill="#0a3cb4"/><rect x="685" y="554.9" width="1" height="1.4" fill="#50c8dc"/><rect x="685" y="551.4" width="1" height="1.3" fill="#50c8dc"/><rect x="685" y="544.7" width="1" height="2.9" fill="#1478dc"/><rect x="686" y="553.1" width="1" height="3.2" fill="#0a3cb4"/><rect x="686" y="554.9" width="1" height="1.4" fill="#28a0e6"/><rect x="687" y="552.2" width="1" height="4.1" fill="#0a3cb4"/><rect x="687" y="555.3" width="1" height="1.0" fill="#50c8dc"/><rect x="687" y="551.5" width="1" height="1.3" fill="#1e46b4"/><rect x="688" y="553.1" width="1" height="3.2" fill="#0a3cb4"/><rect x="688" y="554.5" width="1" height="1.8" fill="#28a0e6"/><rect x="688" y="549.5" width="1" height="2.0" fill="#1478dc"/><rect x="689" y="553.3" width="1" height="3.0" fill="#0a3cb4"/><rect x="689" y="554.6" width="1" height="1.7" fill="#50c8dc"/><rect x="689" y="551.8" width="1" height="1.3" fill="#50c8dc"/><rect x="690" y="552.9" width="1" height="3.4" fill="#0a3cb4"/><rect x="690" y="554.1" width="1" height="2.2" fill="#3cb4e6"/><rect x="690" y="551.4" width="1" height="1.3" fill="#1e46b4"/><rect x="691" y="553.1" width="1" height="3.2" fill="#0a3cb4"/><rect x="691" y="554.6" width="1" height="1.7" fill="#50c8dc"/><rect x="692" y="552.6" width="1" height="3.7" fill="#0a3cb4"/><rect x="692" y="554.4" width="1" height="1.9" fill="#50c8dc"/><rect x="692" y="548.9" width="1" height="2.2" fill="#0a28a0"/><rect x="693" y="552.0" width="1" height="4.3" fill="#0a3cb4"/><rect x="693" y="554.6" width="1" height="1.7" fill="#3cb4e6"/><rect x="694" y="553.6" width="1" height="2.7" fill="#0a3cb4"/><rect x="694" y="553.8" width="1" height="2.5" fill="#28a0e6"/><rect x="695" y="552.0" width="1" height="4.3" fill="#0a3cb4"/><rect x="695" y="553.8" width="1" height="2.5" fill="#3cb4e6"/><rect x="695" y="548.2" width="1" height="2.9" fill="#1478dc"/><rect x="696" y="553.8" width="1" height="2.5" fill="#0a3cb4"/><rect x="696" y="555.2" width="1" height="1.1" fill="#1e8cdc"/><rect x="697" y="552.6" width="1" height="3.7" fill="#0a3cb4"/><rect x="697" y="554.2" width="1" height="2.1" fill="#3cb4e6"/><rect x="698" y="552.5" width="1" height="3.8" fill="#0a3cb4"/><rect x="698" y="554.9" width="1" height="1.4" fill="#1e8cdc"/><rect x="698" y="552.6" width="1" height="1.3" fill="#50c8dc"/><rect x="699" y="552.8" width="1" height="3.5" fill="#0a3cb4"/><rect x="699" y="555.0" width="1" height="1.3" fill="#50c8dc"/><rect x="699" y="550.7" width="1" height="1.1" fill="#0a28a0"/><rect x="700" y="553.3" width="1" height="3.0" fill="#0a3cb4"/><rect x="700" y="555.0" width="1" height="1.3" fill="#50c8dc"/><rect x="700" y="545.7" width="1" height="2.2" fill="#0a3cc8"/><rect x="701" y="553.1" width="1" height="3.2" fill="#0a3cb4"/><rect x="701" y="553.8" width="1" height="2.5" fill="#50c8dc"/><rect x="701" y="553.0" width="1" height="1.3" fill="#28c8e6"/><rect x="701" y="546.2" width="1" height="1.2" fill="#0a3cc8"/><rect x="702" y="553.6" width="1" height="2.7" fill="#0a3cb4"/><rect x="702" y="555.2" width="1" height="1.1" fill="#28a0e6"/><rect x="702" y="554.6" width="1" height="1.3" fill="#1e46b4"/><rect x="702" y="551.7" width="1" height="2.4" fill="#0a28a0"/><rect x="703" y="552.6" width="1" height="3.7" fill="#0a3cb4"/><rect x="703" y="554.6" width="1" height="1.7" fill="#3cb4e6"/><rect x="704" y="552.2" width="1" height="4.1" fill="#0a3cb4"/><rect x="704" y="554.9" width="1" height="1.4" fill="#28a0e6"/><rect x="704" y="550.8" width="1" height="2.2" fill="#1478dc"/><rect x="705" y="553.2" width="1" height="3.1" fill="#0a3cb4"/><rect x="705" y="553.9" width="1" height="2.4" fill="#50c8dc"/><rect x="706" y="552.4" width="1" height="3.9" fill="#0a3cb4"/><rect x="706" y="554.9" width="1" height="1.4" fill="#28a0e6"/><rect x="706" y="551.9" width="1" height="2.3" fill="#1478dc"/><rect x="707" y="552.4" width="1" height="3.9" fill="#0a3cb4"/><rect x="707" y="554.8" width="1" height="1.5" fill="#1e8cdc"/><rect x="707" y="549.4" width="1" height="2.6" fill="#1478dc"/><rect x="708" y="552.8" width="1" height="3.5" fill="#0a3cb4"/><rect x="708" y="555.1" width="1" height="1.2" fill="#1e8cdc"/><rect x="708" y="549.8" width="1" height="2.0" fill="#0a28a0"/><rect x="709" y="552.4" width="1" height="3.9" fill="#0a3cb4"/><rect x="709" y="554.7" width="1" height="1.6" fill="#1e8cdc"/><rect x="709" y="547.9" width="1" height="1.5" fill="#1478dc"/><rect x="710" y="552.9" width="1" height="3.4" fill="#0a3cb4"/><rect x="710" y="554.4" width="1" height="1.9" fill="#28a0e6"/><rect x="710" y="546.4" width="1" height="1.2" fill="#0a3cc8"/><rect x="711" y="552.1" width="1" height="4.2" fill="#0a3cb4"/><rect x="711" y="554.2" width="1" height="2.1" fill="#3cb4e6"/><rect x="712" y="553.1" width="1" height="3.2" fill="#0a3cb4"/><rect x="712" y="555.3" width="1" height="1.0" fill="#50c8dc"/><rect x="712" y="544.9" width="1" height="1.1" fill="#0a3cc8"/><rect x="713" y="553.8" width="1" height="2.5" fill="#0a3cb4"/><rect x="713" y="554.5" width="1" height="1.8" fill="#3cb4e6"/><rect x="713" y="547.0" width="1" height="1.4" fill="#0a28a0"/><rect x="714" y="553.4" width="1" height="2.9" fill="#0a3cb4"/><rect x="714" y="555.2" width="1" height="1.1" fill="#3cb4e6"/><rect x="714" y="552.3" width="1" height="1.3" fill="#50c8dc"/><rect x="714" y="546.3" width="1" height="2.1" fill="#0a28a0"/><rect x="715" y="552.8" width="1" height="3.5" fill="#0a3cb4"/><rect x="715" y="554.6" width="1" height="1.7" fill="#1e8cdc"/><rect x="716" y="552.1" width="1" height="4.2" fill="#0a3cb4"/><rect x="716" y="554.1" width="1" height="2.2" fill="#3cb4e6"/><rect x="716" y="550.1" width="1" height="2.3" fill="#0a3cc8"/><rect x="717" y="552.7" width="1" height="3.6" fill="#0a3cb4"/><rect x="717" y="554.4" width="1" height="1.9" fill="#50c8dc"/><rect x="717" y="543.4" width="1" height="1.0" fill="#0a3cc8"/><rect x="718" y="553.2" width="1" height="3.1" fill="#0a3cb4"/><rect x="718" y="554.8" width="1" height="1.5" fill="#50c8dc"/><rect x="718" y="553.2" width="1" height="1.3" fill="#14a0f0"/><rect x="719" y="552.2" width="1" height="4.1" fill="#0a3cb4"/><rect x="719" y="554.2" width="1" height="2.1" fill="#50c8dc"/><rect x="719" y="546.1" width="1" height="1.6" fill="#1478dc"/><rect x="720" y="553.0" width="1" height="3.3" fill="#0a3cb4"/><rect x="720" y="554.5" width="1" height="1.8" fill="#50c8dc"/><rect x="720" y="555.8" width="1" height="1.3" fill="#28c8e6"/><rect x="721" y="552.7" width="1" height="3.6" fill="#0a3cb4"/><rect x="721" y="554.1" width="1" height="2.2" fill="#28a0e6"/><rect x="722" y="552.2" width="1" height="4.1" fill="#0a3cb4"/><rect x="722" y="554.9" width="1" height="1.4" fill="#28a0e6"/><rect x="722" y="542.9" width="1" height="1.7" fill="#0a28a0"/><rect x="723" y="552.5" width="1" height="3.8" fill="#0a3cb4"/><rect x="723" y="554.1" width="1" height="2.2" fill="#3cb4e6"/><rect x="724" y="552.3" width="1" height="4.0" fill="#0a3cb4"/><rect x="724" y="555.0" width="1" height="1.3" fill="#1e8cdc"/><rect x="724" y="546.0" width="1" height="1.3" fill="#1478dc"/><rect x="725" y="552.3" width="1" height="4.0" fill="#0a3cb4"/><rect x="725" y="553.8" width="1" height="2.5" fill="#50c8dc"/><rect x="725" y="552.5" width="1" height="2.1" fill="#0a3cc8"/><rect x="726" y="552.8" width="1" height="3.5" fill="#0a3cb4"/><rect x="726" y="554.2" width="1" height="2.1" fill="#28a0e6"/><rect x="727" y="552.4" width="1" height="3.9" fill="#0a3cb4"/><rect x="727" y="555.2" width="1" height="1.1" fill="#1e8cdc"/><rect x="727" y="544.9" width="1" height="2.3" fill="#0a28a0"/><rect x="728" y="552.7" width="1" height="3.6" fill="#0a3cb4"/><rect x="728" y="554.9" width="1" height="1.4" fill="#50c8dc"/><rect x="728" y="555.6" width="1" height="1.3" fill="#1e46b4"/><rect x="728" y="551.7" width="1" height="1.5" fill="#0a3cc8"/><rect x="729" y="553.0" width="1" height="3.3" fill="#0a3cb4"/><rect x="729" y="554.3" width="1" height="2.0" fill="#50c8dc"/><rect x="729" y="543.4" width="1" height="2.2" fill="#0a28a0"/><rect x="730" y="553.1" width="1" height="3.2" fill="#0a3cb4"/><rect x="730" y="554.3" width="1" height="2.0" fill="#1e8cdc"/><rect x="731" y="553.4" width="1" height="2.9" fill="#0a3cb4"/><rect x="731" y="554.7" width="1" height="1.6" fill="#50c8dc"/><rect x="731" y="552.5" width="1" height="1.3" fill="#0a50c8"/><rect x="731" y="549.2" width="1" height="1.5" fill="#1478dc"/><rect x="732" y="553.1" width="1" height="3.2" fill="#0a3cb4"/><rect x="732" y="555.1" width="1" height="1.2" fill="#50c8dc"/><rect x="732" y="544.7" width="1" height="1.5" fill="#0a3cc8"/><rect x="733" y="552.9" width="1" height="3.4" fill="#0a3cb4"/><rect x="733" y="553.8" width="1" height="2.5" fill="#28a0e6"/><rect x="734" y="552.0" width="1" height="4.3" fill="#0a3cb4"/><rect x="734" y="553.9" width="1" height="2.4" fill="#50c8dc"/><rect x="734" y="553.7" width="1" height="1.3" fill="#14a0f0"/><rect x="734" y="549.7" width="1" height="2.2" fill="#0a3cc8"/><rect x="735" y="551.9" width="1" height="4.4" fill="#0a3cb4"/><rect x="735" y="554.6" width="1" height="1.7" fill="#50c8dc"/><rect x="735" y="552.5" width="1" height="1.3" fill="#14a0f0"/><rect x="736" y="553.5" width="1" height="2.8" fill="#0a3cb4"/><rect x="736" y="554.3" width="1" height="2.0" fill="#3cb4e6"/><rect x="736" y="547.0" width="1" height="2.5" fill="#0a3cc8"/><rect x="737" y="553.3" width="1" height="3.0" fill="#0a3cb4"/><rect x="737" y="554.8" width="1" height="1.5" fill="#1e8cdc"/><rect x="737" y="554.7" width="1" height="1.3" fill="#1e46b4"/><rect x="738" y="552.5" width="1" height="3.8" fill="#0a3cb4"/><rect x="738" y="553.9" width="1" height="2.4" fill="#1e8cdc"/><rect x="739" y="552.2" width="1" height="4.1" fill="#0a3cb4"/><rect x="739" y="554.2" width="1" height="2.1" fill="#28a0e6"/><rect x="740" y="553.0" width="1" height="3.3" fill="#0a3cb4"/><rect x="740" y="555.0" width="1" height="1.3" fill="#50c8dc"/><rect x="740" y="555.3" width="1" height="1.3" fill="#14a0f0"/><rect x="741" y="552.4" width="1" height="3.9" fill="#0a3cb4"/><rect x="741" y="554.2" width="1" height="2.1" fill="#3cb4e6"/><rect x="742" y="552.0" width="1" height="4.3" fill="#0a3cb4"/><rect x="742" y="554.6" width="1" height="1.7" fill="#3cb4e6"/><rect x="743" y="553.5" width="1" height="2.8" fill="#0a3cb4"/><rect x="743" y="554.6" width="1" height="1.7" fill="#1e8cdc"/><rect x="743" y="555.7" width="1" height="1.3" fill="#14a0f0"/><rect x="744" y="553.0" width="1" height="3.3" fill="#0a3cb4"/><rect x="744" y="554.1" width="1" height="2.2" fill="#28a0e6"/><rect x="745" y="552.7" width="1" height="3.6" fill="#0a3cb4"/><rect x="745" y="554.0" width="1" height="2.3" fill="#28a0e6"/><rect x="746" y="552.1" width="1" height="4.2" fill="#0a3cb4"/><rect x="746" y="554.9" width="1" height="1.4" fill="#50c8dc"/><rect x="747" y="552.3" width="1" height="4.0" fill="#0a3cb4"/><rect x="747" y="554.4" width="1" height="1.9" fill="#50c8dc"/><rect x="747" y="551.6" width="1" height="1.3" fill="#50c8dc"/><rect x="748" y="552.9" width="1" height="3.4" fill="#0a3cb4"/><rect x="748" y="554.3" width="1" height="2.0" fill="#28a0e6"/><rect x="748" y="553.2" width="1" height="1.3" fill="#50c8dc"/><rect x="749" y="552.8" width="1" height="3.5" fill="#0a3cb4"/><rect x="749" y="554.9" width="1" height="1.4" fill="#1e8cdc"/><rect x="750" y="553.2" width="1" height="3.1" fill="#0a3cb4"/><rect x="750" y="554.7" width="1" height="1.6" fill="#28a0e6"/><rect x="750" y="552.6" width="1" height="1.3" fill="#50c8dc"/><rect x="751" y="551.9" width="1" height="4.4" fill="#0a3cb4"/><rect x="751" y="554.0" width="1" height="2.3" fill="#28a0e6"/><rect x="752" y="552.4" width="1" height="3.9" fill="#0a3cb4"/><rect x="752" y="555.1" width="1" height="1.2" fill="#50c8dc"/><rect x="753" y="552.5" width="1" height="3.8" fill="#0a3cb4"/><rect x="753" y="555.2" width="1" height="1.1" fill="#1e8cdc"/><rect x="754" y="552.4" width="1" height="3.9" fill="#0a3cb4"/><rect x="754" y="554.1" width="1" height="2.2" fill="#50c8dc"/><rect x="755" y="552.7" width="1" height="3.6" fill="#0a3cb4"/><rect x="755" y="555.2" width="1" height="1.1" fill="#3cb4e6"/><rect x="756" y="552.6" width="1" height="3.7" fill="#0a3cb4"/><rect x="756" y="553.8" width="1" height="2.5" fill="#1e8cdc"/><rect x="757" y="552.3" width="1" height="4.0" fill="#0a3cb4"/><rect x="757" y="553.8" width="1" height="2.5" fill="#50c8dc"/><rect x="757" y="552.4" width="1" height="1.3" fill="#50c8dc"/><rect x="758" y="553.7" width="1" height="2.6" fill="#0a3cb4"/><rect x="758" y="554.6" width="1" height="1.7" fill="#1e8cdc"/><rect x="759" y="552.4" width="1" height="3.9" fill="#0a3cb4"/><rect x="759" y="555.1" width="1" height="1.2" fill="#28a0e6"/><rect x="760" y="552.4" width="1" height="3.9" fill="#0a3cb4"/><rect x="760" y="555.2" width="1" height="1.1" fill="#28a0e6"/><rect x="761" y="552.6" width="1" height="3.7" fill="#0a3cb4"/><rect x="761" y="554.6" width="1" height="1.7" fill="#28a0e6"/><rect x="762" y="553.4" width="1" height="2.9" fill="#0a3cb4"/><rect x="762" y="555.0" width="1" height="1.3" fill="#50c8dc"/><rect x="763" y="553.7" width="1" height="2.6" fill="#0a3cb4"/><rect x="763" y="554.4" width="1" height="1.9" fill="#50c8dc"/><rect x="764" y="553.4" width="1" height="2.9" fill="#0a3cb4"/><rect x="764" y="553.9" width="1" height="2.4" fill="#3cb4e6"/><rect x="765" y="553.5" width="1" height="2.8" fill="#0a3cb4"/><rect x="765" y="555.0" width="1" height="1.3" fill="#50c8dc"/><rect x="765" y="555.0" width="1" height="1.3" fill="#0a50c8"/><rect x="766" y="553.2" width="1" height="3.1" fill="#0a3cb4"/><rect x="766" y="553.9" width="1" height="2.4" fill="#28a0e6"/><rect x="767" y="553.3" width="1" height="3.0" fill="#0a3cb4"/><rect x="767" y="553.9" width="1" height="2.4" fill="#50c8dc"/><rect x="768" y="553.5" width="1" height="2.8" fill="#0a3cb4"/><rect x="768" y="555.1" width="1" height="1.2" fill="#50c8dc"/><rect x="769" y="552.4" width="1" height="3.9" fill="#0a3cb4"/><rect x="769" y="554.1" width="1" height="2.2" fill="#28a0e6"/><rect x="769" y="555.4" width="1" height="1.3" fill="#1e46b4"/><rect x="770" y="553.7" width="1" height="2.6" fill="#0a3cb4"/><rect x="770" y="555.0" width="1" height="1.3" fill="#1e8cdc"/><rect x="770" y="552.2" width="1" height="1.3" fill="#1e46b4"/><rect x="771" y="553.4" width="1" height="2.9" fill="#0a3cb4"/><rect x="771" y="554.2" width="1" height="2.1" fill="#1e8cdc"/><rect x="772" y="552.7" width="1" height="3.6" fill="#0a3cb4"/><rect x="772" y="554.4" width="1" height="1.9" fill="#50c8dc"/><rect x="773" y="552.1" width="1" height="4.2" fill="#0a3cb4"/><rect x="773" y="554.4" width="1" height="1.9" fill="#3cb4e6"/><rect x="773" y="552.3" width="1" height="1.3" fill="#50c8dc"/><rect x="774" y="552.4" width="1" height="3.9" fill="#0a3cb4"/><rect x="774" y="555.0" width="1" height="1.3" fill="#50c8dc"/><rect x="774" y="555.0" width="1" height="1.3" fill="#28c8e6"/><rect x="775" y="551.8" width="1" height="4.5" fill="#0a3cb4"/><rect x="775" y="554.0" width="1" height="2.3" fill="#3cb4e6"/><rect x="775" y="554.8" width="1" height="1.3" fill="#50c8dc"/><rect x="776" y="553.3" width="1" height="3.0" fill="#0a3cb4"/><rect x="776" y="555.2" width="1" height="1.1" fill="#28a0e6"/><rect x="777" y="552.0" width="1" height="4.3" fill="#0a3cb4"/><rect x="777" y="554.5" width="1" height="1.8" fill="#28a0e6"/><rect x="778" y="552.3" width="1" height="4.0" fill="#0a3cb4"/><rect x="778" y="554.5" width="1" height="1.8" fill="#50c8dc"/><rect x="779" y="551.8" width="1" height="4.5" fill="#0a3cb4"/><rect x="779" y="554.6" width="1" height="1.7" fill="#50c8dc"/><rect x="779" y="551.4" width="1" height="1.3" fill="#28c8e6"/><rect x="780" y="552.6" width="1" height="3.7" fill="#0a3cb4"/><rect x="780" y="553.9" width="1" height="2.4" fill="#1e8cdc"/><rect x="781" y="552.8" width="1" height="3.5" fill="#0a3cb4"/><rect x="781" y="554.0" width="1" height="2.3" fill="#28a0e6"/><rect x="781" y="553.7" width="1" height="1.3" fill="#1e46b4"/><rect x="782" y="551.9" width="1" height="4.4" fill="#0a3cb4"/><rect x="782" y="554.5" width="1" height="1.8" fill="#3cb4e6"/><rect x="782" y="552.8" width="1" height="1.3" fill="#50c8dc"/><rect x="783" y="551.9" width="1" height="4.4" fill="#0a3cb4"/><rect x="783" y="554.0" width="1" height="2.3" fill="#1e8cdc"/><rect x="784" y="553.2" width="1" height="3.1" fill="#0a3cb4"/><rect x="784" y="555.2" width="1" height="1.1" fill="#28a0e6"/><rect x="785" y="552.5" width="1" height="3.8" fill="#0a3cb4"/><rect x="785" y="553.9" width="1" height="2.4" fill="#3cb4e6"/><rect x="786" y="553.7" width="1" height="2.6" fill="#0a3cb4"/><rect x="786" y="554.9" width="1" height="1.4" fill="#50c8dc"/><rect x="786" y="553.7" width="1" height="1.3" fill="#0a50c8"/><rect x="787" y="552.5" width="1" height="3.8" fill="#0a3cb4"/><rect x="787" y="554.8" width="1" height="1.5" fill="#50c8dc"/><rect x="787" y="555.7" width="1" height="1.3" fill="#1e46b4"/><rect x="788" y="552.6" width="1" height="3.7" fill="#0a3cb4"/><rect x="788" y="554.5" width="1" height="1.8" fill="#28a0e6"/><rect x="789" y="552.9" width="1" height="3.4" fill="#0a3cb4"/><rect x="789" y="555.2" width="1" height="1.1" fill="#3cb4e6"/><rect x="789" y="555.1" width="1" height="1.3" fill="#50c8dc"/><rect x="790" y="553.3" width="1" height="3.0" fill="#0a3cb4"/><rect x="790" y="554.6" width="1" height="1.7" fill="#1e8cdc"/><rect x="790" y="553.8" width="1" height="1.3" fill="#28c8e6"/><rect x="791" y="552.3" width="1" height="4.0" fill="#0a3cb4"/><rect x="791" y="555.0" width="1" height="1.3" fill="#50c8dc"/><rect x="792" y="552.7" width="1" height="3.6" fill="#0a3cb4"/><rect x="792" y="553.9" width="1" height="2.4" fill="#1e8cdc"/><rect x="793" y="553.1" width="1" height="3.2" fill="#0a3cb4"/><rect x="793" y="554.9" width="1" height="1.4" fill="#3cb4e6"/><rect x="793" y="555.0" width="1" height="1.3" fill="#14a0f0"/><rect x="794" y="552.5" width="1" height="3.8" fill="#0a3cb4"/><rect x="794" y="553.9" width="1" height="2.4" fill="#50c8dc"/><rect x="794" y="554.4" width="1" height="1.3" fill="#14a0f0"/><rect x="795" y="553.3" width="1" height="3.0" fill="#0a3cb4"/><rect x="795" y="554.7" width="1" height="1.6" fill="#1e8cdc"/><rect x="795" y="555.8" width="1" height="1.3" fill="#28c8e6"/><rect x="796" y="553.0" width="1" height="3.3" fill="#0a3cb4"/><rect x="796" y="554.1" width="1" height="2.2" fill="#50c8dc"/><rect x="797" y="552.0" width="1" height="4.3" fill="#0a3cb4"/><rect x="797" y="554.9" width="1" height="1.4" fill="#28a0e6"/><rect x="798" y="553.8" width="1" height="2.5" fill="#0a3cb4"/><rect x="798" y="553.9" width="1" height="2.4" fill="#1e8cdc"/><rect x="798" y="553.0" width="1" height="1.3" fill="#14a0f0"/><rect x="799" y="552.3" width="1" height="4.0" fill="#0a3cb4"/><rect x="799" y="554.6" width="1" height="1.7" fill="#3cb4e6"/><rect x="800" y="552.0" width="1" height="4.3" fill="#0a3cb4"/><rect x="800" y="554.5" width="1" height="1.8" fill="#28a0e6"/><rect x="800" y="555.2" width="1" height="1.3" fill="#14a0f0"/><rect x="801" y="552.2" width="1" height="4.1" fill="#0a3cb4"/><rect x="801" y="554.3" width="1" height="2.0" fill="#3cb4e6"/><rect x="802" y="552.6" width="1" height="3.7" fill="#0a3cb4"/><rect x="802" y="554.7" width="1" height="1.6" fill="#50c8dc"/><rect x="802" y="551.5" width="1" height="1.3" fill="#14a0f0"/><rect x="803" y="553.0" width="1" height="3.3" fill="#0a3cb4"/><rect x="803" y="555.1" width="1" height="1.2" fill="#28a0e6"/><rect x="803" y="551.6" width="1" height="1.3" fill="#0a50c8"/><rect x="804" y="553.3" width="1" height="3.0" fill="#0a3cb4"/><rect x="804" y="554.4" width="1" height="1.9" fill="#3cb4e6"/><rect x="804" y="554.2" width="1" height="1.3" fill="#0a50c8"/><rect x="805" y="552.7" width="1" height="3.6" fill="#0a3cb4"/><rect x="805" y="553.9" width="1" height="2.4" fill="#28a0e6"/><rect x="806" y="552.2" width="1" height="4.1" fill="#0a3cb4"/><rect x="806" y="555.2" width="1" height="1.1" fill="#50c8dc"/><rect x="807" y="553.7" width="1" height="2.6" fill="#0a3cb4"/><rect x="807" y="554.4" width="1" height="1.9" fill="#50c8dc"/><rect x="807" y="553.7" width="1" height="1.3" fill="#14a0f0"/><rect x="808" y="552.3" width="1" height="4.0" fill="#0a3cb4"/><rect x="808" y="554.8" width="1" height="1.5" fill="#1e8cdc"/><rect x="808" y="553.5" width="1" height="1.3" fill="#1e46b4"/><rect x="809" y="552.6" width="1" height="3.7" fill="#0a3cb4"/><rect x="809" y="554.6" width="1" height="1.7" fill="#1e8cdc"/><rect x="809" y="551.7" width="1" height="1.3" fill="#50c8dc"/><rect x="810" y="552.1" width="1" height="4.2" fill="#0a3cb4"/><rect x="810" y="554.6" width="1" height="1.7" fill="#3cb4e6"/><rect x="810" y="551.5" width="1" height="1.3" fill="#14a0f0"/><rect x="811" y="553.6" width="1" height="2.7" fill="#0a3cb4"/><rect x="811" y="553.9" width="1" height="2.4" fill="#3cb4e6"/><rect x="812" y="551.9" width="1" height="4.4" fill="#0a3cb4"/><rect x="812" y="554.3" width="1" height="2.0" fill="#3cb4e6"/><rect x="813" y="553.4" width="1" height="2.9" fill="#0a3cb4"/><rect x="813" y="555.0" width="1" height="1.3" fill="#1e8cdc"/><rect x="814" y="553.5" width="1" height="2.8" fill="#0a3cb4"/><rect x="814" y="555.0" width="1" height="1.3" fill="#3cb4e6"/><rect x="814" y="555.7" width="1" height="1.3" fill="#0a50c8"/><rect x="815" y="552.1" width="1" height="4.2" fill="#0a3cb4"/><rect x="815" y="554.1" width="1" height="2.2" fill="#3cb4e6"/><rect x="816" y="552.4" width="1" height="3.9" fill="#0a3cb4"/><rect x="816" y="554.5" width="1" height="1.8" fill="#1e8cdc"/><rect x="817" y="553.3" width="1" height="3.0" fill="#0a3cb4"/><rect x="817" y="554.9" width="1" height="1.4" fill="#28a0e6"/><rect x="817" y="554.5" width="1" height="1.3" fill="#50c8dc"/><rect x="818" y="553.6" width="1" height="2.7" fill="#0a3cb4"/><rect x="818" y="554.0" width="1" height="2.3" fill="#1e8cdc"/><rect x="818" y="551.5" width="1" height="1.3" fill="#1e46b4"/><rect x="819" y="552.6" width="1" height="3.7" fill="#0a3cb4"/><rect x="819" y="554.7" width="1" height="1.6" fill="#50c8dc"/><rect x="819" y="554.4" width="1" height="1.3" fill="#14a0f0"/><rect x="820" y="552.1" width="1" height="4.2" fill="#0a3cb4"/><rect x="820" y="554.6" width="1" height="1.7" fill="#28a0e6"/><rect x="821" y="552.8" width="1" height="3.5" fill="#0a3cb4"/><rect x="821" y="555.0" width="1" height="1.3" fill="#50c8dc"/><rect x="822" y="552.8" width="1" height="3.5" fill="#0a3cb4"/><rect x="822" y="554.1" width="1" height="2.2" fill="#1e8cdc"/><rect x="823" y="553.1" width="1" height="3.2" fill="#0a3cb4"/><rect x="823" y="555.1" width="1" height="1.2" fill="#3cb4e6"/><rect x="824" y="553.1" width="1" height="3.2" fill="#0a3cb4"/><rect x="824" y="555.0" width="1" height="1.3" fill="#50c8dc"/><rect x="825" y="553.2" width="1" height="3.1" fill="#0a3cb4"/><rect x="825" y="555.3" width="1" height="1.0" fill="#50c8dc"/><rect x="826" y="552.2" width="1" height="4.1" fill="#0a3cb4"/><rect x="826" y="554.4" width="1" height="1.9" fill="#28a0e6"/><rect x="827" y="552.4" width="1" height="3.9" fill="#0a3cb4"/><rect x="827" y="554.2" width="1" height="2.1" fill="#50c8dc"/><rect x="828" y="552.6" width="1" height="3.7" fill="#0a3cb4"/><rect x="828" y="554.3" width="1" height="2.0" fill="#50c8dc"/><rect x="829" y="551.9" width="1" height="4.4" fill="#0a3cb4"/><rect x="829" y="554.8" width="1" height="1.5" fill="#3cb4e6"/><rect x="829" y="553.2" width="1" height="1.3" fill="#0a50c8"/><rect x="830" y="552.4" width="1" height="3.9" fill="#0a3cb4"/><rect x="830" y="554.3" width="1" height="2.0" fill="#28a0e6"/><rect x="830" y="555.0" width="1" height="1.3" fill="#50c8dc"/><rect x="831" y="552.8" width="1" height="3.5" fill="#0a3cb4"/><rect x="831" y="554.2" width="1" height="2.1" fill="#1e8cdc"/><rect x="831" y="552.7" width="1" height="1.3" fill="#28c8e6"/><rect x="832" y="553.6" width="1" height="2.7" fill="#0a3cb4"/><rect x="832" y="554.4" width="1" height="1.9" fill="#3cb4e6"/><rect x="833" y="552.8" width="1" height="3.5" fill="#0a3cb4"/><rect x="833" y="553.8" width="1" height="2.5" fill="#50c8dc"/><rect x="833" y="552.0" width="1" height="1.3" fill="#50c8dc"/><rect x="834" y="552.2" width="1" height="4.1" fill="#0a3cb4"/><rect x="834" y="553.8" width="1" height="2.5" fill="#28a0e6"/><rect x="835" y="553.7" width="1" height="2.6" fill="#0a3cb4"/><rect x="835" y="554.7" width="1" height="1.6" fill="#3cb4e6"/><rect x="836" y="552.0" width="1" height="4.3" fill="#0a3cb4"/><rect x="836" y="555.1" width="1" height="1.2" fill="#3cb4e6"/><rect x="837" y="552.0" width="1" height="4.3" fill="#0a3cb4"/><rect x="837" y="553.9" width="1" height="2.4" fill="#28a0e6"/><rect x="837" y="555.5" width="1" height="1.3" fill="#0a50c8"/><rect x="838" y="552.6" width="1" height="3.7" fill="#0a3cb4"/><rect x="838" y="554.2" width="1" height="2.1" fill="#1e8cdc"/><rect x="839" y="553.2" width="1" height="3.1" fill="#0a3cb4"/><rect x="839" y="555.1" width="1" height="1.2" fill="#3cb4e6"/><rect x="840" y="553.6" width="1" height="2.7" fill="#0a3cb4"/><rect x="840" y="554.4" width="1" height="1.9" fill="#1e8cdc"/><rect x="841" y="552.3" width="1" height="4.0" fill="#0a3cb4"/><rect x="841" y="554.9" width="1" height="1.4" fill="#28a0e6"/><rect x="842" y="553.2" width="1" height="3.1" fill="#0a3cb4"/><rect x="842" y="554.3" width="1" height="2.0" fill="#1e8cdc"/><rect x="842" y="555.5" width="1" height="1.3" fill="#50c8dc"/><rect x="843" y="552.4" width="1" height="3.9" fill="#0a3cb4"/><rect x="843" y="554.1" width="1" height="2.2" fill="#28a0e6"/><rect x="844" y="553.7" width="1" height="2.6" fill="#0a3cb4"/><rect x="844" y="554.9" width="1" height="1.4" fill="#28a0e6"/><rect x="845" y="552.2" width="1" height="4.1" fill="#0a3cb4"/><rect x="845" y="555.3" width="1" height="1.0" fill="#1e8cdc"/><rect x="845" y="551.7" width="1" height="1.3" fill="#1e46b4"/><rect x="846" y="553.7" width="1" height="2.6" fill="#0a3cb4"/><rect x="846" y="555.2" width="1" height="1.1" fill="#3cb4e6"/><rect x="847" y="551.8" width="1" height="4.5" fill="#0a3cb4"/><rect x="847" y="555.2" width="1" height="1.1" fill="#3cb4e6"/><rect x="848" y="552.5" width="1" height="3.8" fill="#0a3cb4"/><rect x="848" y="555.2" width="1" height="1.1" fill="#3cb4e6"/><rect x="848" y="554.4" width="1" height="1.3" fill="#14a0f0"/><rect x="849" y="552.0" width="1" height="4.3" fill="#0a3cb4"/><rect x="849" y="555.2" width="1" height="1.1" fill="#3cb4e6"/><ellipse cx="626" cy="546.5" rx="1.35" ry="9.5" fill="#2864d2" opacity="0.8"/><ellipse cx="632" cy="545.5" rx="1.35" ry="10.5" fill="#3c8cdc" opacity="0.8"/><ellipse cx="643" cy="547.5" rx="1.8" ry="5.5" fill="#1e50c8" opacity="0.8"/><ellipse cx="648" cy="549.0" rx="1.8" ry="4.0" fill="#1e46b4" opacity="0.8"/><ellipse cx="660" cy="548.5" rx="1.8" ry="4.5" fill="#1e50c8" opacity="0.8"/><ellipse cx="667" cy="548.5" rx="1.8" ry="3.5" fill="#1e46b4" opacity="0.8"/><ellipse cx="674.5" cy="547.5" rx="2.25" ry="8.5" fill="#28b4c8" opacity="0.8"/><ellipse cx="684" cy="548.0" rx="1.8" ry="5.0" fill="#1e50c8" opacity="0.8"/><ellipse cx="692" cy="549.0" rx="1.35" ry="4.0" fill="#1e46b4" opacity="0.8"/><ellipse cx="700" cy="549.5" rx="1.35" ry="3.5" fill="#1e46b4" opacity="0.8"/><ellipse cx="645.0" cy="540.4" rx="0.9" ry="1.6" fill="#1e46b4" opacity="0.5"/><ellipse cx="661.3" cy="547.8" rx="1.0" ry="1.7" fill="#1e46b4" opacity="0.5"/><ellipse cx="701.0" cy="539.9" rx="1.3" ry="0.9" fill="#1e46b4" opacity="0.5"/><ellipse cx="616.3" cy="549.8" rx="1.6" ry="1.3" fill="#1e46b4" opacity="0.5"/><ellipse cx="625.3" cy="541.2" rx="1.4" ry="0.9" fill="#1e50c8" opacity="0.5"/><ellipse cx="704.5" cy="543.6" rx="0.9" ry="1.4" fill="#1e50c8" opacity="0.5"/><ellipse cx="640.4" cy="544.3" rx="1.5" ry="1.6" fill="#14328c" opacity="0.5"/><ellipse cx="645.2" cy="542.9" rx="1.1" ry="1.7" fill="#2878dc" opacity="0.5"/><ellipse cx="618.8" cy="538.4" rx="1.2" ry="1.4" fill="#14328c" opacity="0.5"/><ellipse cx="670.5" cy="541.1" rx="1.1" ry="1.8" fill="#14328c" opacity="0.5"/><ellipse cx="655.2" cy="541.5" rx="1.7" ry="1.1" fill="#1e50c8" opacity="0.5"/><ellipse cx="641.2" cy="542.7" rx="1.0" ry="1.5" fill="#1e50c8" opacity="0.5"/><ellipse cx="634.6" cy="550.0" rx="1.6" ry="1.7" fill="#1e46b4" opacity="0.5"/><ellipse cx="676.8" cy="550.4" rx="1.0" ry="1.0" fill="#2878dc" opacity="0.5"/><ellipse cx="666.0" cy="543.3" rx="1.0" ry="1.9" fill="#1e50c8" opacity="0.5"/><ellipse cx="616.6" cy="538.4" rx="1.2" ry="1.3" fill="#1e50c8" opacity="0.5"/><ellipse cx="643.9" cy="546.6" rx="0.8" ry="1.5" fill="#14328c" opacity="0.5"/><ellipse cx="643.7" cy="540.4" rx="1.8" ry="0.9" fill="#14328c" opacity="0.5"/><rect x="626" y="553" width="22" height="3" fill="#dc9600" opacity="0.7"/><rect x="670" y="552" width="12" height="4" fill="#c8c814" opacity="0.7"/><ellipse cx="128" cy="554" rx="6" ry="3" fill="#c83200" opacity="0.8"/><ellipse cx="128" cy="553" rx="3" ry="2" fill="#f0c800" opacity="0.7"/></g></g></svg>
<div class="t" style="left:47px;width:60px;text-align:right;top:550.1px;transform-origin:100% 50%">0</div>
<div class="t" style="left:47px;width:60px;text-align:right;top:526.9px;transform-origin:100% 50%">1</div>
<div class="t" style="left:47px;width:60px;text-align:right;top:503.7px;transform-origin:100% 50%">2</div>
<div class="t" style="left:47px;width:60px;text-align:right;top:480.5px;transform-origin:100% 50%">3</div>
<div class="t" style="left:47px;width:60px;text-align:right;top:457.3px;transform-origin:100% 50%">4</div>
<div class="t" style="left:47px;width:60px;text-align:right;top:434.1px;transform-origin:100% 50%">5</div>
<div class="t" style="left:47px;width:60px;text-align:right;top:410.9px;transform-origin:100% 50%">6</div>
<div class="t" style="left:47px;width:60px;text-align:right;top:387.7px;transform-origin:100% 50%">7</div>
<div class="t" style="left:47px;width:60px;text-align:right;top:364.5px;transform-origin:100% 50%">8</div>
<div class="t" style="left:47px;width:60px;text-align:right;top:341.3px;transform-origin:100% 50%">9</div>
<div class="t" style="left:47px;width:60px;text-align:right;top:318.1px;transform-origin:100% 50%">10</div>
<div class="t" style="left:47px;width:60px;text-align:right;top:294.9px;transform-origin:100% 50%">11</div>
<svg width="1182" height="577"><rect x="135" y="557" width="1" height="2" fill="#000"/><rect x="157" y="557" width="1" height="2" fill="#000"/><rect x="178" y="557" width="1" height="2" fill="#000"/><rect x="200" y="557" width="1" height="2" fill="#000"/><rect x="221" y="557" width="1" height="3" fill="#000"/><rect x="243" y="557" width="1" height="2" fill="#000"/><rect x="264" y="557" width="1" height="2" fill="#000"/><rect x="286" y="557" width="1" height="2" fill="#000"/><rect x="307" y="557" width="1" height="2" fill="#000"/><rect x="329" y="557" width="1" height="3" fill="#000"/><rect x="350" y="557" width="1" height="2" fill="#000"/><rect x="372" y="557" width="1" height="2" fill="#000"/><rect x="394" y="557" width="1" height="2" fill="#000"/><rect x="415" y="557" width="1" height="2" fill="#000"/><rect x="437" y="557" width="1" height="3" fill="#000"/><rect x="458" y="557" width="1" height="2" fill="#000"/><rect x="480" y="557" width="1" height="2" fill="#000"/><rect x="501" y="557" width="1" height="2" fill="#000"/><rect x="523" y="557" width="1" height="2" fill="#000"/><rect x="544" y="557" width="1" height="3" fill="#000"/><rect x="566" y="557" width="1" height="2" fill="#000"/><rect x="588" y="557" width="1" height="2" fill="#000"/><rect x="609" y="557" width="1" height="2" fill="#000"/><rect x="631" y="557" width="1" height="2" fill="#000"/><rect x="652" y="557" width="1" height="3" fill="#000"/><rect x="674" y="557" width="1" height="2" fill="#000"/><rect x="695" y="557" width="1" height="2" fill="#000"/><rect x="717" y="557" width="1" height="2" fill="#000"/><rect x="738" y="557" width="1" height="2" fill="#000"/><rect x="760" y="557" width="1" height="3" fill="#000"/><rect x="782" y="557" width="1" height="2" fill="#000"/><rect x="803" y="557" width="1" height="2" fill="#000"/><rect x="825" y="557" width="1" height="2" fill="#000"/><rect x="846" y="557" width="1" height="2" fill="#000"/></svg>
<div class="t" style="left:191.2px;width:60px;text-align:center;top:562px">5</div>
<div class="t" style="left:298.9px;width:60px;text-align:center;top:562px">10</div>
<div class="t" style="left:406.7px;width:60px;text-align:center;top:562px">15</div>
<div class="t" style="left:514.5px;width:60px;text-align:center;top:562px">20</div>
<div class="t" style="left:622.2px;width:60px;text-align:center;top:562px">25</div>
<div class="t" style="left:730.0px;width:60px;text-align:center;top:562px">30</div>
<div class="t" style="left:856px;top:562px;transform-origin:0 50%">s</div>
<div class="a" style="left:6px;top:299px;width:73px;height:259px;border-style:solid;border-width:1px;border-color:#808080 #fff #fff #808080"></div>
<svg width="100" height="577"><line x1="8" y1="533.5" x2="75" y2="533.5" stroke="#808080" stroke-width="1" stroke-dasharray="3 3"/><line x1="8" y1="510.5" x2="75" y2="510.5" stroke="#808080" stroke-width="1" stroke-dasharray="3 3"/><line x1="8" y1="487.5" x2="75" y2="487.5" stroke="#808080" stroke-width="1" stroke-dasharray="3 3"/><line x1="8" y1="463.5" x2="75" y2="463.5" stroke="#808080" stroke-width="1" stroke-dasharray="3 3"/><line x1="8" y1="440.5" x2="75" y2="440.5" stroke="#808080" stroke-width="1" stroke-dasharray="3 3"/><line x1="8" y1="417.5" x2="75" y2="417.5" stroke="#808080" stroke-width="1" stroke-dasharray="3 3"/><line x1="8" y1="394.5" x2="75" y2="394.5" stroke="#808080" stroke-width="1" stroke-dasharray="3 3"/><line x1="8" y1="371.5" x2="75" y2="371.5" stroke="#808080" stroke-width="1" stroke-dasharray="3 3"/><line x1="8" y1="348.5" x2="75" y2="348.5" stroke="#808080" stroke-width="1" stroke-dasharray="3 3"/><line x1="8" y1="324.5" x2="75" y2="324.5" stroke="#808080" stroke-width="1" stroke-dasharray="3 3"/><line x1="8" y1="301.5" x2="75" y2="301.5" stroke="#808080" stroke-width="1" stroke-dasharray="3 3"/><rect x="76" y="300" width="1.5" height="257" fill="#000"/><polygon points="77.5,415 75.3,415 75.3,485 73.4,496.5 71,509 68,521.5 62.5,532.4 55.5,538.6 50,541 28,542.5 27,544 40,546 45,548 52,551 40,553 20,554 8,555.5 8,556.5 77.5,556.5" fill="#000"/></svg>
<div class="t" style="left:6.5px;top:561px;transform-origin:0 50%;transform:scaleX(0.89)">0.000-34.168</div>
</body></html>
